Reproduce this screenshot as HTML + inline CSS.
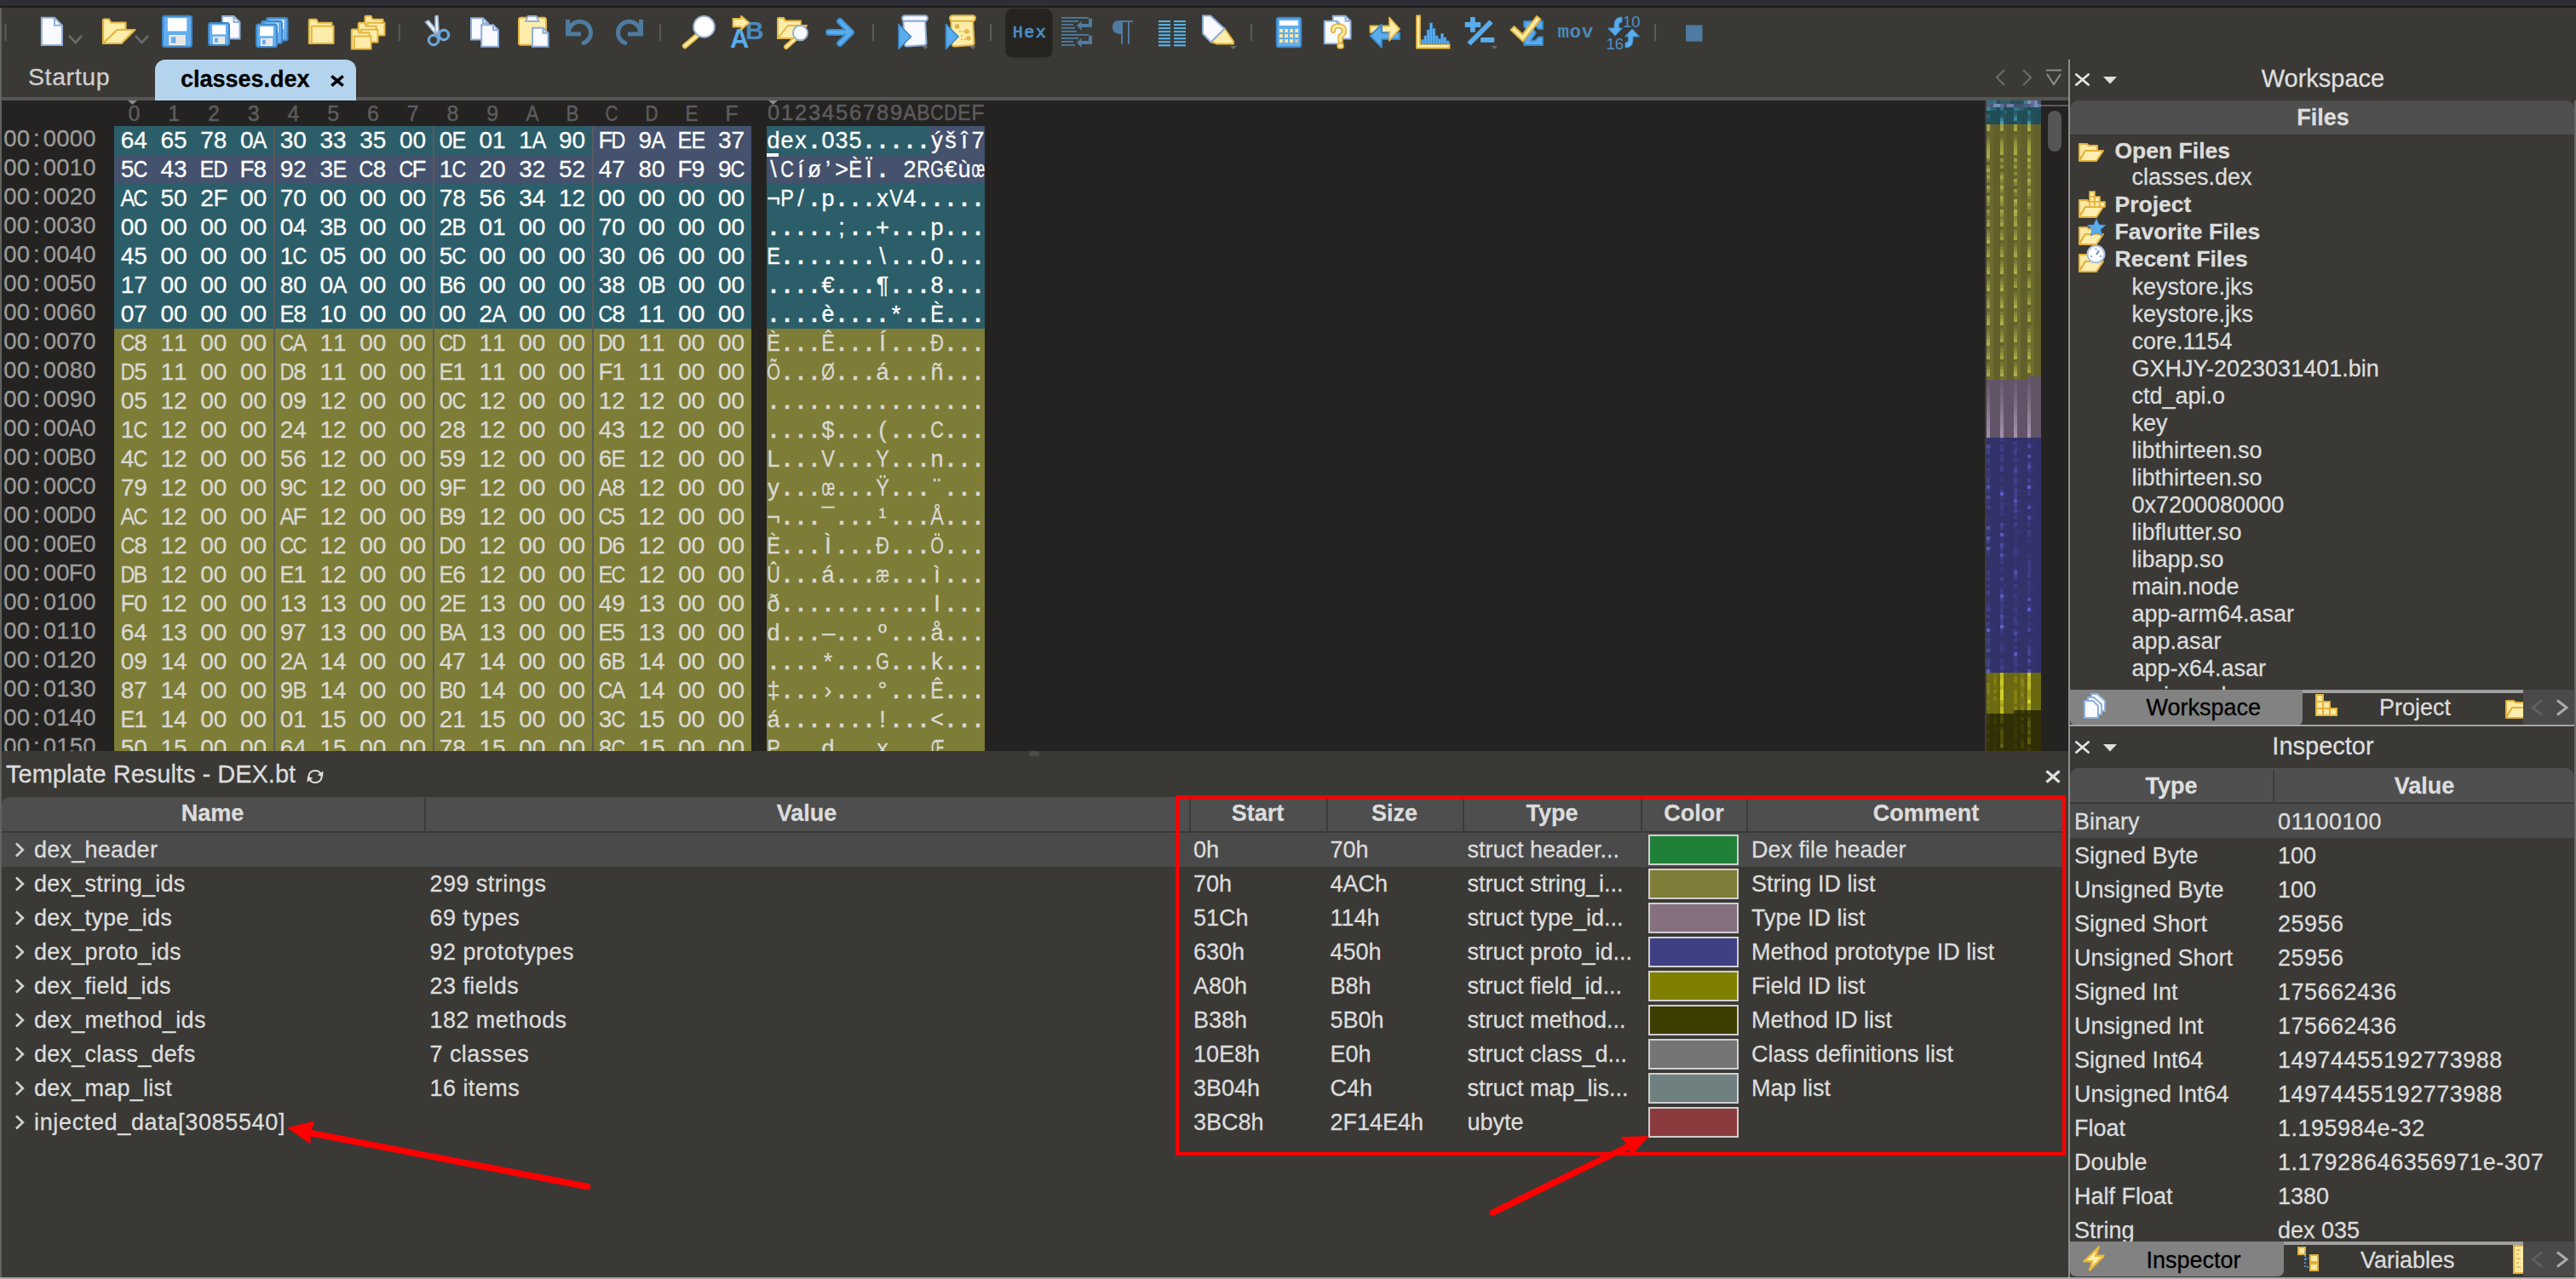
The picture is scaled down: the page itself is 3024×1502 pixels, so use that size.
<!DOCTYPE html><html><head><meta charset="utf-8"><style>
html,body{margin:0;padding:0;width:3024px;height:1502px;overflow:hidden;background:#3a3935;font-family:"Liberation Sans", sans-serif;}
.r{position:absolute;}
.t{position:absolute;white-space:pre;line-height:1;-webkit-text-stroke:0.3px currentColor;}
svg{position:absolute;overflow:visible;}
.hr{position:absolute;left:0;width:1200px;height:30px;line-height:1;white-space:pre;-webkit-text-stroke:0.3px currentColor;}
.hr i{position:absolute;top:0;width:24px;text-align:center;font-style:normal;}
</style></head><body>
<div class="r" style="left:0px;top:0px;width:3024px;height:7px;background:#2f2e37;"></div>
<div class="r" style="left:0px;top:7px;width:3024px;height:2px;background:#1c1c1e;"></div>
<div class="r" style="left:0px;top:9px;width:2.2px;height:1493px;background:#62625e;"></div>
<div class="r" style="left:2px;top:114px;width:2426px;height:4px;background:#555553;"></div>
<div class="r" style="left:182px;top:70px;width:236px;height:48px;background:#b4d4ee;border-radius:12px 12px 0 0;"></div>
<div class="t" style="left:33px;top:76.27px;font-size:28.5px;color:#cecece;letter-spacing:0.6px;">Startup</div>
<div class="t" style="left:212px;top:80.14px;font-size:27px;color:#000;font-weight:bold;">classes.dex</div>
<svg style="left:0;top:0" width="420" height="120"><path d="M389.3 89.3 L402.7 100.7 M402.7 89.3 L389.3 100.7" stroke="#000" stroke-width="3.6"/></svg>
<div class="r" style="left:2px;top:118px;width:2328px;height:764px;background:#242321;"></div>
<div class="r" style="left:2330px;top:118px;width:2px;height:764px;background:#3c3c3a;"></div>
<div class="r" style="left:2396px;top:118px;width:32px;height:764px;background:#242321;"></div>
<div class="r" style="left:2396px;top:123px;width:32px;height:2px;background:#5a5a58;"></div>
<div class="r" style="left:2404px;top:130px;width:16px;height:48px;background:#555555;border-radius:8px;"></div>
<div class="r" style="left:2428px;top:70px;width:1.5px;height:1432px;background:#8e8e8c;"></div>
<div class="r" style="left:0;top:118px;width:2330px;height:764px;overflow:hidden;">
<div class="r" style="left:134px;top:30px;width:748px;height:34px;background:#2c5e6a;"></div>
<div class="r" style="left:900px;top:30px;width:256px;height:34px;background:#2c5e6a;"></div>
<div class="r" style="left:134px;top:64px;width:748px;height:34px;background:#2c5e6a;"></div>
<div class="r" style="left:900px;top:64px;width:256px;height:34px;background:#2c5e6a;"></div>
<div class="r" style="left:134px;top:98px;width:748px;height:34px;background:#2c5e6a;"></div>
<div class="r" style="left:900px;top:98px;width:256px;height:34px;background:#2c5e6a;"></div>
<div class="r" style="left:134px;top:132px;width:748px;height:34px;background:#2c5e6a;"></div>
<div class="r" style="left:900px;top:132px;width:256px;height:34px;background:#2c5e6a;"></div>
<div class="r" style="left:134px;top:166px;width:748px;height:34px;background:#2c5e6a;"></div>
<div class="r" style="left:900px;top:166px;width:256px;height:34px;background:#2c5e6a;"></div>
<div class="r" style="left:134px;top:200px;width:748px;height:34px;background:#2c5e6a;"></div>
<div class="r" style="left:900px;top:200px;width:256px;height:34px;background:#2c5e6a;"></div>
<div class="r" style="left:134px;top:234px;width:748px;height:34px;background:#2c5e6a;"></div>
<div class="r" style="left:900px;top:234px;width:256px;height:34px;background:#2c5e6a;"></div>
<div class="r" style="left:134px;top:268px;width:748px;height:34px;background:#7e7d37;"></div>
<div class="r" style="left:900px;top:268px;width:256px;height:34px;background:#7e7d37;"></div>
<div class="r" style="left:134px;top:302px;width:748px;height:34px;background:#7e7d37;"></div>
<div class="r" style="left:900px;top:302px;width:256px;height:34px;background:#7e7d37;"></div>
<div class="r" style="left:134px;top:336px;width:748px;height:34px;background:#7e7d37;"></div>
<div class="r" style="left:900px;top:336px;width:256px;height:34px;background:#7e7d37;"></div>
<div class="r" style="left:134px;top:370px;width:748px;height:34px;background:#7e7d37;"></div>
<div class="r" style="left:900px;top:370px;width:256px;height:34px;background:#7e7d37;"></div>
<div class="r" style="left:134px;top:404px;width:748px;height:34px;background:#7e7d37;"></div>
<div class="r" style="left:900px;top:404px;width:256px;height:34px;background:#7e7d37;"></div>
<div class="r" style="left:134px;top:438px;width:748px;height:34px;background:#7e7d37;"></div>
<div class="r" style="left:900px;top:438px;width:256px;height:34px;background:#7e7d37;"></div>
<div class="r" style="left:134px;top:472px;width:748px;height:34px;background:#7e7d37;"></div>
<div class="r" style="left:900px;top:472px;width:256px;height:34px;background:#7e7d37;"></div>
<div class="r" style="left:134px;top:506px;width:748px;height:34px;background:#7e7d37;"></div>
<div class="r" style="left:900px;top:506px;width:256px;height:34px;background:#7e7d37;"></div>
<div class="r" style="left:134px;top:540px;width:748px;height:34px;background:#7e7d37;"></div>
<div class="r" style="left:900px;top:540px;width:256px;height:34px;background:#7e7d37;"></div>
<div class="r" style="left:134px;top:574px;width:748px;height:34px;background:#7e7d37;"></div>
<div class="r" style="left:900px;top:574px;width:256px;height:34px;background:#7e7d37;"></div>
<div class="r" style="left:134px;top:608px;width:748px;height:34px;background:#7e7d37;"></div>
<div class="r" style="left:900px;top:608px;width:256px;height:34px;background:#7e7d37;"></div>
<div class="r" style="left:134px;top:642px;width:748px;height:34px;background:#7e7d37;"></div>
<div class="r" style="left:900px;top:642px;width:256px;height:34px;background:#7e7d37;"></div>
<div class="r" style="left:134px;top:676px;width:748px;height:34px;background:#7e7d37;"></div>
<div class="r" style="left:900px;top:676px;width:256px;height:34px;background:#7e7d37;"></div>
<div class="r" style="left:134px;top:710px;width:748px;height:34px;background:#7e7d37;"></div>
<div class="r" style="left:900px;top:710px;width:256px;height:34px;background:#7e7d37;"></div>
<div class="r" style="left:134px;top:744px;width:748px;height:34px;background:#7e7d37;"></div>
<div class="r" style="left:900px;top:744px;width:256px;height:34px;background:#7e7d37;"></div>
<div class="r" style="left:695px;top:30px;width:187px;height:34px;background:#44526d;"></div>
<div class="r" style="left:134px;top:64px;width:748px;height:34px;background:#44526d;"></div>
<div class="r" style="left:1092px;top:30px;width:64px;height:34px;background:#44526d;"></div>
<div class="r" style="left:900px;top:64px;width:256px;height:34px;background:#44526d;"></div>
<div class="r" style="left:321px;top:30px;width:2px;height:734px;background:#5a5a5c;"></div>
<div class="r" style="left:508px;top:30px;width:2px;height:734px;background:#5a5a5c;"></div>
<div class="r" style="left:695px;top:30px;width:2px;height:734px;background:#5a5a5c;"></div>
<svg style="left:150px;top:0px" width="12" height="6"><polygon points="0,0 11,0 5.5,5" fill="#8a8a8a"/></svg>
<svg style="left:902px;top:0px" width="12" height="6"><polygon points="0,0 11,0 5.5,5" fill="#8a8a8a"/></svg>
<div class="hr" style="top:2.63px;font-size:25px;color:#5c5c5c;-webkit-text-stroke:0.5px currentColor;"><i style="left:145.38px">0</i><i style="left:192.12px">1</i><i style="left:238.88px">2</i><i style="left:285.62px">3</i><i style="left:332.38px">4</i><i style="left:379.12px">5</i><i style="left:425.88px">6</i><i style="left:472.62px">7</i><i style="left:519.38px">8</i><i style="left:566.12px">9</i><i style="left:612.88px;transform:scaleX(0.900)">A</i><i style="left:659.62px;transform:scaleX(0.900)">B</i><i style="left:706.38px;transform:scaleX(0.831)">C</i><i style="left:753.12px;transform:scaleX(0.831)">D</i><i style="left:799.88px;transform:scaleX(0.900)">E</i><i style="left:846.62px;transform:scaleX(0.982)">F</i></div>
<div class="hr" style="top:2.21px;font-size:25.5px;color:#5c5c5c;-webkit-text-stroke:0.5px currentColor;"><i style="left:896.00px">0</i><i style="left:912.00px">1</i><i style="left:928.00px">2</i><i style="left:944.00px">3</i><i style="left:960.00px">4</i><i style="left:976.00px">5</i><i style="left:992.00px">6</i><i style="left:1008.00px">7</i><i style="left:1024.00px">8</i><i style="left:1040.00px">9</i><i style="left:1056.00px;transform:scaleX(0.900)">A</i><i style="left:1072.00px;transform:scaleX(0.900)">B</i><i style="left:1088.00px;transform:scaleX(0.831)">C</i><i style="left:1104.00px;transform:scaleX(0.831)">D</i><i style="left:1120.00px;transform:scaleX(0.900)">E</i><i style="left:1136.00px;transform:scaleX(0.982)">F</i></div>
<div class="hr" style="top:31.42px;font-size:27.5px;color:#9c9c9c;"><i style="left:-0.20px">0</i><i style="left:15.30px">0</i><i style="left:30.80px">:</i><i style="left:46.30px">0</i><i style="left:61.80px">0</i><i style="left:77.30px">0</i><i style="left:92.80px">0</i></div>
<div class="hr" style="top:33.09px;font-size:28px;color:#ffffff;"><i style="left:137.59px">6</i><i style="left:153.16px">4</i><i style="left:184.34px">6</i><i style="left:199.91px">5</i><i style="left:231.09px">7</i><i style="left:246.67px">8</i><i style="left:277.83px">0</i><i style="left:293.42px;transform:scaleX(0.900)">A</i><i style="left:324.58px">3</i><i style="left:340.17px">0</i><i style="left:371.33px">3</i><i style="left:386.92px">3</i><i style="left:418.08px">3</i><i style="left:433.67px">5</i><i style="left:464.83px">0</i><i style="left:480.42px">0</i><i style="left:511.59px">0</i><i style="left:527.16px;transform:scaleX(0.900)">E</i><i style="left:558.34px">0</i><i style="left:573.91px">1</i><i style="left:605.09px">1</i><i style="left:620.66px;transform:scaleX(0.900)">A</i><i style="left:651.84px">9</i><i style="left:667.41px">0</i><i style="left:698.59px;transform:scaleX(0.982)">F</i><i style="left:714.16px;transform:scaleX(0.831)">D</i><i style="left:745.34px">9</i><i style="left:760.91px;transform:scaleX(0.900)">A</i><i style="left:792.09px;transform:scaleX(0.900)">E</i><i style="left:807.66px;transform:scaleX(0.900)">E</i><i style="left:838.84px">3</i><i style="left:854.41px">7</i></div>
<div class="hr" style="top:34.14px;font-size:27px;color:#ffffff;"><i style="left:896.00px">d</i><i style="left:912.00px">e</i><i style="left:928.00px">x</i><i style="left:944.00px;font-weight:bold">.</i><i style="left:960.00px">0</i><i style="left:976.00px">3</i><i style="left:992.00px">5</i><i style="left:1008.00px;font-weight:bold">.</i><i style="left:1024.00px;font-weight:bold">.</i><i style="left:1040.00px;font-weight:bold">.</i><i style="left:1056.00px;font-weight:bold">.</i><i style="left:1072.00px;font-weight:bold">.</i><i style="left:1088.00px">ý</i><i style="left:1104.00px">š</i><i style="left:1120.00px">î</i><i style="left:1136.00px">7</i></div>
<div class="hr" style="top:65.42px;font-size:27.5px;color:#9c9c9c;"><i style="left:-0.20px">0</i><i style="left:15.30px">0</i><i style="left:30.80px">:</i><i style="left:46.30px">0</i><i style="left:61.80px">0</i><i style="left:77.30px">1</i><i style="left:92.80px">0</i></div>
<div class="hr" style="top:67.09px;font-size:28px;color:#ffffff;"><i style="left:137.59px">5</i><i style="left:153.16px;transform:scaleX(0.831)">C</i><i style="left:184.34px">4</i><i style="left:199.91px">3</i><i style="left:231.09px;transform:scaleX(0.900)">E</i><i style="left:246.67px;transform:scaleX(0.831)">D</i><i style="left:277.83px;transform:scaleX(0.982)">F</i><i style="left:293.42px">8</i><i style="left:324.58px">9</i><i style="left:340.17px">2</i><i style="left:371.33px">3</i><i style="left:386.92px;transform:scaleX(0.900)">E</i><i style="left:418.08px;transform:scaleX(0.831)">C</i><i style="left:433.67px">8</i><i style="left:464.83px;transform:scaleX(0.831)">C</i><i style="left:480.42px;transform:scaleX(0.982)">F</i><i style="left:511.59px">1</i><i style="left:527.16px;transform:scaleX(0.831)">C</i><i style="left:558.34px">2</i><i style="left:573.91px">0</i><i style="left:605.09px">3</i><i style="left:620.66px">2</i><i style="left:651.84px">5</i><i style="left:667.41px">2</i><i style="left:698.59px">4</i><i style="left:714.16px">7</i><i style="left:745.34px">8</i><i style="left:760.91px">0</i><i style="left:792.09px;transform:scaleX(0.982)">F</i><i style="left:807.66px">9</i><i style="left:838.84px">9</i><i style="left:854.41px;transform:scaleX(0.831)">C</i></div>
<div class="hr" style="top:68.14px;font-size:27px;color:#ffffff;"><i style="left:896.00px">\</i><i style="left:912.00px;transform:scaleX(0.803)">C</i><i style="left:928.00px">í</i><i style="left:944.00px;transform:scaleX(0.950)">ø</i><i style="left:960.00px">’</i><i style="left:976.00px;transform:scaleX(0.993)">&gt;</i><i style="left:992.00px;transform:scaleX(0.870)">È</i><i style="left:1008.00px">Ï</i><i style="left:1024.00px;font-weight:bold">.</i><i style="left:1056.00px">2</i><i style="left:1072.00px;transform:scaleX(0.803)">R</i><i style="left:1088.00px;transform:scaleX(0.746)">G</i><i style="left:1104.00px">€</i><i style="left:1120.00px">ù</i><i style="left:1136.00px;transform:scaleX(0.615)">œ</i></div>
<div class="hr" style="top:99.42px;font-size:27.5px;color:#9c9c9c;"><i style="left:-0.20px">0</i><i style="left:15.30px">0</i><i style="left:30.80px">:</i><i style="left:46.30px">0</i><i style="left:61.80px">0</i><i style="left:77.30px">2</i><i style="left:92.80px">0</i></div>
<div class="hr" style="top:101.09px;font-size:28px;color:#ffffff;"><i style="left:137.59px;transform:scaleX(0.900)">A</i><i style="left:153.16px;transform:scaleX(0.831)">C</i><i style="left:184.34px">5</i><i style="left:199.91px">0</i><i style="left:231.09px">2</i><i style="left:246.67px;transform:scaleX(0.982)">F</i><i style="left:277.83px">0</i><i style="left:293.42px">0</i><i style="left:324.58px">7</i><i style="left:340.17px">0</i><i style="left:371.33px">0</i><i style="left:386.92px">0</i><i style="left:418.08px">0</i><i style="left:433.67px">0</i><i style="left:464.83px">0</i><i style="left:480.42px">0</i><i style="left:511.59px">7</i><i style="left:527.16px">8</i><i style="left:558.34px">5</i><i style="left:573.91px">6</i><i style="left:605.09px">3</i><i style="left:620.66px">4</i><i style="left:651.84px">1</i><i style="left:667.41px">2</i><i style="left:698.59px">0</i><i style="left:714.16px">0</i><i style="left:745.34px">0</i><i style="left:760.91px">0</i><i style="left:792.09px">0</i><i style="left:807.66px">0</i><i style="left:838.84px">0</i><i style="left:854.41px">0</i></div>
<div class="hr" style="top:102.14px;font-size:27px;color:#ffffff;"><i style="left:896.00px;transform:scaleX(0.993)">¬</i><i style="left:912.00px;transform:scaleX(0.870)">P</i><i style="left:928.00px">/</i><i style="left:944.00px;font-weight:bold">.</i><i style="left:960.00px">p</i><i style="left:976.00px;font-weight:bold">.</i><i style="left:992.00px;font-weight:bold">.</i><i style="left:1008.00px;font-weight:bold">.</i><i style="left:1024.00px">x</i><i style="left:1040.00px;transform:scaleX(0.870)">V</i><i style="left:1056.00px">4</i><i style="left:1072.00px;font-weight:bold">.</i><i style="left:1088.00px;font-weight:bold">.</i><i style="left:1104.00px;font-weight:bold">.</i><i style="left:1120.00px;font-weight:bold">.</i><i style="left:1136.00px;font-weight:bold">.</i></div>
<div class="hr" style="top:133.42px;font-size:27.5px;color:#9c9c9c;"><i style="left:-0.20px">0</i><i style="left:15.30px">0</i><i style="left:30.80px">:</i><i style="left:46.30px">0</i><i style="left:61.80px">0</i><i style="left:77.30px">3</i><i style="left:92.80px">0</i></div>
<div class="hr" style="top:135.09px;font-size:28px;color:#ffffff;"><i style="left:137.59px">0</i><i style="left:153.16px">0</i><i style="left:184.34px">0</i><i style="left:199.91px">0</i><i style="left:231.09px">0</i><i style="left:246.67px">0</i><i style="left:277.83px">0</i><i style="left:293.42px">0</i><i style="left:324.58px">0</i><i style="left:340.17px">4</i><i style="left:371.33px">3</i><i style="left:386.92px;transform:scaleX(0.900)">B</i><i style="left:418.08px">0</i><i style="left:433.67px">0</i><i style="left:464.83px">0</i><i style="left:480.42px">0</i><i style="left:511.59px">2</i><i style="left:527.16px;transform:scaleX(0.900)">B</i><i style="left:558.34px">0</i><i style="left:573.91px">1</i><i style="left:605.09px">0</i><i style="left:620.66px">0</i><i style="left:651.84px">0</i><i style="left:667.41px">0</i><i style="left:698.59px">7</i><i style="left:714.16px">0</i><i style="left:745.34px">0</i><i style="left:760.91px">0</i><i style="left:792.09px">0</i><i style="left:807.66px">0</i><i style="left:838.84px">0</i><i style="left:854.41px">0</i></div>
<div class="hr" style="top:136.14px;font-size:27px;color:#ffffff;"><i style="left:896.00px;font-weight:bold">.</i><i style="left:912.00px;font-weight:bold">.</i><i style="left:928.00px;font-weight:bold">.</i><i style="left:944.00px;font-weight:bold">.</i><i style="left:960.00px;font-weight:bold">.</i><i style="left:976.00px">;</i><i style="left:992.00px;font-weight:bold">.</i><i style="left:1008.00px;font-weight:bold">.</i><i style="left:1024.00px;transform:scaleX(0.993)">+</i><i style="left:1040.00px;font-weight:bold">.</i><i style="left:1056.00px;font-weight:bold">.</i><i style="left:1072.00px;font-weight:bold">.</i><i style="left:1088.00px">p</i><i style="left:1104.00px;font-weight:bold">.</i><i style="left:1120.00px;font-weight:bold">.</i><i style="left:1136.00px;font-weight:bold">.</i></div>
<div class="hr" style="top:167.42px;font-size:27.5px;color:#9c9c9c;"><i style="left:-0.20px">0</i><i style="left:15.30px">0</i><i style="left:30.80px">:</i><i style="left:46.30px">0</i><i style="left:61.80px">0</i><i style="left:77.30px">4</i><i style="left:92.80px">0</i></div>
<div class="hr" style="top:169.09px;font-size:28px;color:#ffffff;"><i style="left:137.59px">4</i><i style="left:153.16px">5</i><i style="left:184.34px">0</i><i style="left:199.91px">0</i><i style="left:231.09px">0</i><i style="left:246.67px">0</i><i style="left:277.83px">0</i><i style="left:293.42px">0</i><i style="left:324.58px">1</i><i style="left:340.17px;transform:scaleX(0.831)">C</i><i style="left:371.33px">0</i><i style="left:386.92px">5</i><i style="left:418.08px">0</i><i style="left:433.67px">0</i><i style="left:464.83px">0</i><i style="left:480.42px">0</i><i style="left:511.59px">5</i><i style="left:527.16px;transform:scaleX(0.831)">C</i><i style="left:558.34px">0</i><i style="left:573.91px">0</i><i style="left:605.09px">0</i><i style="left:620.66px">0</i><i style="left:651.84px">0</i><i style="left:667.41px">0</i><i style="left:698.59px">3</i><i style="left:714.16px">0</i><i style="left:745.34px">0</i><i style="left:760.91px">6</i><i style="left:792.09px">0</i><i style="left:807.66px">0</i><i style="left:838.84px">0</i><i style="left:854.41px">0</i></div>
<div class="hr" style="top:170.14px;font-size:27px;color:#ffffff;"><i style="left:896.00px;transform:scaleX(0.870)">E</i><i style="left:912.00px;font-weight:bold">.</i><i style="left:928.00px;font-weight:bold">.</i><i style="left:944.00px;font-weight:bold">.</i><i style="left:960.00px;font-weight:bold">.</i><i style="left:976.00px;font-weight:bold">.</i><i style="left:992.00px;font-weight:bold">.</i><i style="left:1008.00px;font-weight:bold">.</i><i style="left:1024.00px">\</i><i style="left:1040.00px;font-weight:bold">.</i><i style="left:1056.00px;font-weight:bold">.</i><i style="left:1072.00px;font-weight:bold">.</i><i style="left:1088.00px">0</i><i style="left:1104.00px;font-weight:bold">.</i><i style="left:1120.00px;font-weight:bold">.</i><i style="left:1136.00px;font-weight:bold">.</i></div>
<div class="hr" style="top:201.42px;font-size:27.5px;color:#9c9c9c;"><i style="left:-0.20px">0</i><i style="left:15.30px">0</i><i style="left:30.80px">:</i><i style="left:46.30px">0</i><i style="left:61.80px">0</i><i style="left:77.30px">5</i><i style="left:92.80px">0</i></div>
<div class="hr" style="top:203.09px;font-size:28px;color:#ffffff;"><i style="left:137.59px">1</i><i style="left:153.16px">7</i><i style="left:184.34px">0</i><i style="left:199.91px">0</i><i style="left:231.09px">0</i><i style="left:246.67px">0</i><i style="left:277.83px">0</i><i style="left:293.42px">0</i><i style="left:324.58px">8</i><i style="left:340.17px">0</i><i style="left:371.33px">0</i><i style="left:386.92px;transform:scaleX(0.900)">A</i><i style="left:418.08px">0</i><i style="left:433.67px">0</i><i style="left:464.83px">0</i><i style="left:480.42px">0</i><i style="left:511.59px;transform:scaleX(0.900)">B</i><i style="left:527.16px">6</i><i style="left:558.34px">0</i><i style="left:573.91px">0</i><i style="left:605.09px">0</i><i style="left:620.66px">0</i><i style="left:651.84px">0</i><i style="left:667.41px">0</i><i style="left:698.59px">3</i><i style="left:714.16px">8</i><i style="left:745.34px">0</i><i style="left:760.91px;transform:scaleX(0.900)">B</i><i style="left:792.09px">0</i><i style="left:807.66px">0</i><i style="left:838.84px">0</i><i style="left:854.41px">0</i></div>
<div class="hr" style="top:204.14px;font-size:27px;color:#ffffff;"><i style="left:896.00px;font-weight:bold">.</i><i style="left:912.00px;font-weight:bold">.</i><i style="left:928.00px;font-weight:bold">.</i><i style="left:944.00px;font-weight:bold">.</i><i style="left:960.00px">€</i><i style="left:976.00px;font-weight:bold">.</i><i style="left:992.00px;font-weight:bold">.</i><i style="left:1008.00px;font-weight:bold">.</i><i style="left:1024.00px">¶</i><i style="left:1040.00px;font-weight:bold">.</i><i style="left:1056.00px;font-weight:bold">.</i><i style="left:1072.00px;font-weight:bold">.</i><i style="left:1088.00px">8</i><i style="left:1104.00px;font-weight:bold">.</i><i style="left:1120.00px;font-weight:bold">.</i><i style="left:1136.00px;font-weight:bold">.</i></div>
<div class="hr" style="top:235.42px;font-size:27.5px;color:#9c9c9c;"><i style="left:-0.20px">0</i><i style="left:15.30px">0</i><i style="left:30.80px">:</i><i style="left:46.30px">0</i><i style="left:61.80px">0</i><i style="left:77.30px">6</i><i style="left:92.80px">0</i></div>
<div class="hr" style="top:237.09px;font-size:28px;color:#ffffff;"><i style="left:137.59px">0</i><i style="left:153.16px">7</i><i style="left:184.34px">0</i><i style="left:199.91px">0</i><i style="left:231.09px">0</i><i style="left:246.67px">0</i><i style="left:277.83px">0</i><i style="left:293.42px">0</i><i style="left:324.58px;transform:scaleX(0.900)">E</i><i style="left:340.17px">8</i><i style="left:371.33px">1</i><i style="left:386.92px">0</i><i style="left:418.08px">0</i><i style="left:433.67px">0</i><i style="left:464.83px">0</i><i style="left:480.42px">0</i><i style="left:511.59px">0</i><i style="left:527.16px">0</i><i style="left:558.34px">2</i><i style="left:573.91px;transform:scaleX(0.900)">A</i><i style="left:605.09px">0</i><i style="left:620.66px">0</i><i style="left:651.84px">0</i><i style="left:667.41px">0</i><i style="left:698.59px;transform:scaleX(0.831)">C</i><i style="left:714.16px">8</i><i style="left:745.34px">1</i><i style="left:760.91px">1</i><i style="left:792.09px">0</i><i style="left:807.66px">0</i><i style="left:838.84px">0</i><i style="left:854.41px">0</i></div>
<div class="hr" style="top:238.14px;font-size:27px;color:#ffffff;"><i style="left:896.00px;font-weight:bold">.</i><i style="left:912.00px;font-weight:bold">.</i><i style="left:928.00px;font-weight:bold">.</i><i style="left:944.00px;font-weight:bold">.</i><i style="left:960.00px">è</i><i style="left:976.00px;font-weight:bold">.</i><i style="left:992.00px;font-weight:bold">.</i><i style="left:1008.00px;font-weight:bold">.</i><i style="left:1024.00px;font-weight:bold">.</i><i style="left:1040.00px">*</i><i style="left:1056.00px;font-weight:bold">.</i><i style="left:1072.00px;font-weight:bold">.</i><i style="left:1088.00px;transform:scaleX(0.870)">È</i><i style="left:1104.00px;font-weight:bold">.</i><i style="left:1120.00px;font-weight:bold">.</i><i style="left:1136.00px;font-weight:bold">.</i></div>
<div class="hr" style="top:269.42px;font-size:27.5px;color:#9c9c9c;"><i style="left:-0.20px">0</i><i style="left:15.30px">0</i><i style="left:30.80px">:</i><i style="left:46.30px">0</i><i style="left:61.80px">0</i><i style="left:77.30px">7</i><i style="left:92.80px">0</i></div>
<div class="hr" style="top:271.09px;font-size:28px;color:#d9d9d3;"><i style="left:137.59px;transform:scaleX(0.831)">C</i><i style="left:153.16px">8</i><i style="left:184.34px">1</i><i style="left:199.91px">1</i><i style="left:231.09px">0</i><i style="left:246.67px">0</i><i style="left:277.83px">0</i><i style="left:293.42px">0</i><i style="left:324.58px;transform:scaleX(0.831)">C</i><i style="left:340.17px;transform:scaleX(0.900)">A</i><i style="left:371.33px">1</i><i style="left:386.92px">1</i><i style="left:418.08px">0</i><i style="left:433.67px">0</i><i style="left:464.83px">0</i><i style="left:480.42px">0</i><i style="left:511.59px;transform:scaleX(0.831)">C</i><i style="left:527.16px;transform:scaleX(0.831)">D</i><i style="left:558.34px">1</i><i style="left:573.91px">1</i><i style="left:605.09px">0</i><i style="left:620.66px">0</i><i style="left:651.84px">0</i><i style="left:667.41px">0</i><i style="left:698.59px;transform:scaleX(0.831)">D</i><i style="left:714.16px">0</i><i style="left:745.34px">1</i><i style="left:760.91px">1</i><i style="left:792.09px">0</i><i style="left:807.66px">0</i><i style="left:838.84px">0</i><i style="left:854.41px">0</i></div>
<div class="hr" style="top:272.14px;font-size:27px;color:#d9d9d3;"><i style="left:896.00px;transform:scaleX(0.870)">È</i><i style="left:912.00px;font-weight:bold">.</i><i style="left:928.00px;font-weight:bold">.</i><i style="left:944.00px;font-weight:bold">.</i><i style="left:960.00px;transform:scaleX(0.870)">Ê</i><i style="left:976.00px;font-weight:bold">.</i><i style="left:992.00px;font-weight:bold">.</i><i style="left:1008.00px;font-weight:bold">.</i><i style="left:1024.00px">Í</i><i style="left:1040.00px;font-weight:bold">.</i><i style="left:1056.00px;font-weight:bold">.</i><i style="left:1072.00px;font-weight:bold">.</i><i style="left:1088.00px;transform:scaleX(0.803)">Ð</i><i style="left:1104.00px;font-weight:bold">.</i><i style="left:1120.00px;font-weight:bold">.</i><i style="left:1136.00px;font-weight:bold">.</i></div>
<div class="hr" style="top:303.42px;font-size:27.5px;color:#9c9c9c;"><i style="left:-0.20px">0</i><i style="left:15.30px">0</i><i style="left:30.80px">:</i><i style="left:46.30px">0</i><i style="left:61.80px">0</i><i style="left:77.30px">8</i><i style="left:92.80px">0</i></div>
<div class="hr" style="top:305.09px;font-size:28px;color:#d9d9d3;"><i style="left:137.59px;transform:scaleX(0.831)">D</i><i style="left:153.16px">5</i><i style="left:184.34px">1</i><i style="left:199.91px">1</i><i style="left:231.09px">0</i><i style="left:246.67px">0</i><i style="left:277.83px">0</i><i style="left:293.42px">0</i><i style="left:324.58px;transform:scaleX(0.831)">D</i><i style="left:340.17px">8</i><i style="left:371.33px">1</i><i style="left:386.92px">1</i><i style="left:418.08px">0</i><i style="left:433.67px">0</i><i style="left:464.83px">0</i><i style="left:480.42px">0</i><i style="left:511.59px;transform:scaleX(0.900)">E</i><i style="left:527.16px">1</i><i style="left:558.34px">1</i><i style="left:573.91px">1</i><i style="left:605.09px">0</i><i style="left:620.66px">0</i><i style="left:651.84px">0</i><i style="left:667.41px">0</i><i style="left:698.59px;transform:scaleX(0.982)">F</i><i style="left:714.16px">1</i><i style="left:745.34px">1</i><i style="left:760.91px">1</i><i style="left:792.09px">0</i><i style="left:807.66px">0</i><i style="left:838.84px">0</i><i style="left:854.41px">0</i></div>
<div class="hr" style="top:306.14px;font-size:27px;color:#d9d9d3;"><i style="left:896.00px;transform:scaleX(0.746)">Õ</i><i style="left:912.00px;font-weight:bold">.</i><i style="left:928.00px;font-weight:bold">.</i><i style="left:944.00px;font-weight:bold">.</i><i style="left:960.00px;transform:scaleX(0.746)">Ø</i><i style="left:976.00px;font-weight:bold">.</i><i style="left:992.00px;font-weight:bold">.</i><i style="left:1008.00px;font-weight:bold">.</i><i style="left:1024.00px">á</i><i style="left:1040.00px;font-weight:bold">.</i><i style="left:1056.00px;font-weight:bold">.</i><i style="left:1072.00px;font-weight:bold">.</i><i style="left:1088.00px">ñ</i><i style="left:1104.00px;font-weight:bold">.</i><i style="left:1120.00px;font-weight:bold">.</i><i style="left:1136.00px;font-weight:bold">.</i></div>
<div class="hr" style="top:337.42px;font-size:27.5px;color:#9c9c9c;"><i style="left:-0.20px">0</i><i style="left:15.30px">0</i><i style="left:30.80px">:</i><i style="left:46.30px">0</i><i style="left:61.80px">0</i><i style="left:77.30px">9</i><i style="left:92.80px">0</i></div>
<div class="hr" style="top:339.09px;font-size:28px;color:#d9d9d3;"><i style="left:137.59px">0</i><i style="left:153.16px">5</i><i style="left:184.34px">1</i><i style="left:199.91px">2</i><i style="left:231.09px">0</i><i style="left:246.67px">0</i><i style="left:277.83px">0</i><i style="left:293.42px">0</i><i style="left:324.58px">0</i><i style="left:340.17px">9</i><i style="left:371.33px">1</i><i style="left:386.92px">2</i><i style="left:418.08px">0</i><i style="left:433.67px">0</i><i style="left:464.83px">0</i><i style="left:480.42px">0</i><i style="left:511.59px">0</i><i style="left:527.16px;transform:scaleX(0.831)">C</i><i style="left:558.34px">1</i><i style="left:573.91px">2</i><i style="left:605.09px">0</i><i style="left:620.66px">0</i><i style="left:651.84px">0</i><i style="left:667.41px">0</i><i style="left:698.59px">1</i><i style="left:714.16px">2</i><i style="left:745.34px">1</i><i style="left:760.91px">2</i><i style="left:792.09px">0</i><i style="left:807.66px">0</i><i style="left:838.84px">0</i><i style="left:854.41px">0</i></div>
<div class="hr" style="top:340.14px;font-size:27px;color:#d9d9d3;"><i style="left:896.00px;font-weight:bold">.</i><i style="left:912.00px;font-weight:bold">.</i><i style="left:928.00px;font-weight:bold">.</i><i style="left:944.00px;font-weight:bold">.</i><i style="left:960.00px;font-weight:bold">.</i><i style="left:976.00px;font-weight:bold">.</i><i style="left:992.00px;font-weight:bold">.</i><i style="left:1008.00px;font-weight:bold">.</i><i style="left:1024.00px;font-weight:bold">.</i><i style="left:1040.00px;font-weight:bold">.</i><i style="left:1056.00px;font-weight:bold">.</i><i style="left:1072.00px;font-weight:bold">.</i><i style="left:1088.00px;font-weight:bold">.</i><i style="left:1104.00px;font-weight:bold">.</i><i style="left:1120.00px;font-weight:bold">.</i><i style="left:1136.00px;font-weight:bold">.</i></div>
<div class="hr" style="top:371.42px;font-size:27.5px;color:#9c9c9c;"><i style="left:-0.20px">0</i><i style="left:15.30px">0</i><i style="left:30.80px">:</i><i style="left:46.30px">0</i><i style="left:61.80px">0</i><i style="left:77.30px;transform:scaleX(0.900)">A</i><i style="left:92.80px">0</i></div>
<div class="hr" style="top:373.09px;font-size:28px;color:#d9d9d3;"><i style="left:137.59px">1</i><i style="left:153.16px;transform:scaleX(0.831)">C</i><i style="left:184.34px">1</i><i style="left:199.91px">2</i><i style="left:231.09px">0</i><i style="left:246.67px">0</i><i style="left:277.83px">0</i><i style="left:293.42px">0</i><i style="left:324.58px">2</i><i style="left:340.17px">4</i><i style="left:371.33px">1</i><i style="left:386.92px">2</i><i style="left:418.08px">0</i><i style="left:433.67px">0</i><i style="left:464.83px">0</i><i style="left:480.42px">0</i><i style="left:511.59px">2</i><i style="left:527.16px">8</i><i style="left:558.34px">1</i><i style="left:573.91px">2</i><i style="left:605.09px">0</i><i style="left:620.66px">0</i><i style="left:651.84px">0</i><i style="left:667.41px">0</i><i style="left:698.59px">4</i><i style="left:714.16px">3</i><i style="left:745.34px">1</i><i style="left:760.91px">2</i><i style="left:792.09px">0</i><i style="left:807.66px">0</i><i style="left:838.84px">0</i><i style="left:854.41px">0</i></div>
<div class="hr" style="top:374.14px;font-size:27px;color:#d9d9d3;"><i style="left:896.00px;font-weight:bold">.</i><i style="left:912.00px;font-weight:bold">.</i><i style="left:928.00px;font-weight:bold">.</i><i style="left:944.00px;font-weight:bold">.</i><i style="left:960.00px">$</i><i style="left:976.00px;font-weight:bold">.</i><i style="left:992.00px;font-weight:bold">.</i><i style="left:1008.00px;font-weight:bold">.</i><i style="left:1024.00px">(</i><i style="left:1040.00px;font-weight:bold">.</i><i style="left:1056.00px;font-weight:bold">.</i><i style="left:1072.00px;font-weight:bold">.</i><i style="left:1088.00px;transform:scaleX(0.803)">C</i><i style="left:1104.00px;font-weight:bold">.</i><i style="left:1120.00px;font-weight:bold">.</i><i style="left:1136.00px;font-weight:bold">.</i></div>
<div class="hr" style="top:405.42px;font-size:27.5px;color:#9c9c9c;"><i style="left:-0.20px">0</i><i style="left:15.30px">0</i><i style="left:30.80px">:</i><i style="left:46.30px">0</i><i style="left:61.80px">0</i><i style="left:77.30px;transform:scaleX(0.900)">B</i><i style="left:92.80px">0</i></div>
<div class="hr" style="top:407.09px;font-size:28px;color:#d9d9d3;"><i style="left:137.59px">4</i><i style="left:153.16px;transform:scaleX(0.831)">C</i><i style="left:184.34px">1</i><i style="left:199.91px">2</i><i style="left:231.09px">0</i><i style="left:246.67px">0</i><i style="left:277.83px">0</i><i style="left:293.42px">0</i><i style="left:324.58px">5</i><i style="left:340.17px">6</i><i style="left:371.33px">1</i><i style="left:386.92px">2</i><i style="left:418.08px">0</i><i style="left:433.67px">0</i><i style="left:464.83px">0</i><i style="left:480.42px">0</i><i style="left:511.59px">5</i><i style="left:527.16px">9</i><i style="left:558.34px">1</i><i style="left:573.91px">2</i><i style="left:605.09px">0</i><i style="left:620.66px">0</i><i style="left:651.84px">0</i><i style="left:667.41px">0</i><i style="left:698.59px">6</i><i style="left:714.16px;transform:scaleX(0.900)">E</i><i style="left:745.34px">1</i><i style="left:760.91px">2</i><i style="left:792.09px">0</i><i style="left:807.66px">0</i><i style="left:838.84px">0</i><i style="left:854.41px">0</i></div>
<div class="hr" style="top:408.14px;font-size:27px;color:#d9d9d3;"><i style="left:896.00px">L</i><i style="left:912.00px;font-weight:bold">.</i><i style="left:928.00px;font-weight:bold">.</i><i style="left:944.00px;font-weight:bold">.</i><i style="left:960.00px;transform:scaleX(0.870)">V</i><i style="left:976.00px;font-weight:bold">.</i><i style="left:992.00px;font-weight:bold">.</i><i style="left:1008.00px;font-weight:bold">.</i><i style="left:1024.00px;transform:scaleX(0.870)">Y</i><i style="left:1040.00px;font-weight:bold">.</i><i style="left:1056.00px;font-weight:bold">.</i><i style="left:1072.00px;font-weight:bold">.</i><i style="left:1088.00px">n</i><i style="left:1104.00px;font-weight:bold">.</i><i style="left:1120.00px;font-weight:bold">.</i><i style="left:1136.00px;font-weight:bold">.</i></div>
<div class="hr" style="top:439.42px;font-size:27.5px;color:#9c9c9c;"><i style="left:-0.20px">0</i><i style="left:15.30px">0</i><i style="left:30.80px">:</i><i style="left:46.30px">0</i><i style="left:61.80px">0</i><i style="left:77.30px;transform:scaleX(0.831)">C</i><i style="left:92.80px">0</i></div>
<div class="hr" style="top:441.09px;font-size:28px;color:#d9d9d3;"><i style="left:137.59px">7</i><i style="left:153.16px">9</i><i style="left:184.34px">1</i><i style="left:199.91px">2</i><i style="left:231.09px">0</i><i style="left:246.67px">0</i><i style="left:277.83px">0</i><i style="left:293.42px">0</i><i style="left:324.58px">9</i><i style="left:340.17px;transform:scaleX(0.831)">C</i><i style="left:371.33px">1</i><i style="left:386.92px">2</i><i style="left:418.08px">0</i><i style="left:433.67px">0</i><i style="left:464.83px">0</i><i style="left:480.42px">0</i><i style="left:511.59px">9</i><i style="left:527.16px;transform:scaleX(0.982)">F</i><i style="left:558.34px">1</i><i style="left:573.91px">2</i><i style="left:605.09px">0</i><i style="left:620.66px">0</i><i style="left:651.84px">0</i><i style="left:667.41px">0</i><i style="left:698.59px;transform:scaleX(0.900)">A</i><i style="left:714.16px">8</i><i style="left:745.34px">1</i><i style="left:760.91px">2</i><i style="left:792.09px">0</i><i style="left:807.66px">0</i><i style="left:838.84px">0</i><i style="left:854.41px">0</i></div>
<div class="hr" style="top:442.14px;font-size:27px;color:#d9d9d3;"><i style="left:896.00px">y</i><i style="left:912.00px;font-weight:bold">.</i><i style="left:928.00px;font-weight:bold">.</i><i style="left:944.00px;font-weight:bold">.</i><i style="left:960.00px;transform:scaleX(0.615)">œ</i><i style="left:976.00px;font-weight:bold">.</i><i style="left:992.00px;font-weight:bold">.</i><i style="left:1008.00px;font-weight:bold">.</i><i style="left:1024.00px;transform:scaleX(0.870)">Ÿ</i><i style="left:1040.00px;font-weight:bold">.</i><i style="left:1056.00px;font-weight:bold">.</i><i style="left:1072.00px;font-weight:bold">.</i><i style="left:1088.00px">¨</i><i style="left:1104.00px;font-weight:bold">.</i><i style="left:1120.00px;font-weight:bold">.</i><i style="left:1136.00px;font-weight:bold">.</i></div>
<div class="hr" style="top:473.42px;font-size:27.5px;color:#9c9c9c;"><i style="left:-0.20px">0</i><i style="left:15.30px">0</i><i style="left:30.80px">:</i><i style="left:46.30px">0</i><i style="left:61.80px">0</i><i style="left:77.30px;transform:scaleX(0.831)">D</i><i style="left:92.80px">0</i></div>
<div class="hr" style="top:475.09px;font-size:28px;color:#d9d9d3;"><i style="left:137.59px;transform:scaleX(0.900)">A</i><i style="left:153.16px;transform:scaleX(0.831)">C</i><i style="left:184.34px">1</i><i style="left:199.91px">2</i><i style="left:231.09px">0</i><i style="left:246.67px">0</i><i style="left:277.83px">0</i><i style="left:293.42px">0</i><i style="left:324.58px;transform:scaleX(0.900)">A</i><i style="left:340.17px;transform:scaleX(0.982)">F</i><i style="left:371.33px">1</i><i style="left:386.92px">2</i><i style="left:418.08px">0</i><i style="left:433.67px">0</i><i style="left:464.83px">0</i><i style="left:480.42px">0</i><i style="left:511.59px;transform:scaleX(0.900)">B</i><i style="left:527.16px">9</i><i style="left:558.34px">1</i><i style="left:573.91px">2</i><i style="left:605.09px">0</i><i style="left:620.66px">0</i><i style="left:651.84px">0</i><i style="left:667.41px">0</i><i style="left:698.59px;transform:scaleX(0.831)">C</i><i style="left:714.16px">5</i><i style="left:745.34px">1</i><i style="left:760.91px">2</i><i style="left:792.09px">0</i><i style="left:807.66px">0</i><i style="left:838.84px">0</i><i style="left:854.41px">0</i></div>
<div class="hr" style="top:476.14px;font-size:27px;color:#d9d9d3;"><i style="left:896.00px;transform:scaleX(0.993)">¬</i><i style="left:912.00px;font-weight:bold">.</i><i style="left:928.00px;font-weight:bold">.</i><i style="left:944.00px;font-weight:bold">.</i><i style="left:960.00px">¯</i><i style="left:976.00px;font-weight:bold">.</i><i style="left:992.00px;font-weight:bold">.</i><i style="left:1008.00px;font-weight:bold">.</i><i style="left:1024.00px">¹</i><i style="left:1040.00px;font-weight:bold">.</i><i style="left:1056.00px;font-weight:bold">.</i><i style="left:1072.00px;font-weight:bold">.</i><i style="left:1088.00px;transform:scaleX(0.870)">Å</i><i style="left:1104.00px;font-weight:bold">.</i><i style="left:1120.00px;font-weight:bold">.</i><i style="left:1136.00px;font-weight:bold">.</i></div>
<div class="hr" style="top:507.42px;font-size:27.5px;color:#9c9c9c;"><i style="left:-0.20px">0</i><i style="left:15.30px">0</i><i style="left:30.80px">:</i><i style="left:46.30px">0</i><i style="left:61.80px">0</i><i style="left:77.30px;transform:scaleX(0.900)">E</i><i style="left:92.80px">0</i></div>
<div class="hr" style="top:509.09px;font-size:28px;color:#d9d9d3;"><i style="left:137.59px;transform:scaleX(0.831)">C</i><i style="left:153.16px">8</i><i style="left:184.34px">1</i><i style="left:199.91px">2</i><i style="left:231.09px">0</i><i style="left:246.67px">0</i><i style="left:277.83px">0</i><i style="left:293.42px">0</i><i style="left:324.58px;transform:scaleX(0.831)">C</i><i style="left:340.17px;transform:scaleX(0.831)">C</i><i style="left:371.33px">1</i><i style="left:386.92px">2</i><i style="left:418.08px">0</i><i style="left:433.67px">0</i><i style="left:464.83px">0</i><i style="left:480.42px">0</i><i style="left:511.59px;transform:scaleX(0.831)">D</i><i style="left:527.16px">0</i><i style="left:558.34px">1</i><i style="left:573.91px">2</i><i style="left:605.09px">0</i><i style="left:620.66px">0</i><i style="left:651.84px">0</i><i style="left:667.41px">0</i><i style="left:698.59px;transform:scaleX(0.831)">D</i><i style="left:714.16px">6</i><i style="left:745.34px">1</i><i style="left:760.91px">2</i><i style="left:792.09px">0</i><i style="left:807.66px">0</i><i style="left:838.84px">0</i><i style="left:854.41px">0</i></div>
<div class="hr" style="top:510.14px;font-size:27px;color:#d9d9d3;"><i style="left:896.00px;transform:scaleX(0.870)">È</i><i style="left:912.00px;font-weight:bold">.</i><i style="left:928.00px;font-weight:bold">.</i><i style="left:944.00px;font-weight:bold">.</i><i style="left:960.00px">Ì</i><i style="left:976.00px;font-weight:bold">.</i><i style="left:992.00px;font-weight:bold">.</i><i style="left:1008.00px;font-weight:bold">.</i><i style="left:1024.00px;transform:scaleX(0.803)">Ð</i><i style="left:1040.00px;font-weight:bold">.</i><i style="left:1056.00px;font-weight:bold">.</i><i style="left:1072.00px;font-weight:bold">.</i><i style="left:1088.00px;transform:scaleX(0.746)">Ö</i><i style="left:1104.00px;font-weight:bold">.</i><i style="left:1120.00px;font-weight:bold">.</i><i style="left:1136.00px;font-weight:bold">.</i></div>
<div class="hr" style="top:541.42px;font-size:27.5px;color:#9c9c9c;"><i style="left:-0.20px">0</i><i style="left:15.30px">0</i><i style="left:30.80px">:</i><i style="left:46.30px">0</i><i style="left:61.80px">0</i><i style="left:77.30px;transform:scaleX(0.982)">F</i><i style="left:92.80px">0</i></div>
<div class="hr" style="top:543.09px;font-size:28px;color:#d9d9d3;"><i style="left:137.59px;transform:scaleX(0.831)">D</i><i style="left:153.16px;transform:scaleX(0.900)">B</i><i style="left:184.34px">1</i><i style="left:199.91px">2</i><i style="left:231.09px">0</i><i style="left:246.67px">0</i><i style="left:277.83px">0</i><i style="left:293.42px">0</i><i style="left:324.58px;transform:scaleX(0.900)">E</i><i style="left:340.17px">1</i><i style="left:371.33px">1</i><i style="left:386.92px">2</i><i style="left:418.08px">0</i><i style="left:433.67px">0</i><i style="left:464.83px">0</i><i style="left:480.42px">0</i><i style="left:511.59px;transform:scaleX(0.900)">E</i><i style="left:527.16px">6</i><i style="left:558.34px">1</i><i style="left:573.91px">2</i><i style="left:605.09px">0</i><i style="left:620.66px">0</i><i style="left:651.84px">0</i><i style="left:667.41px">0</i><i style="left:698.59px;transform:scaleX(0.900)">E</i><i style="left:714.16px;transform:scaleX(0.831)">C</i><i style="left:745.34px">1</i><i style="left:760.91px">2</i><i style="left:792.09px">0</i><i style="left:807.66px">0</i><i style="left:838.84px">0</i><i style="left:854.41px">0</i></div>
<div class="hr" style="top:544.14px;font-size:27px;color:#d9d9d3;"><i style="left:896.00px;transform:scaleX(0.803)">Û</i><i style="left:912.00px;font-weight:bold">.</i><i style="left:928.00px;font-weight:bold">.</i><i style="left:944.00px;font-weight:bold">.</i><i style="left:960.00px">á</i><i style="left:976.00px;font-weight:bold">.</i><i style="left:992.00px;font-weight:bold">.</i><i style="left:1008.00px;font-weight:bold">.</i><i style="left:1024.00px;transform:scaleX(0.652)">æ</i><i style="left:1040.00px;font-weight:bold">.</i><i style="left:1056.00px;font-weight:bold">.</i><i style="left:1072.00px;font-weight:bold">.</i><i style="left:1088.00px">ì</i><i style="left:1104.00px;font-weight:bold">.</i><i style="left:1120.00px;font-weight:bold">.</i><i style="left:1136.00px;font-weight:bold">.</i></div>
<div class="hr" style="top:575.42px;font-size:27.5px;color:#9c9c9c;"><i style="left:-0.20px">0</i><i style="left:15.30px">0</i><i style="left:30.80px">:</i><i style="left:46.30px">0</i><i style="left:61.80px">1</i><i style="left:77.30px">0</i><i style="left:92.80px">0</i></div>
<div class="hr" style="top:577.09px;font-size:28px;color:#d9d9d3;"><i style="left:137.59px;transform:scaleX(0.982)">F</i><i style="left:153.16px">0</i><i style="left:184.34px">1</i><i style="left:199.91px">2</i><i style="left:231.09px">0</i><i style="left:246.67px">0</i><i style="left:277.83px">0</i><i style="left:293.42px">0</i><i style="left:324.58px">1</i><i style="left:340.17px">3</i><i style="left:371.33px">1</i><i style="left:386.92px">3</i><i style="left:418.08px">0</i><i style="left:433.67px">0</i><i style="left:464.83px">0</i><i style="left:480.42px">0</i><i style="left:511.59px">2</i><i style="left:527.16px;transform:scaleX(0.900)">E</i><i style="left:558.34px">1</i><i style="left:573.91px">3</i><i style="left:605.09px">0</i><i style="left:620.66px">0</i><i style="left:651.84px">0</i><i style="left:667.41px">0</i><i style="left:698.59px">4</i><i style="left:714.16px">9</i><i style="left:745.34px">1</i><i style="left:760.91px">3</i><i style="left:792.09px">0</i><i style="left:807.66px">0</i><i style="left:838.84px">0</i><i style="left:854.41px">0</i></div>
<div class="hr" style="top:578.14px;font-size:27px;color:#d9d9d3;"><i style="left:896.00px">ð</i><i style="left:912.00px;font-weight:bold">.</i><i style="left:928.00px;font-weight:bold">.</i><i style="left:944.00px;font-weight:bold">.</i><i style="left:960.00px;font-weight:bold">.</i><i style="left:976.00px;font-weight:bold">.</i><i style="left:992.00px;font-weight:bold">.</i><i style="left:1008.00px;font-weight:bold">.</i><i style="left:1024.00px;font-weight:bold">.</i><i style="left:1040.00px;font-weight:bold">.</i><i style="left:1056.00px;font-weight:bold">.</i><i style="left:1072.00px;font-weight:bold">.</i><i style="left:1088.00px">I</i><i style="left:1104.00px;font-weight:bold">.</i><i style="left:1120.00px;font-weight:bold">.</i><i style="left:1136.00px;font-weight:bold">.</i></div>
<div class="hr" style="top:609.42px;font-size:27.5px;color:#9c9c9c;"><i style="left:-0.20px">0</i><i style="left:15.30px">0</i><i style="left:30.80px">:</i><i style="left:46.30px">0</i><i style="left:61.80px">1</i><i style="left:77.30px">1</i><i style="left:92.80px">0</i></div>
<div class="hr" style="top:611.09px;font-size:28px;color:#d9d9d3;"><i style="left:137.59px">6</i><i style="left:153.16px">4</i><i style="left:184.34px">1</i><i style="left:199.91px">3</i><i style="left:231.09px">0</i><i style="left:246.67px">0</i><i style="left:277.83px">0</i><i style="left:293.42px">0</i><i style="left:324.58px">9</i><i style="left:340.17px">7</i><i style="left:371.33px">1</i><i style="left:386.92px">3</i><i style="left:418.08px">0</i><i style="left:433.67px">0</i><i style="left:464.83px">0</i><i style="left:480.42px">0</i><i style="left:511.59px;transform:scaleX(0.900)">B</i><i style="left:527.16px;transform:scaleX(0.900)">A</i><i style="left:558.34px">1</i><i style="left:573.91px">3</i><i style="left:605.09px">0</i><i style="left:620.66px">0</i><i style="left:651.84px">0</i><i style="left:667.41px">0</i><i style="left:698.59px;transform:scaleX(0.900)">E</i><i style="left:714.16px">5</i><i style="left:745.34px">1</i><i style="left:760.91px">3</i><i style="left:792.09px">0</i><i style="left:807.66px">0</i><i style="left:838.84px">0</i><i style="left:854.41px">0</i></div>
<div class="hr" style="top:612.14px;font-size:27px;color:#d9d9d3;"><i style="left:896.00px">d</i><i style="left:912.00px;font-weight:bold">.</i><i style="left:928.00px;font-weight:bold">.</i><i style="left:944.00px;font-weight:bold">.</i><i style="left:960.00px;transform:scaleX(0.580)">—</i><i style="left:976.00px;font-weight:bold">.</i><i style="left:992.00px;font-weight:bold">.</i><i style="left:1008.00px;font-weight:bold">.</i><i style="left:1024.00px">º</i><i style="left:1040.00px;font-weight:bold">.</i><i style="left:1056.00px;font-weight:bold">.</i><i style="left:1072.00px;font-weight:bold">.</i><i style="left:1088.00px">å</i><i style="left:1104.00px;font-weight:bold">.</i><i style="left:1120.00px;font-weight:bold">.</i><i style="left:1136.00px;font-weight:bold">.</i></div>
<div class="hr" style="top:643.42px;font-size:27.5px;color:#9c9c9c;"><i style="left:-0.20px">0</i><i style="left:15.30px">0</i><i style="left:30.80px">:</i><i style="left:46.30px">0</i><i style="left:61.80px">1</i><i style="left:77.30px">2</i><i style="left:92.80px">0</i></div>
<div class="hr" style="top:645.09px;font-size:28px;color:#d9d9d3;"><i style="left:137.59px">0</i><i style="left:153.16px">9</i><i style="left:184.34px">1</i><i style="left:199.91px">4</i><i style="left:231.09px">0</i><i style="left:246.67px">0</i><i style="left:277.83px">0</i><i style="left:293.42px">0</i><i style="left:324.58px">2</i><i style="left:340.17px;transform:scaleX(0.900)">A</i><i style="left:371.33px">1</i><i style="left:386.92px">4</i><i style="left:418.08px">0</i><i style="left:433.67px">0</i><i style="left:464.83px">0</i><i style="left:480.42px">0</i><i style="left:511.59px">4</i><i style="left:527.16px">7</i><i style="left:558.34px">1</i><i style="left:573.91px">4</i><i style="left:605.09px">0</i><i style="left:620.66px">0</i><i style="left:651.84px">0</i><i style="left:667.41px">0</i><i style="left:698.59px">6</i><i style="left:714.16px;transform:scaleX(0.900)">B</i><i style="left:745.34px">1</i><i style="left:760.91px">4</i><i style="left:792.09px">0</i><i style="left:807.66px">0</i><i style="left:838.84px">0</i><i style="left:854.41px">0</i></div>
<div class="hr" style="top:646.14px;font-size:27px;color:#d9d9d3;"><i style="left:896.00px;font-weight:bold">.</i><i style="left:912.00px;font-weight:bold">.</i><i style="left:928.00px;font-weight:bold">.</i><i style="left:944.00px;font-weight:bold">.</i><i style="left:960.00px">*</i><i style="left:976.00px;font-weight:bold">.</i><i style="left:992.00px;font-weight:bold">.</i><i style="left:1008.00px;font-weight:bold">.</i><i style="left:1024.00px;transform:scaleX(0.746)">G</i><i style="left:1040.00px;font-weight:bold">.</i><i style="left:1056.00px;font-weight:bold">.</i><i style="left:1072.00px;font-weight:bold">.</i><i style="left:1088.00px">k</i><i style="left:1104.00px;font-weight:bold">.</i><i style="left:1120.00px;font-weight:bold">.</i><i style="left:1136.00px;font-weight:bold">.</i></div>
<div class="hr" style="top:677.42px;font-size:27.5px;color:#9c9c9c;"><i style="left:-0.20px">0</i><i style="left:15.30px">0</i><i style="left:30.80px">:</i><i style="left:46.30px">0</i><i style="left:61.80px">1</i><i style="left:77.30px">3</i><i style="left:92.80px">0</i></div>
<div class="hr" style="top:679.09px;font-size:28px;color:#d9d9d3;"><i style="left:137.59px">8</i><i style="left:153.16px">7</i><i style="left:184.34px">1</i><i style="left:199.91px">4</i><i style="left:231.09px">0</i><i style="left:246.67px">0</i><i style="left:277.83px">0</i><i style="left:293.42px">0</i><i style="left:324.58px">9</i><i style="left:340.17px;transform:scaleX(0.900)">B</i><i style="left:371.33px">1</i><i style="left:386.92px">4</i><i style="left:418.08px">0</i><i style="left:433.67px">0</i><i style="left:464.83px">0</i><i style="left:480.42px">0</i><i style="left:511.59px;transform:scaleX(0.900)">B</i><i style="left:527.16px">0</i><i style="left:558.34px">1</i><i style="left:573.91px">4</i><i style="left:605.09px">0</i><i style="left:620.66px">0</i><i style="left:651.84px">0</i><i style="left:667.41px">0</i><i style="left:698.59px;transform:scaleX(0.831)">C</i><i style="left:714.16px;transform:scaleX(0.900)">A</i><i style="left:745.34px">1</i><i style="left:760.91px">4</i><i style="left:792.09px">0</i><i style="left:807.66px">0</i><i style="left:838.84px">0</i><i style="left:854.41px">0</i></div>
<div class="hr" style="top:680.14px;font-size:27px;color:#d9d9d3;"><i style="left:896.00px">‡</i><i style="left:912.00px;font-weight:bold">.</i><i style="left:928.00px;font-weight:bold">.</i><i style="left:944.00px;font-weight:bold">.</i><i style="left:960.00px">›</i><i style="left:976.00px;font-weight:bold">.</i><i style="left:992.00px;font-weight:bold">.</i><i style="left:1008.00px;font-weight:bold">.</i><i style="left:1024.00px">°</i><i style="left:1040.00px;font-weight:bold">.</i><i style="left:1056.00px;font-weight:bold">.</i><i style="left:1072.00px;font-weight:bold">.</i><i style="left:1088.00px;transform:scaleX(0.870)">Ê</i><i style="left:1104.00px;font-weight:bold">.</i><i style="left:1120.00px;font-weight:bold">.</i><i style="left:1136.00px;font-weight:bold">.</i></div>
<div class="hr" style="top:711.42px;font-size:27.5px;color:#9c9c9c;"><i style="left:-0.20px">0</i><i style="left:15.30px">0</i><i style="left:30.80px">:</i><i style="left:46.30px">0</i><i style="left:61.80px">1</i><i style="left:77.30px">4</i><i style="left:92.80px">0</i></div>
<div class="hr" style="top:713.09px;font-size:28px;color:#d9d9d3;"><i style="left:137.59px;transform:scaleX(0.900)">E</i><i style="left:153.16px">1</i><i style="left:184.34px">1</i><i style="left:199.91px">4</i><i style="left:231.09px">0</i><i style="left:246.67px">0</i><i style="left:277.83px">0</i><i style="left:293.42px">0</i><i style="left:324.58px">0</i><i style="left:340.17px">1</i><i style="left:371.33px">1</i><i style="left:386.92px">5</i><i style="left:418.08px">0</i><i style="left:433.67px">0</i><i style="left:464.83px">0</i><i style="left:480.42px">0</i><i style="left:511.59px">2</i><i style="left:527.16px">1</i><i style="left:558.34px">1</i><i style="left:573.91px">5</i><i style="left:605.09px">0</i><i style="left:620.66px">0</i><i style="left:651.84px">0</i><i style="left:667.41px">0</i><i style="left:698.59px">3</i><i style="left:714.16px;transform:scaleX(0.831)">C</i><i style="left:745.34px">1</i><i style="left:760.91px">5</i><i style="left:792.09px">0</i><i style="left:807.66px">0</i><i style="left:838.84px">0</i><i style="left:854.41px">0</i></div>
<div class="hr" style="top:714.14px;font-size:27px;color:#d9d9d3;"><i style="left:896.00px">á</i><i style="left:912.00px;font-weight:bold">.</i><i style="left:928.00px;font-weight:bold">.</i><i style="left:944.00px;font-weight:bold">.</i><i style="left:960.00px;font-weight:bold">.</i><i style="left:976.00px;font-weight:bold">.</i><i style="left:992.00px;font-weight:bold">.</i><i style="left:1008.00px;font-weight:bold">.</i><i style="left:1024.00px">!</i><i style="left:1040.00px;font-weight:bold">.</i><i style="left:1056.00px;font-weight:bold">.</i><i style="left:1072.00px;font-weight:bold">.</i><i style="left:1088.00px;transform:scaleX(0.993)">&lt;</i><i style="left:1104.00px;font-weight:bold">.</i><i style="left:1120.00px;font-weight:bold">.</i><i style="left:1136.00px;font-weight:bold">.</i></div>
<div class="hr" style="top:745.42px;font-size:27.5px;color:#9c9c9c;"><i style="left:-0.20px">0</i><i style="left:15.30px">0</i><i style="left:30.80px">:</i><i style="left:46.30px">0</i><i style="left:61.80px">1</i><i style="left:77.30px">5</i><i style="left:92.80px">0</i></div>
<div class="hr" style="top:747.09px;font-size:28px;color:#d9d9d3;"><i style="left:137.59px">5</i><i style="left:153.16px">0</i><i style="left:184.34px">1</i><i style="left:199.91px">5</i><i style="left:231.09px">0</i><i style="left:246.67px">0</i><i style="left:277.83px">0</i><i style="left:293.42px">0</i><i style="left:324.58px">6</i><i style="left:340.17px">4</i><i style="left:371.33px">1</i><i style="left:386.92px">5</i><i style="left:418.08px">0</i><i style="left:433.67px">0</i><i style="left:464.83px">0</i><i style="left:480.42px">0</i><i style="left:511.59px">7</i><i style="left:527.16px">8</i><i style="left:558.34px">1</i><i style="left:573.91px">5</i><i style="left:605.09px">0</i><i style="left:620.66px">0</i><i style="left:651.84px">0</i><i style="left:667.41px">0</i><i style="left:698.59px">8</i><i style="left:714.16px;transform:scaleX(0.831)">C</i><i style="left:745.34px">1</i><i style="left:760.91px">5</i><i style="left:792.09px">0</i><i style="left:807.66px">0</i><i style="left:838.84px">0</i><i style="left:854.41px">0</i></div>
<div class="hr" style="top:748.14px;font-size:27px;color:#d9d9d3;"><i style="left:896.00px;transform:scaleX(0.870)">P</i><i style="left:912.00px;font-weight:bold">.</i><i style="left:928.00px;font-weight:bold">.</i><i style="left:944.00px;font-weight:bold">.</i><i style="left:960.00px">d</i><i style="left:976.00px;font-weight:bold">.</i><i style="left:992.00px;font-weight:bold">.</i><i style="left:1008.00px;font-weight:bold">.</i><i style="left:1024.00px">x</i><i style="left:1040.00px;font-weight:bold">.</i><i style="left:1056.00px;font-weight:bold">.</i><i style="left:1072.00px;font-weight:bold">.</i><i style="left:1088.00px;transform:scaleX(0.580)">Œ</i><i style="left:1104.00px;font-weight:bold">.</i><i style="left:1120.00px;font-weight:bold">.</i><i style="left:1136.00px;font-weight:bold">.</i></div>
<div class="r" style="left:900px;top:62px;width:14px;height:4px;background:#ffffff;"></div>
</div>
<svg style="left:2332px;top:118px" width="64" height="764" viewBox="0 0 16 191" preserveAspectRatio="none" shape-rendering="crispEdges"><path fill="#316f7f" d="M0 0h1v1h-1zM1 0h1v1h-1z"/><path fill="#347687" d="M2 0h1v1h-1zM8 2h1v1h-1z"/><path fill="#23505b" d="M3 0h1v1h-1zM5 5h1v1h-1z"/><path fill="#295d6a" d="M4 0h1v1h-1zM2 2h1v1h-1zM12 4h1v1h-1z"/><path fill="#295e6b" d="M5 0h1v1h-1z"/><path fill="#2a5f6c" d="M6 0h1v1h-1z"/><path fill="#214d57" d="M7 0h1v1h-1zM9 0h1v1h-1zM3 2h1v1h-1zM5 2h1v1h-1zM6 2h1v1h-1zM7 2h1v1h-1zM12 2h1v1h-1zM13 2h1v1h-1zM14 2h1v1h-1zM15 2h1v1h-1zM0 3h1v1h-1zM1 3h1v1h-1zM2 3h1v1h-1zM3 3h1v1h-1zM6 3h1v1h-1zM7 3h1v1h-1zM9 3h1v1h-1zM10 3h1v1h-1zM11 3h1v1h-1zM13 3h1v1h-1zM14 3h1v1h-1zM15 3h1v1h-1zM1 4h1v1h-1zM2 4h1v1h-1zM3 4h1v1h-1zM6 4h1v1h-1zM7 4h1v1h-1zM9 4h1v1h-1zM10 4h1v1h-1zM11 4h1v1h-1zM14 4h1v1h-1zM15 4h1v1h-1zM1 5h1v1h-1zM2 5h1v1h-1zM3 5h1v1h-1zM6 5h1v1h-1zM7 5h1v1h-1zM9 5h1v1h-1zM10 5h1v1h-1zM11 5h1v1h-1zM14 5h1v1h-1zM15 5h1v1h-1zM1 6h1v1h-1zM2 6h1v1h-1zM3 6h1v1h-1zM6 6h1v1h-1zM7 6h1v1h-1zM8 6h1v1h-1zM10 6h1v1h-1zM11 6h1v1h-1zM14 6h1v1h-1zM15 6h1v1h-1z"/><path fill="#23525d" d="M8 0h1v1h-1z"/><path fill="#255661" d="M10 0h1v1h-1z"/><path fill="#387e90" d="M11 0h1v1h-1z"/><path fill="#788fbf" d="M12 0h1v1h-1z"/><path fill="#5f729a" d="M13 0h1v1h-1z"/><path fill="#748bba" d="M14 0h1v1h-1z"/><path fill="#475575" d="M15 0h1v1h-1z"/><path fill="#506083" d="M0 1h1v1h-1z"/><path fill="#4a5979" d="M1 1h1v1h-1z"/><path fill="#748bb9" d="M2 1h1v1h-1z"/><path fill="#768ebd" d="M3 1h1v1h-1z"/><path fill="#5d7097" d="M4 1h1v1h-1z"/><path fill="#495777" d="M5 1h1v1h-1z"/><path fill="#6b80ab" d="M6 1h1v1h-1z"/><path fill="#6c82ae" d="M7 1h1v1h-1z"/><path fill="#414d6b" d="M8 1h1v1h-1z"/><path fill="#424e6c" d="M9 1h1v1h-1z"/><path fill="#465473" d="M10 1h1v1h-1z"/><path fill="#4e5d7f" d="M11 1h1v1h-1z"/><path fill="#4b5a7b" d="M12 1h1v1h-1z"/><path fill="#596b90" d="M13 1h1v1h-1z"/><path fill="#778ebe" d="M14 1h1v1h-1z"/><path fill="#60739b" d="M15 1h1v1h-1z"/><path fill="#3d889b" d="M0 2h1v1h-1z"/><path fill="#2e6877" d="M1 2h1v1h-1z"/><path fill="#337383" d="M4 2h1v1h-1zM12 3h1v1h-1z"/><path fill="#2f6a79" d="M9 2h1v1h-1z"/><path fill="#295f6c" d="M10 2h1v1h-1z"/><path fill="#24535e" d="M11 2h1v1h-1zM13 6h1v1h-1z"/><path fill="#224e59" d="M4 3h1v1h-1z"/><path fill="#2a616e" d="M5 3h1v1h-1z"/><path fill="#285c68" d="M8 3h1v1h-1z"/><path fill="#2c6572" d="M0 4h1v1h-1z"/><path fill="#265762" d="M4 4h1v1h-1z"/><path fill="#224f59" d="M5 4h1v1h-1zM13 4h1v1h-1z"/><path fill="#306c7b" d="M8 4h1v1h-1z"/><path fill="#255560" d="M0 5h1v1h-1z"/><path fill="#36798a" d="M4 5h1v1h-1z"/><path fill="#3e8b9f" d="M8 5h1v1h-1z"/><path fill="#2a606d" d="M12 5h1v1h-1z"/><path fill="#23515b" d="M13 5h1v1h-1z"/><path fill="#224f5a" d="M0 6h1v1h-1z"/><path fill="#469cb3" d="M4 6h1v1h-1z"/><path fill="#24525d" d="M5 6h1v1h-1z"/><path fill="#285b68" d="M9 6h1v1h-1z"/><path fill="#4191a6" d="M12 6h1v1h-1z"/><path fill="#a19f43" d="M0 7h1v1h-1zM4 7h1v1h-1zM0 14h1v1h-1zM12 19h1v1h-1zM0 64h1v1h-1zM0 70h1v1h-1z"/><path fill="#67652c" d="M1 7h1v1h-1zM5 7h1v1h-1zM9 7h1v1h-1zM13 7h1v1h-1zM1 8h1v1h-1zM5 8h1v1h-1zM9 8h1v1h-1zM13 8h1v1h-1zM12 80h1v1h-1z"/><path fill="#62602a" d="M2 7h1v1h-1zM3 7h1v1h-1zM6 7h1v1h-1zM7 7h1v1h-1zM10 7h1v1h-1zM11 7h1v1h-1zM14 7h1v1h-1zM15 7h1v1h-1zM2 8h1v1h-1zM3 8h1v1h-1zM6 8h1v1h-1zM7 8h1v1h-1zM10 8h1v1h-1zM11 8h1v1h-1zM14 8h1v1h-1zM15 8h1v1h-1zM2 9h1v1h-1zM3 9h1v1h-1zM6 9h1v1h-1zM7 9h1v1h-1zM10 9h1v1h-1zM11 9h1v1h-1zM14 9h1v1h-1zM15 9h1v1h-1zM2 10h1v1h-1zM3 10h1v1h-1zM6 10h1v1h-1zM7 10h1v1h-1zM10 10h1v1h-1zM11 10h1v1h-1zM14 10h1v1h-1zM15 10h1v1h-1zM2 11h1v1h-1zM3 11h1v1h-1zM6 11h1v1h-1zM7 11h1v1h-1zM10 11h1v1h-1zM11 11h1v1h-1zM14 11h1v1h-1zM15 11h1v1h-1zM2 12h1v1h-1zM3 12h1v1h-1zM6 12h1v1h-1zM7 12h1v1h-1zM10 12h1v1h-1zM11 12h1v1h-1zM14 12h1v1h-1zM15 12h1v1h-1zM2 13h1v1h-1zM3 13h1v1h-1zM6 13h1v1h-1zM7 13h1v1h-1zM10 13h1v1h-1zM11 13h1v1h-1zM14 13h1v1h-1zM15 13h1v1h-1zM2 14h1v1h-1zM3 14h1v1h-1zM6 14h1v1h-1zM7 14h1v1h-1zM10 14h1v1h-1zM11 14h1v1h-1zM14 14h1v1h-1zM15 14h1v1h-1zM2 15h1v1h-1zM3 15h1v1h-1zM6 15h1v1h-1zM7 15h1v1h-1zM10 15h1v1h-1zM11 15h1v1h-1zM14 15h1v1h-1zM15 15h1v1h-1zM2 16h1v1h-1zM3 16h1v1h-1zM6 16h1v1h-1zM7 16h1v1h-1zM10 16h1v1h-1zM11 16h1v1h-1zM14 16h1v1h-1zM15 16h1v1h-1zM2 17h1v1h-1zM3 17h1v1h-1zM6 17h1v1h-1zM7 17h1v1h-1zM10 17h1v1h-1zM11 17h1v1h-1zM14 17h1v1h-1zM15 17h1v1h-1zM2 18h1v1h-1zM3 18h1v1h-1zM6 18h1v1h-1zM7 18h1v1h-1zM10 18h1v1h-1zM11 18h1v1h-1zM14 18h1v1h-1zM15 18h1v1h-1zM2 19h1v1h-1zM3 19h1v1h-1zM6 19h1v1h-1zM7 19h1v1h-1zM10 19h1v1h-1zM11 19h1v1h-1zM14 19h1v1h-1zM15 19h1v1h-1zM2 20h1v1h-1zM3 20h1v1h-1zM4 20h1v1h-1zM6 20h1v1h-1zM7 20h1v1h-1zM10 20h1v1h-1zM11 20h1v1h-1zM14 20h1v1h-1zM15 20h1v1h-1zM2 21h1v1h-1zM3 21h1v1h-1zM6 21h1v1h-1zM7 21h1v1h-1zM10 21h1v1h-1zM11 21h1v1h-1zM14 21h1v1h-1zM15 21h1v1h-1zM2 22h1v1h-1zM3 22h1v1h-1zM6 22h1v1h-1zM7 22h1v1h-1zM10 22h1v1h-1zM11 22h1v1h-1zM14 22h1v1h-1zM15 22h1v1h-1zM2 23h1v1h-1zM3 23h1v1h-1zM6 23h1v1h-1zM7 23h1v1h-1zM10 23h1v1h-1zM11 23h1v1h-1zM14 23h1v1h-1zM15 23h1v1h-1zM2 24h1v1h-1zM3 24h1v1h-1zM6 24h1v1h-1zM7 24h1v1h-1zM10 24h1v1h-1zM11 24h1v1h-1zM14 24h1v1h-1zM15 24h1v1h-1zM2 25h1v1h-1zM3 25h1v1h-1zM6 25h1v1h-1zM7 25h1v1h-1zM10 25h1v1h-1zM11 25h1v1h-1zM14 25h1v1h-1zM15 25h1v1h-1zM2 26h1v1h-1zM3 26h1v1h-1zM6 26h1v1h-1zM7 26h1v1h-1zM10 26h1v1h-1zM11 26h1v1h-1zM14 26h1v1h-1zM15 26h1v1h-1zM2 27h1v1h-1zM3 27h1v1h-1zM6 27h1v1h-1zM7 27h1v1h-1zM10 27h1v1h-1zM11 27h1v1h-1zM14 27h1v1h-1zM15 27h1v1h-1zM2 28h1v1h-1zM3 28h1v1h-1zM6 28h1v1h-1zM7 28h1v1h-1zM10 28h1v1h-1zM11 28h1v1h-1zM14 28h1v1h-1zM15 28h1v1h-1zM2 29h1v1h-1zM3 29h1v1h-1zM6 29h1v1h-1zM7 29h1v1h-1zM10 29h1v1h-1zM11 29h1v1h-1zM14 29h1v1h-1zM15 29h1v1h-1zM2 30h1v1h-1zM3 30h1v1h-1zM6 30h1v1h-1zM7 30h1v1h-1zM10 30h1v1h-1zM11 30h1v1h-1zM14 30h1v1h-1zM15 30h1v1h-1zM0 31h1v1h-1zM2 31h1v1h-1zM3 31h1v1h-1zM6 31h1v1h-1zM7 31h1v1h-1zM10 31h1v1h-1zM11 31h1v1h-1zM14 31h1v1h-1zM15 31h1v1h-1zM2 32h1v1h-1zM3 32h1v1h-1zM6 32h1v1h-1zM7 32h1v1h-1zM10 32h1v1h-1zM11 32h1v1h-1zM14 32h1v1h-1zM15 32h1v1h-1zM2 33h1v1h-1zM3 33h1v1h-1zM6 33h1v1h-1zM7 33h1v1h-1zM10 33h1v1h-1zM11 33h1v1h-1zM14 33h1v1h-1zM15 33h1v1h-1zM2 34h1v1h-1zM3 34h1v1h-1zM6 34h1v1h-1zM7 34h1v1h-1zM10 34h1v1h-1zM11 34h1v1h-1zM14 34h1v1h-1zM15 34h1v1h-1zM2 35h1v1h-1zM3 35h1v1h-1zM6 35h1v1h-1zM7 35h1v1h-1zM10 35h1v1h-1zM11 35h1v1h-1zM14 35h1v1h-1zM15 35h1v1h-1zM2 36h1v1h-1zM3 36h1v1h-1zM6 36h1v1h-1zM7 36h1v1h-1zM10 36h1v1h-1zM11 36h1v1h-1zM14 36h1v1h-1zM15 36h1v1h-1zM2 37h1v1h-1zM3 37h1v1h-1zM6 37h1v1h-1zM7 37h1v1h-1zM10 37h1v1h-1zM11 37h1v1h-1zM14 37h1v1h-1zM15 37h1v1h-1zM2 38h1v1h-1zM3 38h1v1h-1zM6 38h1v1h-1zM7 38h1v1h-1zM10 38h1v1h-1zM11 38h1v1h-1zM14 38h1v1h-1zM15 38h1v1h-1zM2 39h1v1h-1zM3 39h1v1h-1zM6 39h1v1h-1zM7 39h1v1h-1zM10 39h1v1h-1zM11 39h1v1h-1zM14 39h1v1h-1zM15 39h1v1h-1zM2 40h1v1h-1zM3 40h1v1h-1zM6 40h1v1h-1zM7 40h1v1h-1zM10 40h1v1h-1zM11 40h1v1h-1zM14 40h1v1h-1zM15 40h1v1h-1zM2 41h1v1h-1zM3 41h1v1h-1zM6 41h1v1h-1zM7 41h1v1h-1zM10 41h1v1h-1zM11 41h1v1h-1zM14 41h1v1h-1zM15 41h1v1h-1zM2 42h1v1h-1zM3 42h1v1h-1zM6 42h1v1h-1zM7 42h1v1h-1zM10 42h1v1h-1zM11 42h1v1h-1zM14 42h1v1h-1zM15 42h1v1h-1zM2 43h1v1h-1zM3 43h1v1h-1zM6 43h1v1h-1zM7 43h1v1h-1zM10 43h1v1h-1zM11 43h1v1h-1zM14 43h1v1h-1zM15 43h1v1h-1zM2 44h1v1h-1zM3 44h1v1h-1zM6 44h1v1h-1zM7 44h1v1h-1zM10 44h1v1h-1zM11 44h1v1h-1zM14 44h1v1h-1zM15 44h1v1h-1zM2 45h1v1h-1zM3 45h1v1h-1zM6 45h1v1h-1zM7 45h1v1h-1zM10 45h1v1h-1zM11 45h1v1h-1zM14 45h1v1h-1zM15 45h1v1h-1zM2 46h1v1h-1zM3 46h1v1h-1zM6 46h1v1h-1zM7 46h1v1h-1zM10 46h1v1h-1zM11 46h1v1h-1zM14 46h1v1h-1zM15 46h1v1h-1zM2 47h1v1h-1zM3 47h1v1h-1zM6 47h1v1h-1zM7 47h1v1h-1zM10 47h1v1h-1zM11 47h1v1h-1zM14 47h1v1h-1zM15 47h1v1h-1zM2 48h1v1h-1zM3 48h1v1h-1zM6 48h1v1h-1zM7 48h1v1h-1zM10 48h1v1h-1zM11 48h1v1h-1zM14 48h1v1h-1zM15 48h1v1h-1zM2 49h1v1h-1zM3 49h1v1h-1zM6 49h1v1h-1zM7 49h1v1h-1zM10 49h1v1h-1zM11 49h1v1h-1zM14 49h1v1h-1zM15 49h1v1h-1zM2 50h1v1h-1zM3 50h1v1h-1zM6 50h1v1h-1zM7 50h1v1h-1zM10 50h1v1h-1zM11 50h1v1h-1zM14 50h1v1h-1zM15 50h1v1h-1zM2 51h1v1h-1zM3 51h1v1h-1zM6 51h1v1h-1zM7 51h1v1h-1zM10 51h1v1h-1zM11 51h1v1h-1zM14 51h1v1h-1zM15 51h1v1h-1zM2 52h1v1h-1zM3 52h1v1h-1zM6 52h1v1h-1zM7 52h1v1h-1zM10 52h1v1h-1zM11 52h1v1h-1zM14 52h1v1h-1zM15 52h1v1h-1zM2 53h1v1h-1zM3 53h1v1h-1zM6 53h1v1h-1zM7 53h1v1h-1zM10 53h1v1h-1zM11 53h1v1h-1zM14 53h1v1h-1zM15 53h1v1h-1zM2 54h1v1h-1zM3 54h1v1h-1zM6 54h1v1h-1zM7 54h1v1h-1zM10 54h1v1h-1zM11 54h1v1h-1zM14 54h1v1h-1zM15 54h1v1h-1zM2 55h1v1h-1zM3 55h1v1h-1zM6 55h1v1h-1zM7 55h1v1h-1zM10 55h1v1h-1zM11 55h1v1h-1zM14 55h1v1h-1zM15 55h1v1h-1zM2 56h1v1h-1zM3 56h1v1h-1zM6 56h1v1h-1zM7 56h1v1h-1zM10 56h1v1h-1zM11 56h1v1h-1zM14 56h1v1h-1zM15 56h1v1h-1zM2 57h1v1h-1zM3 57h1v1h-1zM6 57h1v1h-1zM7 57h1v1h-1zM10 57h1v1h-1zM11 57h1v1h-1zM14 57h1v1h-1zM15 57h1v1h-1zM2 58h1v1h-1zM3 58h1v1h-1zM6 58h1v1h-1zM7 58h1v1h-1zM10 58h1v1h-1zM11 58h1v1h-1zM14 58h1v1h-1zM15 58h1v1h-1zM2 59h1v1h-1zM3 59h1v1h-1zM6 59h1v1h-1zM7 59h1v1h-1zM10 59h1v1h-1zM11 59h1v1h-1zM14 59h1v1h-1zM15 59h1v1h-1zM2 60h1v1h-1zM3 60h1v1h-1zM6 60h1v1h-1zM7 60h1v1h-1zM10 60h1v1h-1zM11 60h1v1h-1zM14 60h1v1h-1zM15 60h1v1h-1zM2 61h1v1h-1zM3 61h1v1h-1zM6 61h1v1h-1zM7 61h1v1h-1zM10 61h1v1h-1zM11 61h1v1h-1zM14 61h1v1h-1zM15 61h1v1h-1zM2 62h1v1h-1zM3 62h1v1h-1zM6 62h1v1h-1zM7 62h1v1h-1zM10 62h1v1h-1zM11 62h1v1h-1zM14 62h1v1h-1zM15 62h1v1h-1zM2 63h1v1h-1zM3 63h1v1h-1zM6 63h1v1h-1zM7 63h1v1h-1zM10 63h1v1h-1zM11 63h1v1h-1zM14 63h1v1h-1zM15 63h1v1h-1zM2 64h1v1h-1zM3 64h1v1h-1zM6 64h1v1h-1zM7 64h1v1h-1zM10 64h1v1h-1zM11 64h1v1h-1zM14 64h1v1h-1zM15 64h1v1h-1zM2 65h1v1h-1zM3 65h1v1h-1zM6 65h1v1h-1zM7 65h1v1h-1zM10 65h1v1h-1zM11 65h1v1h-1zM14 65h1v1h-1zM15 65h1v1h-1zM2 66h1v1h-1zM3 66h1v1h-1zM6 66h1v1h-1zM7 66h1v1h-1zM10 66h1v1h-1zM11 66h1v1h-1zM14 66h1v1h-1zM15 66h1v1h-1zM2 67h1v1h-1zM3 67h1v1h-1zM6 67h1v1h-1zM7 67h1v1h-1zM10 67h1v1h-1zM11 67h1v1h-1zM14 67h1v1h-1zM15 67h1v1h-1zM2 68h1v1h-1zM3 68h1v1h-1zM6 68h1v1h-1zM7 68h1v1h-1zM10 68h1v1h-1zM11 68h1v1h-1zM14 68h1v1h-1zM15 68h1v1h-1zM2 69h1v1h-1zM3 69h1v1h-1zM6 69h1v1h-1zM7 69h1v1h-1zM10 69h1v1h-1zM11 69h1v1h-1zM14 69h1v1h-1zM15 69h1v1h-1zM2 70h1v1h-1zM3 70h1v1h-1zM6 70h1v1h-1zM7 70h1v1h-1zM10 70h1v1h-1zM11 70h1v1h-1zM14 70h1v1h-1zM15 70h1v1h-1zM2 71h1v1h-1zM3 71h1v1h-1zM6 71h1v1h-1zM7 71h1v1h-1zM10 71h1v1h-1zM11 71h1v1h-1zM14 71h1v1h-1zM15 71h1v1h-1zM2 72h1v1h-1zM3 72h1v1h-1zM6 72h1v1h-1zM7 72h1v1h-1zM10 72h1v1h-1zM11 72h1v1h-1zM14 72h1v1h-1zM15 72h1v1h-1zM2 73h1v1h-1zM3 73h1v1h-1zM6 73h1v1h-1zM7 73h1v1h-1zM10 73h1v1h-1zM11 73h1v1h-1zM14 73h1v1h-1zM15 73h1v1h-1zM2 74h1v1h-1zM3 74h1v1h-1zM6 74h1v1h-1zM7 74h1v1h-1zM10 74h1v1h-1zM11 74h1v1h-1zM14 74h1v1h-1zM15 74h1v1h-1zM2 75h1v1h-1zM3 75h1v1h-1zM6 75h1v1h-1zM7 75h1v1h-1zM10 75h1v1h-1zM11 75h1v1h-1zM14 75h1v1h-1zM15 75h1v1h-1zM2 76h1v1h-1zM3 76h1v1h-1zM6 76h1v1h-1zM7 76h1v1h-1zM10 76h1v1h-1zM11 76h1v1h-1zM14 76h1v1h-1zM15 76h1v1h-1zM2 77h1v1h-1zM3 77h1v1h-1zM6 77h1v1h-1zM7 77h1v1h-1zM10 77h1v1h-1zM11 77h1v1h-1zM14 77h1v1h-1zM15 77h1v1h-1zM2 78h1v1h-1zM3 78h1v1h-1zM6 78h1v1h-1zM7 78h1v1h-1zM10 78h1v1h-1zM11 78h1v1h-1zM14 78h1v1h-1zM15 78h1v1h-1zM2 79h1v1h-1zM3 79h1v1h-1zM6 79h1v1h-1zM7 79h1v1h-1zM10 79h1v1h-1zM11 79h1v1h-1zM14 79h1v1h-1zM15 79h1v1h-1zM2 80h1v1h-1zM3 80h1v1h-1zM6 80h1v1h-1zM7 80h1v1h-1zM10 80h1v1h-1zM11 80h1v1h-1zM14 80h1v1h-1zM15 80h1v1h-1zM2 81h1v1h-1zM3 81h1v1h-1zM6 81h1v1h-1zM7 81h1v1h-1zM10 81h1v1h-1zM11 81h1v1h-1z"/><path fill="#a2a044" d="M8 7h1v1h-1zM4 14h1v1h-1zM8 79h1v1h-1z"/><path fill="#a3a144" d="M12 7h1v1h-1zM8 14h1v1h-1zM12 26h1v1h-1zM0 36h1v1h-1zM0 45h1v1h-1zM0 60h1v1h-1zM4 64h1v1h-1z"/><path fill="#a5a345" d="M0 8h1v1h-1zM12 14h1v1h-1zM8 40h1v1h-1zM12 49h1v1h-1zM12 79h1v1h-1z"/><path fill="#a6a445" d="M4 8h1v1h-1zM8 64h1v1h-1zM4 75h1v1h-1z"/><path fill="#a9a746" d="M8 8h1v1h-1zM4 15h1v1h-1zM0 20h1v1h-1zM12 23h1v1h-1zM0 50h1v1h-1zM8 70h1v1h-1z"/><path fill="#aeac48" d="M12 8h1v1h-1zM8 50h1v1h-1zM12 75h1v1h-1zM4 80h1v1h-1z"/><path fill="#64622b" d="M0 9h1v1h-1zM0 37h1v1h-1zM12 50h1v1h-1zM8 55h1v1h-1zM0 76h1v1h-1z"/><path fill="#68662c" d="M1 9h1v1h-1zM5 9h1v1h-1zM9 9h1v1h-1zM12 9h1v1h-1zM13 9h1v1h-1zM1 10h1v1h-1zM5 10h1v1h-1zM9 10h1v1h-1zM13 10h1v1h-1zM1 11h1v1h-1zM5 11h1v1h-1zM9 11h1v1h-1zM13 11h1v1h-1zM1 12h1v1h-1zM5 12h1v1h-1zM9 12h1v1h-1zM13 12h1v1h-1zM1 13h1v1h-1zM5 13h1v1h-1zM9 13h1v1h-1zM13 13h1v1h-1zM1 14h1v1h-1zM5 14h1v1h-1zM9 14h1v1h-1zM13 14h1v1h-1zM1 15h1v1h-1zM5 15h1v1h-1zM9 15h1v1h-1zM13 15h1v1h-1zM1 16h1v1h-1zM4 16h1v1h-1zM5 16h1v1h-1zM9 16h1v1h-1zM13 16h1v1h-1zM1 17h1v1h-1zM5 17h1v1h-1zM9 17h1v1h-1zM13 17h1v1h-1zM0 24h1v1h-1zM4 76h1v1h-1z"/><path fill="#65632b" d="M4 9h1v1h-1zM0 18h1v1h-1zM0 27h1v1h-1zM12 33h1v1h-1zM4 41h1v1h-1zM0 51h1v1h-1zM12 60h1v1h-1zM12 65h1v1h-1z"/><path fill="#66642c" d="M8 9h1v1h-1zM8 22h1v1h-1zM4 71h1v1h-1z"/><path fill="#6b692e" d="M0 10h1v1h-1zM1 31h1v1h-1zM5 31h1v1h-1zM9 31h1v1h-1zM13 31h1v1h-1zM1 32h1v1h-1zM5 32h1v1h-1zM9 32h1v1h-1zM13 32h1v1h-1zM1 33h1v1h-1zM5 33h1v1h-1zM9 33h1v1h-1zM13 33h1v1h-1zM1 34h1v1h-1zM5 34h1v1h-1zM9 34h1v1h-1zM13 34h1v1h-1zM1 35h1v1h-1zM5 35h1v1h-1zM9 35h1v1h-1zM13 35h1v1h-1zM1 36h1v1h-1zM5 36h1v1h-1zM9 36h1v1h-1zM13 36h1v1h-1zM12 41h1v1h-1zM4 66h1v1h-1z"/><path fill="#6d6b2f" d="M4 10h1v1h-1zM8 37h1v1h-1zM0 56h1v1h-1zM13 60h1v1h-1zM1 61h1v1h-1zM5 61h1v1h-1zM9 61h1v1h-1zM13 61h1v1h-1zM1 62h1v1h-1zM5 62h1v1h-1zM9 62h1v1h-1zM13 62h1v1h-1zM1 63h1v1h-1zM5 63h1v1h-1zM9 63h1v1h-1zM13 63h1v1h-1zM1 64h1v1h-1zM5 64h1v1h-1zM9 64h1v1h-1zM13 64h1v1h-1zM1 65h1v1h-1zM5 65h1v1h-1z"/><path fill="#6f6d2f" d="M8 10h1v1h-1zM4 18h1v1h-1zM0 34h1v1h-1zM12 51h1v1h-1zM12 66h1v1h-1zM13 80h1v1h-1zM1 81h1v1h-1zM5 81h1v1h-1zM9 81h1v1h-1z"/><path fill="#777532" d="M12 10h1v1h-1z"/><path fill="#7a7834" d="M0 11h1v1h-1zM8 31h1v1h-1zM0 38h1v1h-1zM4 57h1v1h-1z"/><path fill="#7d7b35" d="M4 11h1v1h-1zM8 52h1v1h-1zM12 72h1v1h-1z"/><path fill="#7e7c35" d="M8 11h1v1h-1zM8 27h1v1h-1zM8 47h1v1h-1zM8 57h1v1h-1z"/><path fill="#858338" d="M12 11h1v1h-1zM0 53h1v1h-1zM8 62h1v1h-1zM4 73h1v1h-1z"/><path fill="#888639" d="M0 12h1v1h-1zM8 21h1v1h-1zM12 38h1v1h-1zM8 43h1v1h-1z"/><path fill="#93913e" d="M4 12h1v1h-1zM4 35h1v1h-1z"/><path fill="#94923e" d="M8 12h1v1h-1zM0 29h1v1h-1zM12 39h1v1h-1zM12 48h1v1h-1zM4 63h1v1h-1zM4 69h1v1h-1zM0 74h1v1h-1z"/><path fill="#97953f" d="M12 12h1v1h-1zM8 30h1v1h-1zM8 69h1v1h-1zM12 78h1v1h-1z"/><path fill="#989640" d="M0 13h1v1h-1z"/><path fill="#999740" d="M4 13h1v1h-1zM8 19h1v1h-1zM8 26h1v1h-1zM0 49h1v1h-1zM0 54h1v1h-1zM8 74h1v1h-1z"/><path fill="#9c9a41" d="M8 13h1v1h-1zM8 17h1v1h-1zM0 22h1v1h-1zM4 29h1v1h-1zM12 35h1v1h-1zM4 54h1v1h-1zM12 63h1v1h-1zM12 69h1v1h-1z"/><path fill="#a09e43" d="M12 13h1v1h-1zM12 30h1v1h-1z"/><path fill="#a7a545" d="M0 15h1v1h-1zM4 22h1v1h-1zM4 70h1v1h-1z"/><path fill="#aaa847" d="M8 15h1v1h-1zM12 17h1v1h-1zM4 25h1v1h-1zM8 33h1v1h-1zM4 60h1v1h-1zM0 80h1v1h-1z"/><path fill="#acaa48" d="M12 15h1v1h-1zM8 45h1v1h-1zM4 50h1v1h-1z"/><path fill="#adab48" d="M0 16h1v1h-1zM12 36h1v1h-1zM8 75h1v1h-1z"/><path fill="#706e30" d="M8 16h1v1h-1zM8 46h1v1h-1z"/><path fill="#797733" d="M12 16h1v1h-1zM8 42h1v1h-1zM4 77h1v1h-1z"/><path fill="#817f37" d="M0 17h1v1h-1zM4 21h1v1h-1zM12 57h1v1h-1zM0 73h1v1h-1z"/><path fill="#918f3d" d="M4 17h1v1h-1zM12 27h1v1h-1zM0 35h1v1h-1zM4 44h1v1h-1zM0 69h1v1h-1zM8 78h1v1h-1z"/><path fill="#68662d" d="M1 18h1v1h-1zM5 18h1v1h-1zM9 18h1v1h-1zM13 18h1v1h-1zM1 19h1v1h-1zM5 19h1v1h-1zM9 19h1v1h-1zM13 19h1v1h-1zM1 20h1v1h-1zM12 55h1v1h-1z"/><path fill="#787633" d="M8 18h1v1h-1zM4 52h1v1h-1zM0 57h1v1h-1zM4 67h1v1h-1zM4 72h1v1h-1z"/><path fill="#848237" d="M12 18h1v1h-1zM0 23h1v1h-1zM0 26h1v1h-1zM0 78h1v1h-1z"/><path fill="#8c8a3b" d="M0 19h1v1h-1zM12 34h1v1h-1zM0 39h1v1h-1zM12 68h1v1h-1z"/><path fill="#93913d" d="M4 19h1v1h-1z"/><path fill="#69672d" d="M5 20h1v1h-1zM9 20h1v1h-1zM13 20h1v1h-1zM1 21h1v1h-1zM5 21h1v1h-1zM9 21h1v1h-1zM13 21h1v1h-1zM1 22h1v1h-1zM5 22h1v1h-1zM9 22h1v1h-1zM13 22h1v1h-1zM1 23h1v1h-1zM5 23h1v1h-1zM9 23h1v1h-1zM13 23h1v1h-1zM1 24h1v1h-1zM5 24h1v1h-1zM9 24h1v1h-1zM13 24h1v1h-1zM1 25h1v1h-1zM5 25h1v1h-1zM4 37h1v1h-1zM8 41h1v1h-1zM0 46h1v1h-1zM4 51h1v1h-1z"/><path fill="#6c6a2e" d="M8 20h1v1h-1zM8 28h1v1h-1zM1 37h1v1h-1zM5 37h1v1h-1zM9 37h1v1h-1zM13 37h1v1h-1zM1 38h1v1h-1zM5 38h1v1h-1zM9 38h1v1h-1zM13 38h1v1h-1zM1 39h1v1h-1zM5 39h1v1h-1zM9 39h1v1h-1zM13 39h1v1h-1zM1 40h1v1h-1zM5 40h1v1h-1zM9 40h1v1h-1zM13 40h1v1h-1zM1 41h1v1h-1zM5 41h1v1h-1zM9 41h1v1h-1zM13 41h1v1h-1zM1 42h1v1h-1zM5 42h1v1h-1zM9 42h1v1h-1zM13 42h1v1h-1zM1 43h1v1h-1zM5 43h1v1h-1zM9 43h1v1h-1zM13 43h1v1h-1zM1 44h1v1h-1zM5 44h1v1h-1zM9 44h1v1h-1zM13 44h1v1h-1zM1 45h1v1h-1zM5 45h1v1h-1zM9 45h1v1h-1zM13 45h1v1h-1zM1 46h1v1h-1zM5 46h1v1h-1zM9 46h1v1h-1zM13 46h1v1h-1zM1 47h1v1h-1zM5 47h1v1h-1zM9 47h1v1h-1zM13 47h1v1h-1zM1 48h1v1h-1zM5 48h1v1h-1zM9 48h1v1h-1zM13 48h1v1h-1zM1 49h1v1h-1zM5 49h1v1h-1zM9 49h1v1h-1zM13 49h1v1h-1zM1 50h1v1h-1zM5 50h1v1h-1zM9 50h1v1h-1zM4 61h1v1h-1zM8 71h1v1h-1z"/><path fill="#757332" d="M12 20h1v1h-1zM4 27h1v1h-1zM12 56h1v1h-1z"/><path fill="#7b7934" d="M0 21h1v1h-1zM12 22h1v1h-1zM4 24h1v1h-1zM12 42h1v1h-1zM8 72h1v1h-1zM8 77h1v1h-1z"/><path fill="#8e8c3c" d="M12 21h1v1h-1zM12 73h1v1h-1z"/><path fill="#8d8b3b" d="M4 23h1v1h-1zM4 26h1v1h-1zM8 53h1v1h-1z"/><path fill="#9f9d42" d="M8 23h1v1h-1zM4 40h1v1h-1zM12 44h1v1h-1zM8 49h1v1h-1zM8 54h1v1h-1zM12 74h1v1h-1zM4 79h1v1h-1z"/><path fill="#848238" d="M8 24h1v1h-1zM8 38h1v1h-1z"/><path fill="#96943f" d="M12 24h1v1h-1zM0 59h1v1h-1zM8 63h1v1h-1z"/><path fill="#a2a043" d="M0 25h1v1h-1z"/><path fill="#63612b" d="M8 25h1v1h-1zM8 65h1v1h-1z"/><path fill="#6a682d" d="M9 25h1v1h-1zM13 25h1v1h-1zM1 26h1v1h-1zM5 26h1v1h-1zM9 26h1v1h-1zM13 26h1v1h-1zM1 27h1v1h-1zM5 27h1v1h-1zM9 27h1v1h-1zM13 27h1v1h-1zM1 28h1v1h-1zM5 28h1v1h-1zM9 28h1v1h-1zM13 28h1v1h-1zM1 29h1v1h-1zM5 29h1v1h-1zM9 29h1v1h-1zM13 29h1v1h-1zM1 30h1v1h-1zM5 30h1v1h-1zM9 30h1v1h-1zM13 30h1v1h-1zM0 61h1v1h-1zM0 66h1v1h-1zM8 76h1v1h-1z"/><path fill="#747231" d="M12 25h1v1h-1zM12 32h1v1h-1zM12 61h1v1h-1zM0 77h1v1h-1z"/><path fill="#9b9941" d="M0 28h1v1h-1zM0 40h1v1h-1zM8 59h1v1h-1zM0 79h1v1h-1z"/><path fill="#a8a646" d="M4 28h1v1h-1zM12 64h1v1h-1z"/><path fill="#807e36" d="M12 28h1v1h-1zM0 43h1v1h-1zM4 62h1v1h-1zM12 77h1v1h-1z"/><path fill="#afad49" d="M8 29h1v1h-1zM0 41h1v1h-1zM4 55h1v1h-1zM8 60h1v1h-1z"/><path fill="#737131" d="M12 29h1v1h-1zM12 37h1v1h-1zM4 42h1v1h-1zM0 52h1v1h-1zM8 56h1v1h-1zM8 81h1v1h-1z"/><path fill="#828037" d="M0 30h1v1h-1zM0 33h1v1h-1zM4 34h1v1h-1zM4 43h1v1h-1z"/><path fill="#8b893a" d="M4 30h1v1h-1zM8 73h1v1h-1z"/><path fill="#6d6b2e" d="M4 31h1v1h-1zM0 42h1v1h-1zM13 50h1v1h-1zM1 51h1v1h-1zM5 51h1v1h-1zM8 51h1v1h-1zM9 51h1v1h-1zM13 51h1v1h-1zM1 52h1v1h-1zM5 52h1v1h-1zM9 52h1v1h-1zM13 52h1v1h-1zM1 53h1v1h-1zM5 53h1v1h-1zM9 53h1v1h-1zM13 53h1v1h-1zM1 54h1v1h-1zM5 54h1v1h-1zM9 54h1v1h-1zM13 54h1v1h-1zM1 55h1v1h-1zM5 55h1v1h-1zM9 55h1v1h-1zM13 55h1v1h-1zM1 56h1v1h-1zM5 56h1v1h-1zM9 56h1v1h-1zM13 56h1v1h-1zM1 57h1v1h-1zM5 57h1v1h-1zM9 57h1v1h-1zM13 57h1v1h-1zM1 58h1v1h-1zM5 58h1v1h-1zM9 58h1v1h-1zM13 58h1v1h-1zM1 59h1v1h-1zM5 59h1v1h-1zM9 59h1v1h-1zM13 59h1v1h-1zM1 60h1v1h-1zM5 60h1v1h-1zM9 60h1v1h-1zM0 81h1v1h-1z"/><path fill="#8a883a" d="M12 31h1v1h-1zM4 48h1v1h-1zM12 62h1v1h-1zM4 78h1v1h-1z"/><path fill="#95933e" d="M0 32h1v1h-1zM4 33h1v1h-1z"/><path fill="#a7a546" d="M4 32h1v1h-1zM8 36h1v1h-1zM4 45h1v1h-1z"/><path fill="#b1af4a" d="M8 32h1v1h-1zM0 71h1v1h-1zM8 80h1v1h-1z"/><path fill="#89873a" d="M8 34h1v1h-1zM8 68h1v1h-1z"/><path fill="#9a9840" d="M8 35h1v1h-1zM4 59h1v1h-1z"/><path fill="#a4a244" d="M4 36h1v1h-1zM12 54h1v1h-1zM0 75h1v1h-1z"/><path fill="#7f7d36" d="M4 38h1v1h-1zM12 47h1v1h-1zM8 67h1v1h-1z"/><path fill="#8f8d3c" d="M4 39h1v1h-1zM0 44h1v1h-1zM8 58h1v1h-1zM0 63h1v1h-1z"/><path fill="#92903d" d="M8 39h1v1h-1zM12 53h1v1h-1zM12 58h1v1h-1z"/><path fill="#aba947" d="M12 40h1v1h-1zM0 55h1v1h-1zM0 65h1v1h-1zM12 70h1v1h-1z"/><path fill="#8e8c3b" d="M12 43h1v1h-1z"/><path fill="#98963f" d="M8 44h1v1h-1z"/><path fill="#b2b04a" d="M12 45h1v1h-1z"/><path fill="#6e6c2f" d="M4 46h1v1h-1zM9 65h1v1h-1zM13 65h1v1h-1zM1 66h1v1h-1zM5 66h1v1h-1zM8 66h1v1h-1zM9 66h1v1h-1zM13 66h1v1h-1zM1 67h1v1h-1zM5 67h1v1h-1zM9 67h1v1h-1zM13 67h1v1h-1zM1 68h1v1h-1zM5 68h1v1h-1zM9 68h1v1h-1zM13 68h1v1h-1zM1 69h1v1h-1zM5 69h1v1h-1zM9 69h1v1h-1zM13 69h1v1h-1zM1 70h1v1h-1zM5 70h1v1h-1zM9 70h1v1h-1zM13 70h1v1h-1zM1 71h1v1h-1zM5 71h1v1h-1zM9 71h1v1h-1zM13 71h1v1h-1zM1 72h1v1h-1zM5 72h1v1h-1zM9 72h1v1h-1zM13 72h1v1h-1zM1 73h1v1h-1zM5 73h1v1h-1zM9 73h1v1h-1zM13 73h1v1h-1zM1 74h1v1h-1zM5 74h1v1h-1zM9 74h1v1h-1zM13 74h1v1h-1zM1 75h1v1h-1zM5 75h1v1h-1zM9 75h1v1h-1zM13 75h1v1h-1zM1 76h1v1h-1zM5 76h1v1h-1zM9 76h1v1h-1zM12 76h1v1h-1zM13 76h1v1h-1zM1 77h1v1h-1zM5 77h1v1h-1zM9 77h1v1h-1zM13 77h1v1h-1zM1 78h1v1h-1zM5 78h1v1h-1zM9 78h1v1h-1zM13 78h1v1h-1zM1 79h1v1h-1zM5 79h1v1h-1zM9 79h1v1h-1zM13 79h1v1h-1zM1 80h1v1h-1zM5 80h1v1h-1zM9 80h1v1h-1z"/><path fill="#727030" d="M12 46h1v1h-1zM4 81h1v1h-1z"/><path fill="#767432" d="M0 47h1v1h-1zM0 67h1v1h-1zM0 72h1v1h-1z"/><path fill="#7c7a34" d="M4 47h1v1h-1z"/><path fill="#838137" d="M0 48h1v1h-1zM12 52h1v1h-1zM0 58h1v1h-1z"/><path fill="#908e3c" d="M8 48h1v1h-1z"/><path fill="#9e9c42" d="M4 49h1v1h-1zM12 59h1v1h-1z"/><path fill="#878539" d="M4 53h1v1h-1zM4 68h1v1h-1z"/><path fill="#716f30" d="M4 56h1v1h-1z"/><path fill="#898739" d="M4 58h1v1h-1z"/><path fill="#727031" d="M8 61h1v1h-1zM12 71h1v1h-1z"/><path fill="#7a7833" d="M0 62h1v1h-1z"/><path fill="#b1af49" d="M4 65h1v1h-1z"/><path fill="#817f36" d="M12 67h1v1h-1z"/><path fill="#868438" d="M0 68h1v1h-1z"/><path fill="#95933f" d="M4 74h1v1h-1z"/><path fill="#66576b" d="M12 81h1v1h-1z"/><path fill="#625467" d="M13 81h1v1h-1zM14 81h1v1h-1zM15 81h1v1h-1zM1 82h1v1h-1zM2 82h1v1h-1zM3 82h1v1h-1zM5 82h1v1h-1zM6 82h1v1h-1zM7 82h1v1h-1zM9 82h1v1h-1zM10 82h1v1h-1zM11 82h1v1h-1zM13 82h1v1h-1zM14 82h1v1h-1zM15 82h1v1h-1zM1 83h1v1h-1zM2 83h1v1h-1zM3 83h1v1h-1zM5 83h1v1h-1zM6 83h1v1h-1zM7 83h1v1h-1zM9 83h1v1h-1zM10 83h1v1h-1zM11 83h1v1h-1zM13 83h1v1h-1zM14 83h1v1h-1zM15 83h1v1h-1zM1 84h1v1h-1zM2 84h1v1h-1zM3 84h1v1h-1zM5 84h1v1h-1zM6 84h1v1h-1zM7 84h1v1h-1zM9 84h1v1h-1zM10 84h1v1h-1zM11 84h1v1h-1zM13 84h1v1h-1zM14 84h1v1h-1zM15 84h1v1h-1zM1 85h1v1h-1zM2 85h1v1h-1zM3 85h1v1h-1zM5 85h1v1h-1zM6 85h1v1h-1zM7 85h1v1h-1zM9 85h1v1h-1zM10 85h1v1h-1zM11 85h1v1h-1zM13 85h1v1h-1zM14 85h1v1h-1zM15 85h1v1h-1zM1 86h1v1h-1zM2 86h1v1h-1zM3 86h1v1h-1zM5 86h1v1h-1zM6 86h1v1h-1zM7 86h1v1h-1zM9 86h1v1h-1zM10 86h1v1h-1zM11 86h1v1h-1zM13 86h1v1h-1zM14 86h1v1h-1zM15 86h1v1h-1zM1 87h1v1h-1zM2 87h1v1h-1zM3 87h1v1h-1zM5 87h1v1h-1zM6 87h1v1h-1zM7 87h1v1h-1zM9 87h1v1h-1zM10 87h1v1h-1zM11 87h1v1h-1zM13 87h1v1h-1zM14 87h1v1h-1zM15 87h1v1h-1zM1 88h1v1h-1zM2 88h1v1h-1zM3 88h1v1h-1zM5 88h1v1h-1zM6 88h1v1h-1zM7 88h1v1h-1zM9 88h1v1h-1zM10 88h1v1h-1zM11 88h1v1h-1zM13 88h1v1h-1zM14 88h1v1h-1zM15 88h1v1h-1zM1 89h1v1h-1zM2 89h1v1h-1zM3 89h1v1h-1zM5 89h1v1h-1zM6 89h1v1h-1zM7 89h1v1h-1zM9 89h1v1h-1zM10 89h1v1h-1zM11 89h1v1h-1zM13 89h1v1h-1zM14 89h1v1h-1zM15 89h1v1h-1zM1 90h1v1h-1zM2 90h1v1h-1zM3 90h1v1h-1zM5 90h1v1h-1zM6 90h1v1h-1zM7 90h1v1h-1zM9 90h1v1h-1zM10 90h1v1h-1zM11 90h1v1h-1zM13 90h1v1h-1zM14 90h1v1h-1zM15 90h1v1h-1zM1 91h1v1h-1zM2 91h1v1h-1zM3 91h1v1h-1zM5 91h1v1h-1zM6 91h1v1h-1zM7 91h1v1h-1zM9 91h1v1h-1zM10 91h1v1h-1zM11 91h1v1h-1zM13 91h1v1h-1zM14 91h1v1h-1zM15 91h1v1h-1zM1 92h1v1h-1zM2 92h1v1h-1zM3 92h1v1h-1zM5 92h1v1h-1zM6 92h1v1h-1zM7 92h1v1h-1zM9 92h1v1h-1zM10 92h1v1h-1zM11 92h1v1h-1zM13 92h1v1h-1zM14 92h1v1h-1zM15 92h1v1h-1zM1 93h1v1h-1zM2 93h1v1h-1zM3 93h1v1h-1zM5 93h1v1h-1zM6 93h1v1h-1zM7 93h1v1h-1zM9 93h1v1h-1zM10 93h1v1h-1zM11 93h1v1h-1zM13 93h1v1h-1zM14 93h1v1h-1zM15 93h1v1h-1zM1 94h1v1h-1zM2 94h1v1h-1zM3 94h1v1h-1zM5 94h1v1h-1zM6 94h1v1h-1zM7 94h1v1h-1zM9 94h1v1h-1zM10 94h1v1h-1zM11 94h1v1h-1zM13 94h1v1h-1zM14 94h1v1h-1zM15 94h1v1h-1zM1 95h1v1h-1zM2 95h1v1h-1zM3 95h1v1h-1zM5 95h1v1h-1zM6 95h1v1h-1zM7 95h1v1h-1zM9 95h1v1h-1zM10 95h1v1h-1zM11 95h1v1h-1zM13 95h1v1h-1zM14 95h1v1h-1zM15 95h1v1h-1zM1 96h1v1h-1zM2 96h1v1h-1zM3 96h1v1h-1zM5 96h1v1h-1zM6 96h1v1h-1zM7 96h1v1h-1zM9 96h1v1h-1zM10 96h1v1h-1zM11 96h1v1h-1zM13 96h1v1h-1zM14 96h1v1h-1zM15 96h1v1h-1zM1 97h1v1h-1zM2 97h1v1h-1zM3 97h1v1h-1zM5 97h1v1h-1zM6 97h1v1h-1zM7 97h1v1h-1zM9 97h1v1h-1zM10 97h1v1h-1zM11 97h1v1h-1zM13 97h1v1h-1zM14 97h1v1h-1zM15 97h1v1h-1zM1 98h1v1h-1zM2 98h1v1h-1zM3 98h1v1h-1zM5 98h1v1h-1zM6 98h1v1h-1zM7 98h1v1h-1zM9 98h1v1h-1zM10 98h1v1h-1zM11 98h1v1h-1zM13 98h1v1h-1zM14 98h1v1h-1zM15 98h1v1h-1z"/><path fill="#66586c" d="M0 82h1v1h-1z"/><path fill="#67596d" d="M4 82h1v1h-1z"/><path fill="#68596d" d="M8 82h1v1h-1z"/><path fill="#685a6e" d="M12 82h1v1h-1z"/><path fill="#6a5b70" d="M0 83h1v1h-1z"/><path fill="#6c5d71" d="M4 83h1v1h-1z"/><path fill="#6c5d72" d="M8 83h1v1h-1z"/><path fill="#6d5e73" d="M12 83h1v1h-1z"/><path fill="#6f6075" d="M0 84h1v1h-1z"/><path fill="#706176" d="M4 84h1v1h-1z"/><path fill="#716176" d="M8 84h1v1h-1z"/><path fill="#716177" d="M12 84h1v1h-1z"/><path fill="#726277" d="M0 85h1v1h-1zM4 85h1v1h-1z"/><path fill="#726278" d="M8 85h1v1h-1z"/><path fill="#736379" d="M12 85h1v1h-1z"/><path fill="#746379" d="M0 86h1v1h-1z"/><path fill="#74647a" d="M4 86h1v1h-1z"/><path fill="#75647a" d="M8 86h1v1h-1z"/><path fill="#76657b" d="M12 86h1v1h-1z"/><path fill="#77667d" d="M0 87h1v1h-1z"/><path fill="#78687e" d="M4 87h1v1h-1z"/><path fill="#79687e" d="M8 87h1v1h-1z"/><path fill="#7a697f" d="M12 87h1v1h-1z"/><path fill="#7c6b82" d="M0 88h1v1h-1zM4 88h1v1h-1z"/><path fill="#7e6d84" d="M8 88h1v1h-1z"/><path fill="#7f6d85" d="M12 88h1v1h-1z"/><path fill="#816f87" d="M0 89h1v1h-1zM4 89h1v1h-1z"/><path fill="#827088" d="M8 89h1v1h-1z"/><path fill="#84728a" d="M12 89h1v1h-1z"/><path fill="#84728b" d="M0 90h1v1h-1z"/><path fill="#85738c" d="M4 90h1v1h-1z"/><path fill="#86748c" d="M8 90h1v1h-1z"/><path fill="#87748d" d="M12 90h1v1h-1z"/><path fill="#89768f" d="M0 91h1v1h-1z"/><path fill="#897790" d="M4 91h1v1h-1z"/><path fill="#8a7790" d="M8 91h1v1h-1z"/><path fill="#8c7992" d="M12 91h1v1h-1z"/><path fill="#8d7a93" d="M0 92h1v1h-1z"/><path fill="#8e7b94" d="M4 92h1v1h-1z"/><path fill="#8f7c95" d="M8 92h1v1h-1z"/><path fill="#917d98" d="M12 92h1v1h-1z"/><path fill="#917e98" d="M0 93h1v1h-1z"/><path fill="#93809a" d="M4 93h1v1h-1z"/><path fill="#94809a" d="M8 93h1v1h-1z"/><path fill="#94809b" d="M12 93h1v1h-1zM0 94h1v1h-1z"/><path fill="#95819b" d="M4 94h1v1h-1z"/><path fill="#95819c" d="M8 94h1v1h-1z"/><path fill="#96829d" d="M12 94h1v1h-1z"/><path fill="#97839e" d="M0 95h1v1h-1z"/><path fill="#9985a0" d="M4 95h1v1h-1z"/><path fill="#9a85a1" d="M8 95h1v1h-1z"/><path fill="#9b86a2" d="M12 95h1v1h-1z"/><path fill="#9c88a3" d="M0 96h1v1h-1z"/><path fill="#9d88a4" d="M4 96h1v1h-1z"/><path fill="#9f8aa7" d="M8 96h1v1h-1z"/><path fill="#a08ba7" d="M12 96h1v1h-1z"/><path fill="#a08ba8" d="M0 97h1v1h-1z"/><path fill="#a28ca9" d="M4 97h1v1h-1z"/><path fill="#a38eaa" d="M8 97h1v1h-1z"/><path fill="#a38eab" d="M12 97h1v1h-1z"/><path fill="#a48eab" d="M0 98h1v1h-1zM4 98h1v1h-1z"/><path fill="#a690ae" d="M8 98h1v1h-1z"/><path fill="#a892b0" d="M12 98h1v1h-1z"/><path fill="#343470" d="M0 99h1v1h-1zM4 117h1v1h-1zM8 127h1v1h-1z"/><path fill="#32326a" d="M1 99h1v1h-1zM2 99h1v1h-1zM3 99h1v1h-1zM5 99h1v1h-1zM6 99h1v1h-1zM7 99h1v1h-1zM8 99h1v1h-1zM9 99h1v1h-1zM10 99h1v1h-1zM11 99h1v1h-1zM13 99h1v1h-1zM14 99h1v1h-1zM15 99h1v1h-1zM1 100h1v1h-1zM2 100h1v1h-1zM3 100h1v1h-1zM4 100h1v1h-1zM6 100h1v1h-1zM7 100h1v1h-1zM9 100h1v1h-1zM10 100h1v1h-1zM11 100h1v1h-1zM13 100h1v1h-1zM14 100h1v1h-1zM15 100h1v1h-1zM2 101h1v1h-1zM3 101h1v1h-1zM5 101h1v1h-1zM6 101h1v1h-1zM7 101h1v1h-1zM9 101h1v1h-1zM10 101h1v1h-1zM11 101h1v1h-1zM14 101h1v1h-1zM15 101h1v1h-1zM1 102h1v1h-1zM2 102h1v1h-1zM3 102h1v1h-1zM5 102h1v1h-1zM6 102h1v1h-1zM7 102h1v1h-1zM10 102h1v1h-1zM11 102h1v1h-1zM13 102h1v1h-1zM14 102h1v1h-1zM15 102h1v1h-1zM1 103h1v1h-1zM2 103h1v1h-1zM3 103h1v1h-1zM4 103h1v1h-1zM5 103h1v1h-1zM6 103h1v1h-1zM7 103h1v1h-1zM9 103h1v1h-1zM10 103h1v1h-1zM11 103h1v1h-1zM12 103h1v1h-1zM13 103h1v1h-1zM14 103h1v1h-1zM15 103h1v1h-1zM0 104h1v1h-1zM1 104h1v1h-1zM2 104h1v1h-1zM3 104h1v1h-1zM5 104h1v1h-1zM6 104h1v1h-1zM7 104h1v1h-1zM9 104h1v1h-1zM10 104h1v1h-1zM11 104h1v1h-1zM14 104h1v1h-1zM15 104h1v1h-1zM1 105h1v1h-1zM2 105h1v1h-1zM3 105h1v1h-1zM5 105h1v1h-1zM6 105h1v1h-1zM7 105h1v1h-1zM10 105h1v1h-1zM11 105h1v1h-1zM13 105h1v1h-1zM14 105h1v1h-1zM15 105h1v1h-1zM1 106h1v1h-1zM2 106h1v1h-1zM3 106h1v1h-1zM4 106h1v1h-1zM5 106h1v1h-1zM6 106h1v1h-1zM7 106h1v1h-1zM9 106h1v1h-1zM10 106h1v1h-1zM11 106h1v1h-1zM13 106h1v1h-1zM14 106h1v1h-1zM15 106h1v1h-1zM0 107h1v1h-1zM1 107h1v1h-1zM2 107h1v1h-1zM3 107h1v1h-1zM5 107h1v1h-1zM6 107h1v1h-1zM7 107h1v1h-1zM9 107h1v1h-1zM10 107h1v1h-1zM11 107h1v1h-1zM14 107h1v1h-1zM15 107h1v1h-1zM1 108h1v1h-1zM2 108h1v1h-1zM3 108h1v1h-1zM5 108h1v1h-1zM6 108h1v1h-1zM7 108h1v1h-1zM10 108h1v1h-1zM11 108h1v1h-1zM13 108h1v1h-1zM14 108h1v1h-1zM15 108h1v1h-1zM1 109h1v1h-1zM2 109h1v1h-1zM3 109h1v1h-1zM4 109h1v1h-1zM5 109h1v1h-1zM6 109h1v1h-1zM7 109h1v1h-1zM9 109h1v1h-1zM10 109h1v1h-1zM11 109h1v1h-1zM13 109h1v1h-1zM14 109h1v1h-1zM15 109h1v1h-1zM2 110h1v1h-1zM3 110h1v1h-1zM5 110h1v1h-1zM6 110h1v1h-1zM7 110h1v1h-1zM9 110h1v1h-1zM10 110h1v1h-1zM11 110h1v1h-1zM12 110h1v1h-1zM13 110h1v1h-1zM14 110h1v1h-1zM15 110h1v1h-1zM1 111h1v1h-1zM2 111h1v1h-1zM3 111h1v1h-1zM5 111h1v1h-1zM6 111h1v1h-1zM7 111h1v1h-1zM10 111h1v1h-1zM11 111h1v1h-1zM13 111h1v1h-1zM14 111h1v1h-1zM15 111h1v1h-1zM1 112h1v1h-1zM2 112h1v1h-1zM3 112h1v1h-1zM4 112h1v1h-1zM5 112h1v1h-1zM6 112h1v1h-1zM7 112h1v1h-1zM9 112h1v1h-1zM10 112h1v1h-1zM11 112h1v1h-1zM13 112h1v1h-1zM14 112h1v1h-1zM15 112h1v1h-1zM2 113h1v1h-1zM3 113h1v1h-1zM5 113h1v1h-1zM6 113h1v1h-1zM7 113h1v1h-1zM9 113h1v1h-1zM10 113h1v1h-1zM11 113h1v1h-1zM14 113h1v1h-1zM15 113h1v1h-1zM1 114h1v1h-1zM2 114h1v1h-1zM3 114h1v1h-1zM5 114h1v1h-1zM6 114h1v1h-1zM7 114h1v1h-1zM10 114h1v1h-1zM11 114h1v1h-1zM13 114h1v1h-1zM14 114h1v1h-1zM15 114h1v1h-1zM1 115h1v1h-1zM2 115h1v1h-1zM3 115h1v1h-1zM6 115h1v1h-1zM7 115h1v1h-1zM9 115h1v1h-1zM10 115h1v1h-1zM11 115h1v1h-1zM13 115h1v1h-1zM14 115h1v1h-1zM15 115h1v1h-1zM2 116h1v1h-1zM3 116h1v1h-1zM5 116h1v1h-1zM6 116h1v1h-1zM7 116h1v1h-1zM9 116h1v1h-1zM10 116h1v1h-1zM11 116h1v1h-1zM12 116h1v1h-1zM13 116h1v1h-1zM14 116h1v1h-1zM15 116h1v1h-1zM1 117h1v1h-1zM2 117h1v1h-1zM3 117h1v1h-1zM5 117h1v1h-1zM6 117h1v1h-1zM7 117h1v1h-1zM10 117h1v1h-1zM11 117h1v1h-1zM13 117h1v1h-1zM14 117h1v1h-1zM15 117h1v1h-1zM1 118h1v1h-1zM2 118h1v1h-1zM3 118h1v1h-1zM6 118h1v1h-1zM7 118h1v1h-1zM9 118h1v1h-1zM10 118h1v1h-1zM11 118h1v1h-1zM13 118h1v1h-1zM14 118h1v1h-1zM15 118h1v1h-1zM2 119h1v1h-1zM3 119h1v1h-1zM5 119h1v1h-1zM6 119h1v1h-1zM7 119h1v1h-1zM9 119h1v1h-1zM10 119h1v1h-1zM11 119h1v1h-1zM14 119h1v1h-1zM15 119h1v1h-1zM1 120h1v1h-1zM2 120h1v1h-1zM3 120h1v1h-1zM5 120h1v1h-1zM6 120h1v1h-1zM7 120h1v1h-1zM10 120h1v1h-1zM11 120h1v1h-1zM13 120h1v1h-1zM14 120h1v1h-1zM15 120h1v1h-1zM1 121h1v1h-1zM2 121h1v1h-1zM3 121h1v1h-1zM6 121h1v1h-1zM7 121h1v1h-1zM9 121h1v1h-1zM10 121h1v1h-1zM11 121h1v1h-1zM13 121h1v1h-1zM14 121h1v1h-1zM15 121h1v1h-1zM2 122h1v1h-1zM3 122h1v1h-1zM4 122h1v1h-1zM5 122h1v1h-1zM6 122h1v1h-1zM7 122h1v1h-1zM9 122h1v1h-1zM10 122h1v1h-1zM11 122h1v1h-1zM14 122h1v1h-1zM15 122h1v1h-1zM1 123h1v1h-1zM2 123h1v1h-1zM3 123h1v1h-1zM5 123h1v1h-1zM6 123h1v1h-1zM7 123h1v1h-1zM8 123h1v1h-1zM9 123h1v1h-1zM10 123h1v1h-1zM11 123h1v1h-1zM13 123h1v1h-1zM14 123h1v1h-1zM15 123h1v1h-1zM1 124h1v1h-1zM2 124h1v1h-1zM3 124h1v1h-1zM6 124h1v1h-1zM7 124h1v1h-1zM9 124h1v1h-1zM10 124h1v1h-1zM11 124h1v1h-1zM13 124h1v1h-1zM14 124h1v1h-1zM15 124h1v1h-1zM2 125h1v1h-1zM3 125h1v1h-1zM5 125h1v1h-1zM6 125h1v1h-1zM7 125h1v1h-1zM9 125h1v1h-1zM10 125h1v1h-1zM11 125h1v1h-1zM12 125h1v1h-1zM13 125h1v1h-1zM14 125h1v1h-1zM15 125h1v1h-1zM1 126h1v1h-1zM2 126h1v1h-1zM3 126h1v1h-1zM5 126h1v1h-1zM6 126h1v1h-1zM7 126h1v1h-1zM10 126h1v1h-1zM11 126h1v1h-1zM13 126h1v1h-1zM14 126h1v1h-1zM15 126h1v1h-1zM1 127h1v1h-1zM2 127h1v1h-1zM3 127h1v1h-1zM6 127h1v1h-1zM7 127h1v1h-1zM9 127h1v1h-1zM10 127h1v1h-1zM11 127h1v1h-1zM13 127h1v1h-1zM14 127h1v1h-1zM15 127h1v1h-1zM2 128h1v1h-1zM3 128h1v1h-1zM5 128h1v1h-1zM6 128h1v1h-1zM7 128h1v1h-1zM9 128h1v1h-1zM10 128h1v1h-1zM11 128h1v1h-1zM12 128h1v1h-1zM13 128h1v1h-1zM14 128h1v1h-1zM15 128h1v1h-1zM1 129h1v1h-1zM2 129h1v1h-1zM3 129h1v1h-1zM5 129h1v1h-1zM6 129h1v1h-1zM7 129h1v1h-1zM8 129h1v1h-1zM9 129h1v1h-1zM10 129h1v1h-1zM11 129h1v1h-1zM13 129h1v1h-1zM14 129h1v1h-1zM15 129h1v1h-1zM0 130h1v1h-1zM1 130h1v1h-1zM2 130h1v1h-1zM3 130h1v1h-1zM6 130h1v1h-1zM7 130h1v1h-1zM9 130h1v1h-1zM10 130h1v1h-1zM11 130h1v1h-1zM13 130h1v1h-1zM14 130h1v1h-1zM15 130h1v1h-1zM2 131h1v1h-1zM3 131h1v1h-1zM5 131h1v1h-1zM6 131h1v1h-1zM7 131h1v1h-1zM9 131h1v1h-1zM10 131h1v1h-1zM11 131h1v1h-1zM12 131h1v1h-1zM13 131h1v1h-1zM14 131h1v1h-1zM15 131h1v1h-1zM1 132h1v1h-1zM2 132h1v1h-1zM3 132h1v1h-1zM5 132h1v1h-1zM6 132h1v1h-1zM7 132h1v1h-1zM10 132h1v1h-1zM11 132h1v1h-1zM12 132h1v1h-1zM13 132h1v1h-1zM14 132h1v1h-1zM15 132h1v1h-1zM1 133h1v1h-1zM2 133h1v1h-1zM3 133h1v1h-1zM6 133h1v1h-1zM7 133h1v1h-1zM9 133h1v1h-1zM10 133h1v1h-1zM11 133h1v1h-1zM13 133h1v1h-1zM14 133h1v1h-1zM15 133h1v1h-1zM0 134h1v1h-1zM1 134h1v1h-1zM2 134h1v1h-1zM3 134h1v1h-1zM5 134h1v1h-1zM6 134h1v1h-1zM7 134h1v1h-1zM9 134h1v1h-1zM10 134h1v1h-1zM11 134h1v1h-1zM12 134h1v1h-1zM14 134h1v1h-1zM15 134h1v1h-1zM1 135h1v1h-1zM2 135h1v1h-1zM3 135h1v1h-1zM5 135h1v1h-1zM6 135h1v1h-1zM7 135h1v1h-1zM8 135h1v1h-1zM9 135h1v1h-1zM10 135h1v1h-1zM11 135h1v1h-1zM13 135h1v1h-1zM14 135h1v1h-1zM15 135h1v1h-1zM0 136h1v1h-1zM1 136h1v1h-1zM2 136h1v1h-1zM3 136h1v1h-1zM4 136h1v1h-1zM5 136h1v1h-1zM6 136h1v1h-1zM7 136h1v1h-1zM9 136h1v1h-1zM10 136h1v1h-1zM11 136h1v1h-1zM13 136h1v1h-1zM14 136h1v1h-1zM15 136h1v1h-1zM0 137h1v1h-1zM1 137h1v1h-1zM2 137h1v1h-1zM3 137h1v1h-1zM5 137h1v1h-1zM6 137h1v1h-1zM7 137h1v1h-1zM9 137h1v1h-1zM10 137h1v1h-1zM11 137h1v1h-1zM14 137h1v1h-1zM15 137h1v1h-1zM1 138h1v1h-1zM2 138h1v1h-1zM3 138h1v1h-1zM5 138h1v1h-1zM6 138h1v1h-1zM7 138h1v1h-1zM10 138h1v1h-1zM11 138h1v1h-1zM13 138h1v1h-1zM14 138h1v1h-1zM15 138h1v1h-1zM1 139h1v1h-1zM2 139h1v1h-1zM3 139h1v1h-1zM4 139h1v1h-1zM5 139h1v1h-1zM6 139h1v1h-1zM7 139h1v1h-1zM9 139h1v1h-1zM10 139h1v1h-1zM11 139h1v1h-1zM13 139h1v1h-1zM14 139h1v1h-1zM15 139h1v1h-1zM2 140h1v1h-1zM3 140h1v1h-1zM5 140h1v1h-1zM6 140h1v1h-1zM7 140h1v1h-1zM9 140h1v1h-1zM10 140h1v1h-1zM11 140h1v1h-1zM12 140h1v1h-1zM13 140h1v1h-1zM14 140h1v1h-1zM15 140h1v1h-1zM1 141h1v1h-1zM2 141h1v1h-1zM3 141h1v1h-1zM5 141h1v1h-1zM6 141h1v1h-1zM7 141h1v1h-1zM8 141h1v1h-1zM9 141h1v1h-1zM10 141h1v1h-1zM11 141h1v1h-1zM13 141h1v1h-1zM14 141h1v1h-1zM15 141h1v1h-1zM1 142h1v1h-1zM2 142h1v1h-1zM3 142h1v1h-1zM6 142h1v1h-1zM7 142h1v1h-1zM9 142h1v1h-1zM10 142h1v1h-1zM11 142h1v1h-1zM13 142h1v1h-1zM14 142h1v1h-1zM15 142h1v1h-1zM0 143h1v1h-1zM1 143h1v1h-1zM2 143h1v1h-1zM3 143h1v1h-1zM5 143h1v1h-1zM6 143h1v1h-1zM7 143h1v1h-1zM9 143h1v1h-1zM10 143h1v1h-1zM11 143h1v1h-1zM14 143h1v1h-1zM15 143h1v1h-1zM1 144h1v1h-1zM2 144h1v1h-1zM3 144h1v1h-1zM5 144h1v1h-1zM6 144h1v1h-1zM7 144h1v1h-1zM10 144h1v1h-1zM11 144h1v1h-1zM13 144h1v1h-1zM14 144h1v1h-1zM15 144h1v1h-1zM1 145h1v1h-1zM2 145h1v1h-1zM3 145h1v1h-1zM6 145h1v1h-1zM7 145h1v1h-1zM9 145h1v1h-1zM10 145h1v1h-1zM11 145h1v1h-1zM13 145h1v1h-1zM14 145h1v1h-1zM15 145h1v1h-1zM0 146h1v1h-1zM1 146h1v1h-1zM2 146h1v1h-1zM3 146h1v1h-1zM5 146h1v1h-1zM6 146h1v1h-1zM7 146h1v1h-1zM9 146h1v1h-1zM10 146h1v1h-1zM11 146h1v1h-1zM14 146h1v1h-1zM15 146h1v1h-1zM1 147h1v1h-1zM2 147h1v1h-1zM3 147h1v1h-1zM5 147h1v1h-1zM6 147h1v1h-1zM7 147h1v1h-1zM10 147h1v1h-1zM11 147h1v1h-1zM13 147h1v1h-1zM14 147h1v1h-1zM15 147h1v1h-1zM1 148h1v1h-1zM2 148h1v1h-1zM3 148h1v1h-1zM6 148h1v1h-1zM7 148h1v1h-1zM9 148h1v1h-1zM10 148h1v1h-1zM11 148h1v1h-1zM13 148h1v1h-1zM14 148h1v1h-1zM15 148h1v1h-1zM2 149h1v1h-1zM3 149h1v1h-1zM5 149h1v1h-1zM6 149h1v1h-1zM7 149h1v1h-1zM9 149h1v1h-1zM10 149h1v1h-1zM11 149h1v1h-1zM14 149h1v1h-1zM15 149h1v1h-1zM1 150h1v1h-1zM2 150h1v1h-1zM3 150h1v1h-1zM5 150h1v1h-1zM6 150h1v1h-1zM7 150h1v1h-1zM10 150h1v1h-1zM11 150h1v1h-1zM13 150h1v1h-1zM14 150h1v1h-1zM15 150h1v1h-1zM1 151h1v1h-1zM2 151h1v1h-1zM3 151h1v1h-1zM6 151h1v1h-1zM7 151h1v1h-1zM9 151h1v1h-1zM10 151h1v1h-1zM11 151h1v1h-1zM13 151h1v1h-1zM14 151h1v1h-1zM15 151h1v1h-1zM0 152h1v1h-1zM1 152h1v1h-1zM2 152h1v1h-1zM3 152h1v1h-1zM5 152h1v1h-1zM6 152h1v1h-1zM7 152h1v1h-1zM9 152h1v1h-1zM10 152h1v1h-1zM11 152h1v1h-1zM12 152h1v1h-1zM13 152h1v1h-1zM14 152h1v1h-1zM15 152h1v1h-1zM1 153h1v1h-1zM2 153h1v1h-1zM3 153h1v1h-1zM5 153h1v1h-1zM6 153h1v1h-1zM7 153h1v1h-1zM10 153h1v1h-1zM11 153h1v1h-1zM13 153h1v1h-1zM14 153h1v1h-1zM15 153h1v1h-1zM1 154h1v1h-1zM2 154h1v1h-1zM3 154h1v1h-1zM6 154h1v1h-1zM7 154h1v1h-1zM9 154h1v1h-1zM10 154h1v1h-1zM11 154h1v1h-1zM13 154h1v1h-1zM14 154h1v1h-1zM15 154h1v1h-1zM2 155h1v1h-1zM3 155h1v1h-1zM5 155h1v1h-1zM6 155h1v1h-1zM7 155h1v1h-1zM9 155h1v1h-1zM10 155h1v1h-1zM11 155h1v1h-1zM14 155h1v1h-1zM15 155h1v1h-1zM1 156h1v1h-1zM2 156h1v1h-1zM3 156h1v1h-1zM5 156h1v1h-1zM6 156h1v1h-1zM7 156h1v1h-1zM10 156h1v1h-1zM11 156h1v1h-1zM12 156h1v1h-1zM13 156h1v1h-1zM14 156h1v1h-1zM15 156h1v1h-1zM1 157h1v1h-1zM2 157h1v1h-1zM3 157h1v1h-1zM4 157h1v1h-1zM5 157h1v1h-1zM6 157h1v1h-1zM7 157h1v1h-1zM9 157h1v1h-1zM10 157h1v1h-1zM11 157h1v1h-1zM12 157h1v1h-1zM13 157h1v1h-1zM14 157h1v1h-1zM15 157h1v1h-1zM2 158h1v1h-1zM3 158h1v1h-1zM5 158h1v1h-1zM6 158h1v1h-1zM7 158h1v1h-1zM9 158h1v1h-1zM10 158h1v1h-1zM11 158h1v1h-1zM14 158h1v1h-1zM15 158h1v1h-1zM1 159h1v1h-1zM2 159h1v1h-1zM3 159h1v1h-1zM5 159h1v1h-1zM6 159h1v1h-1zM7 159h1v1h-1zM8 159h1v1h-1zM9 159h1v1h-1zM10 159h1v1h-1zM11 159h1v1h-1zM13 159h1v1h-1zM14 159h1v1h-1zM15 159h1v1h-1zM1 160h1v1h-1zM2 160h1v1h-1zM3 160h1v1h-1zM6 160h1v1h-1zM7 160h1v1h-1zM9 160h1v1h-1zM10 160h1v1h-1zM11 160h1v1h-1zM13 160h1v1h-1zM14 160h1v1h-1zM15 160h1v1h-1zM2 161h1v1h-1zM3 161h1v1h-1zM5 161h1v1h-1zM6 161h1v1h-1zM7 161h1v1h-1zM9 161h1v1h-1zM10 161h1v1h-1zM11 161h1v1h-1zM14 161h1v1h-1zM15 161h1v1h-1zM1 162h1v1h-1zM2 162h1v1h-1zM3 162h1v1h-1zM5 162h1v1h-1zM6 162h1v1h-1zM7 162h1v1h-1zM10 162h1v1h-1zM11 162h1v1h-1zM13 162h1v1h-1zM14 162h1v1h-1zM15 162h1v1h-1zM1 163h1v1h-1zM2 163h1v1h-1zM3 163h1v1h-1zM4 163h1v1h-1zM5 163h1v1h-1zM6 163h1v1h-1zM7 163h1v1h-1zM9 163h1v1h-1zM10 163h1v1h-1zM11 163h1v1h-1zM13 163h1v1h-1zM14 163h1v1h-1zM15 163h1v1h-1zM2 164h1v1h-1zM3 164h1v1h-1zM5 164h1v1h-1zM6 164h1v1h-1zM7 164h1v1h-1zM9 164h1v1h-1zM10 164h1v1h-1zM11 164h1v1h-1zM14 164h1v1h-1zM15 164h1v1h-1zM1 165h1v1h-1zM2 165h1v1h-1zM3 165h1v1h-1zM5 165h1v1h-1zM6 165h1v1h-1zM7 165h1v1h-1zM10 165h1v1h-1zM11 165h1v1h-1zM13 165h1v1h-1zM14 165h1v1h-1zM15 165h1v1h-1zM1 166h1v1h-1zM2 166h1v1h-1zM3 166h1v1h-1zM6 166h1v1h-1zM7 166h1v1h-1zM9 166h1v1h-1zM10 166h1v1h-1zM11 166h1v1h-1zM13 166h1v1h-1zM14 166h1v1h-1zM15 166h1v1h-1zM2 167h1v1h-1zM3 167h1v1h-1zM5 167h1v1h-1zM6 167h1v1h-1zM7 167h1v1h-1zM9 167h1v1h-1zM10 167h1v1h-1zM11 167h1v1h-1zM14 167h1v1h-1zM15 167h1v1h-1z"/><path fill="#3e3e87" d="M4 99h1v1h-1zM0 103h1v1h-1zM4 105h1v1h-1zM4 108h1v1h-1zM0 138h1v1h-1zM8 142h1v1h-1zM8 152h1v1h-1z"/><path fill="#373776" d="M12 99h1v1h-1zM12 112h1v1h-1zM8 113h1v1h-1zM8 121h1v1h-1zM0 122h1v1h-1zM8 128h1v1h-1zM8 148h1v1h-1zM12 158h1v1h-1zM4 167h1v1h-1z"/><path fill="#33336b" d="M0 100h1v1h-1zM0 141h1v1h-1zM8 154h1v1h-1zM8 161h1v1h-1z"/><path fill="#363673" d="M5 100h1v1h-1zM1 101h1v1h-1zM9 102h1v1h-1zM13 104h1v1h-1zM9 105h1v1h-1zM13 107h1v1h-1zM9 108h1v1h-1zM1 110h1v1h-1zM9 111h1v1h-1zM4 113h1v1h-1zM13 113h1v1h-1zM9 114h1v1h-1zM5 115h1v1h-1zM1 116h1v1h-1zM5 118h1v1h-1zM1 119h1v1h-1zM13 119h1v1h-1zM9 120h1v1h-1zM5 121h1v1h-1zM1 122h1v1h-1zM13 122h1v1h-1zM5 124h1v1h-1zM1 125h1v1h-1zM8 125h1v1h-1zM9 126h1v1h-1zM5 127h1v1h-1zM1 128h1v1h-1zM8 130h1v1h-1zM1 131h1v1h-1zM9 132h1v1h-1zM5 133h1v1h-1zM13 137h1v1h-1zM9 138h1v1h-1zM1 140h1v1h-1zM5 142h1v1h-1zM13 143h1v1h-1zM9 144h1v1h-1zM5 145h1v1h-1zM9 147h1v1h-1zM5 148h1v1h-1zM1 149h1v1h-1zM5 151h1v1h-1zM9 153h1v1h-1zM5 154h1v1h-1zM12 154h1v1h-1zM1 155h1v1h-1zM13 155h1v1h-1zM9 156h1v1h-1zM1 158h1v1h-1zM13 158h1v1h-1zM5 160h1v1h-1zM1 161h1v1h-1zM13 161h1v1h-1zM9 162h1v1h-1zM1 164h1v1h-1zM13 164h1v1h-1zM9 165h1v1h-1zM5 166h1v1h-1zM8 166h1v1h-1zM1 167h1v1h-1zM13 167h1v1h-1z"/><path fill="#3e3e86" d="M8 100h1v1h-1zM4 102h1v1h-1zM8 102h1v1h-1zM0 105h1v1h-1zM12 106h1v1h-1zM0 108h1v1h-1zM12 108h1v1h-1zM8 116h1v1h-1zM4 119h1v1h-1zM4 125h1v1h-1zM12 126h1v1h-1zM8 132h1v1h-1zM12 135h1v1h-1zM12 139h1v1h-1zM8 140h1v1h-1zM0 151h1v1h-1zM4 153h1v1h-1zM12 160h1v1h-1z"/><path fill="#373777" d="M12 100h1v1h-1zM8 110h1v1h-1zM0 117h1v1h-1zM12 144h1v1h-1zM0 154h1v1h-1z"/><path fill="#4a4aa3" d="M0 101h1v1h-1zM0 116h1v1h-1zM8 156h1v1h-1zM0 161h1v1h-1z"/><path fill="#3c3c81" d="M4 101h1v1h-1zM8 105h1v1h-1zM8 109h1v1h-1zM0 159h1v1h-1zM4 161h1v1h-1z"/><path fill="#353571" d="M8 101h1v1h-1zM0 123h1v1h-1zM4 129h1v1h-1zM12 129h1v1h-1zM8 147h1v1h-1zM0 163h1v1h-1zM12 163h1v1h-1z"/><path fill="#48489f" d="M12 101h1v1h-1z"/><path fill="#353572" d="M13 101h1v1h-1zM12 102h1v1h-1zM1 113h1v1h-1zM9 117h1v1h-1zM5 130h1v1h-1zM13 134h1v1h-1zM8 136h1v1h-1zM4 138h1v1h-1zM0 139h1v1h-1zM13 146h1v1h-1zM13 149h1v1h-1zM9 150h1v1h-1z"/><path fill="#41418e" d="M0 102h1v1h-1z"/><path fill="#40408b" d="M8 103h1v1h-1zM0 119h1v1h-1zM0 153h1v1h-1z"/><path fill="#3d3d84" d="M4 104h1v1h-1zM4 135h1v1h-1zM4 144h1v1h-1zM4 150h1v1h-1zM8 165h1v1h-1zM12 165h1v1h-1z"/><path fill="#353570" d="M8 104h1v1h-1zM12 109h1v1h-1z"/><path fill="#5050b2" d="M12 104h1v1h-1zM4 133h1v1h-1zM8 138h1v1h-1zM12 167h1v1h-1z"/><path fill="#33336d" d="M12 105h1v1h-1zM0 120h1v1h-1zM12 121h1v1h-1zM0 124h1v1h-1zM12 130h1v1h-1zM8 143h1v1h-1zM12 147h1v1h-1zM4 158h1v1h-1zM12 159h1v1h-1zM4 162h1v1h-1z"/><path fill="#383877" d="M0 106h1v1h-1zM12 133h1v1h-1zM12 142h1v1h-1z"/><path fill="#34346f" d="M8 106h1v1h-1zM0 115h1v1h-1zM0 121h1v1h-1z"/><path fill="#3c3c82" d="M4 107h1v1h-1zM12 127h1v1h-1zM8 160h1v1h-1z"/><path fill="#39397c" d="M8 107h1v1h-1zM8 133h1v1h-1zM0 157h1v1h-1z"/><path fill="#4d4dac" d="M12 107h1v1h-1zM4 151h1v1h-1z"/><path fill="#4949a0" d="M8 108h1v1h-1z"/><path fill="#383878" d="M0 109h1v1h-1zM0 110h1v1h-1zM12 118h1v1h-1zM12 123h1v1h-1zM0 126h1v1h-1zM0 133h1v1h-1zM12 143h1v1h-1zM0 147h1v1h-1zM8 150h1v1h-1zM4 165h1v1h-1z"/><path fill="#34346e" d="M4 110h1v1h-1zM8 126h1v1h-1zM0 135h1v1h-1zM4 142h1v1h-1zM12 145h1v1h-1zM0 150h1v1h-1zM12 150h1v1h-1zM0 162h1v1h-1zM12 166h1v1h-1z"/><path fill="#41418f" d="M0 111h1v1h-1zM4 131h1v1h-1zM4 166h1v1h-1z"/><path fill="#39397a" d="M4 111h1v1h-1zM4 137h1v1h-1zM8 137h1v1h-1zM4 147h1v1h-1z"/><path fill="#40408c" d="M8 111h1v1h-1zM4 146h1v1h-1z"/><path fill="#41418d" d="M12 111h1v1h-1z"/><path fill="#3a3a7e" d="M0 112h1v1h-1zM12 153h1v1h-1z"/><path fill="#3d3d83" d="M8 112h1v1h-1zM4 149h1v1h-1zM8 149h1v1h-1z"/><path fill="#5555bd" d="M0 113h1v1h-1z"/><path fill="#5a5ac9" d="M12 113h1v1h-1z"/><path fill="#3b3b80" d="M0 114h1v1h-1zM12 136h1v1h-1zM4 148h1v1h-1zM8 155h1v1h-1zM8 158h1v1h-1zM0 166h1v1h-1z"/><path fill="#3a3a7d" d="M4 114h1v1h-1zM8 122h1v1h-1zM4 134h1v1h-1zM12 137h1v1h-1zM0 156h1v1h-1zM4 164h1v1h-1z"/><path fill="#434392" d="M8 114h1v1h-1zM0 164h1v1h-1z"/><path fill="#39397b" d="M12 114h1v1h-1zM4 118h1v1h-1zM12 124h1v1h-1zM4 128h1v1h-1z"/><path fill="#5d5dd0" d="M4 115h1v1h-1z"/><path fill="#3f3f88" d="M8 115h1v1h-1zM8 163h1v1h-1z"/><path fill="#3c3c83" d="M12 115h1v1h-1zM0 132h1v1h-1zM0 142h1v1h-1zM4 143h1v1h-1zM8 153h1v1h-1zM4 155h1v1h-1zM8 167h1v1h-1z"/><path fill="#3a3a7c" d="M4 116h1v1h-1zM4 121h1v1h-1z"/><path fill="#5151b4" d="M8 117h1v1h-1z"/><path fill="#33336c" d="M12 117h1v1h-1zM4 123h1v1h-1zM4 126h1v1h-1zM4 141h1v1h-1zM8 144h1v1h-1z"/><path fill="#363674" d="M0 118h1v1h-1zM4 120h1v1h-1zM0 127h1v1h-1zM4 132h1v1h-1zM8 134h1v1h-1z"/><path fill="#42428f" d="M8 118h1v1h-1z"/><path fill="#3d3d85" d="M8 119h1v1h-1zM12 138h1v1h-1zM0 148h1v1h-1zM12 148h1v1h-1z"/><path fill="#4e4ead" d="M12 119h1v1h-1zM12 146h1v1h-1z"/><path fill="#444495" d="M8 120h1v1h-1z"/><path fill="#32326b" d="M12 120h1v1h-1z"/><path fill="#4b4ba5" d="M12 122h1v1h-1z"/><path fill="#46469a" d="M4 124h1v1h-1z"/><path fill="#40408d" d="M8 124h1v1h-1zM0 149h1v1h-1zM0 158h1v1h-1z"/><path fill="#5050b1" d="M0 125h1v1h-1z"/><path fill="#5757c2" d="M4 127h1v1h-1z"/><path fill="#5656c1" d="M0 128h1v1h-1z"/><path fill="#424291" d="M0 129h1v1h-1zM8 139h1v1h-1z"/><path fill="#4c4ca8" d="M4 130h1v1h-1z"/><path fill="#5555be" d="M0 131h1v1h-1z"/><path fill="#38387a" d="M8 131h1v1h-1zM0 160h1v1h-1zM8 164h1v1h-1z"/><path fill="#3f3f89" d="M0 140h1v1h-1z"/><path fill="#434393" d="M4 140h1v1h-1zM0 144h1v1h-1zM4 152h1v1h-1zM12 162h1v1h-1zM0 165h1v1h-1z"/><path fill="#3b3b7f" d="M12 141h1v1h-1zM8 145h1v1h-1zM4 156h1v1h-1zM4 160h1v1h-1z"/><path fill="#373775" d="M0 145h1v1h-1zM8 146h1v1h-1zM8 151h1v1h-1zM12 151h1v1h-1zM8 157h1v1h-1z"/><path fill="#5959c7" d="M4 145h1v1h-1z"/><path fill="#5d5dd2" d="M12 149h1v1h-1z"/><path fill="#5f5fd5" d="M4 154h1v1h-1z"/><path fill="#5f5fd6" d="M0 155h1v1h-1z"/><path fill="#454597" d="M12 155h1v1h-1zM12 161h1v1h-1z"/><path fill="#383879" d="M4 159h1v1h-1z"/><path fill="#5b5bcd" d="M8 162h1v1h-1z"/><path fill="#4949a2" d="M12 164h1v1h-1z"/><path fill="#6060d8" d="M0 167h1v1h-1z"/><path fill="#716f12" d="M0 168h1v1h-1zM2 172h1v1h-1zM0 174h1v1h-1zM8 177h1v1h-1zM2 178h1v1h-1z"/><path fill="#6a6810" d="M1 168h1v1h-1zM3 168h1v1h-1zM5 168h1v1h-1zM6 168h1v1h-1zM7 168h1v1h-1zM9 168h1v1h-1zM11 168h1v1h-1zM13 168h1v1h-1zM14 168h1v1h-1zM15 168h1v1h-1zM1 169h1v1h-1zM3 169h1v1h-1zM5 169h1v1h-1zM6 169h1v1h-1zM7 169h1v1h-1zM9 169h1v1h-1zM11 169h1v1h-1zM13 169h1v1h-1zM14 169h1v1h-1zM15 169h1v1h-1zM1 170h1v1h-1zM3 170h1v1h-1zM5 170h1v1h-1zM6 170h1v1h-1zM7 170h1v1h-1zM9 170h1v1h-1zM11 170h1v1h-1zM13 170h1v1h-1zM14 170h1v1h-1zM15 170h1v1h-1zM1 171h1v1h-1zM3 171h1v1h-1zM5 171h1v1h-1zM6 171h1v1h-1zM7 171h1v1h-1zM9 171h1v1h-1zM11 171h1v1h-1zM13 171h1v1h-1zM14 171h1v1h-1zM15 171h1v1h-1zM1 172h1v1h-1zM3 172h1v1h-1zM5 172h1v1h-1zM6 172h1v1h-1zM7 172h1v1h-1zM9 172h1v1h-1zM11 172h1v1h-1zM13 172h1v1h-1zM14 172h1v1h-1zM15 172h1v1h-1zM1 173h1v1h-1zM3 173h1v1h-1zM5 173h1v1h-1zM6 173h1v1h-1zM7 173h1v1h-1zM9 173h1v1h-1zM11 173h1v1h-1zM13 173h1v1h-1zM14 173h1v1h-1zM15 173h1v1h-1zM1 174h1v1h-1zM3 174h1v1h-1zM5 174h1v1h-1zM6 174h1v1h-1zM7 174h1v1h-1zM9 174h1v1h-1zM11 174h1v1h-1zM13 174h1v1h-1zM14 174h1v1h-1zM15 174h1v1h-1zM1 175h1v1h-1zM3 175h1v1h-1zM5 175h1v1h-1zM6 175h1v1h-1zM7 175h1v1h-1zM9 175h1v1h-1zM11 175h1v1h-1zM13 175h1v1h-1zM14 175h1v1h-1zM15 175h1v1h-1zM1 176h1v1h-1zM3 176h1v1h-1zM5 176h1v1h-1zM6 176h1v1h-1zM7 176h1v1h-1zM9 176h1v1h-1zM11 176h1v1h-1zM13 176h1v1h-1zM14 176h1v1h-1zM15 176h1v1h-1zM1 177h1v1h-1zM3 177h1v1h-1zM5 177h1v1h-1zM6 177h1v1h-1zM7 177h1v1h-1zM9 177h1v1h-1zM11 177h1v1h-1zM13 177h1v1h-1zM14 177h1v1h-1zM15 177h1v1h-1zM1 178h1v1h-1zM3 178h1v1h-1zM5 178h1v1h-1zM6 178h1v1h-1zM7 178h1v1h-1zM9 178h1v1h-1zM11 178h1v1h-1zM13 178h1v1h-1zM14 178h1v1h-1zM15 178h1v1h-1zM1 179h1v1h-1zM3 179h1v1h-1zM5 179h1v1h-1zM6 179h1v1h-1zM7 179h1v1h-1z"/><path fill="#747212" d="M2 168h1v1h-1z"/><path fill="#bcba22" d="M4 168h1v1h-1zM4 169h1v1h-1zM12 172h1v1h-1z"/><path fill="#6f6d11" d="M8 168h1v1h-1zM0 169h1v1h-1zM8 172h1v1h-1zM0 179h1v1h-1z"/><path fill="#737112" d="M10 168h1v1h-1z"/><path fill="#c7c524" d="M12 168h1v1h-1z"/><path fill="#7b7914" d="M2 169h1v1h-1zM10 173h1v1h-1z"/><path fill="#7e7c14" d="M8 169h1v1h-1zM0 172h1v1h-1z"/><path fill="#787613" d="M10 169h1v1h-1z"/><path fill="#b7b521" d="M12 169h1v1h-1z"/><path fill="#6b6910" d="M0 170h1v1h-1z"/><path fill="#807e15" d="M2 170h1v1h-1zM8 170h1v1h-1zM2 173h1v1h-1zM2 175h1v1h-1z"/><path fill="#cbc925" d="M4 170h1v1h-1z"/><path fill="#878516" d="M10 170h1v1h-1zM8 178h1v1h-1z"/><path fill="#b8b621" d="M12 170h1v1h-1z"/><path fill="#7f7d15" d="M0 171h1v1h-1zM0 173h1v1h-1z"/><path fill="#797713" d="M2 171h1v1h-1zM10 172h1v1h-1z"/><path fill="#c6c424" d="M4 171h1v1h-1z"/><path fill="#6d6b11" d="M8 171h1v1h-1z"/><path fill="#858316" d="M10 171h1v1h-1zM10 174h1v1h-1z"/><path fill="#c0be23" d="M12 171h1v1h-1z"/><path fill="#b9b721" d="M4 172h1v1h-1z"/><path fill="#d2d027" d="M4 173h1v1h-1z"/><path fill="#828015" d="M8 173h1v1h-1zM10 178h1v1h-1z"/><path fill="#a3a11d" d="M12 173h1v1h-1z"/><path fill="#6c6a10" d="M2 174h1v1h-1zM2 177h1v1h-1z"/><path fill="#d0ce26" d="M4 174h1v1h-1z"/><path fill="#848216" d="M8 174h1v1h-1z"/><path fill="#a19f1c" d="M12 174h1v1h-1zM4 177h1v1h-1z"/><path fill="#6e6c11" d="M0 175h1v1h-1zM0 177h1v1h-1zM2 179h1v1h-1z"/><path fill="#d5d327" d="M4 175h1v1h-1z"/><path fill="#838115" d="M8 175h1v1h-1z"/><path fill="#777513" d="M10 175h1v1h-1zM10 177h1v1h-1z"/><path fill="#adab1f" d="M12 175h1v1h-1zM12 178h1v1h-1z"/><path fill="#767413" d="M0 176h1v1h-1z"/><path fill="#727012" d="M2 176h1v1h-1z"/><path fill="#b2b020" d="M4 176h1v1h-1z"/><path fill="#868416" d="M8 176h1v1h-1z"/><path fill="#706e11" d="M10 176h1v1h-1z"/><path fill="#d4d227" d="M12 176h1v1h-1z"/><path fill="#a5a31d" d="M12 177h1v1h-1z"/><path fill="#7a7814" d="M0 178h1v1h-1z"/><path fill="#bdbb22" d="M4 178h1v1h-1z"/><path fill="#c2c023" d="M4 179h1v1h-1z"/><path fill="#3d3b07" d="M8 179h1v1h-1zM2 182h1v1h-1zM8 186h1v1h-1z"/><path fill="#302e04" d="M9 179h1v1h-1zM11 179h1v1h-1zM13 179h1v1h-1zM14 179h1v1h-1zM15 179h1v1h-1zM1 180h1v1h-1zM3 180h1v1h-1zM5 180h1v1h-1zM6 180h1v1h-1zM7 180h1v1h-1zM8 180h1v1h-1zM9 180h1v1h-1zM10 180h1v1h-1zM11 180h1v1h-1zM13 180h1v1h-1zM14 180h1v1h-1zM15 180h1v1h-1zM1 181h1v1h-1zM3 181h1v1h-1zM5 181h1v1h-1zM6 181h1v1h-1zM7 181h1v1h-1zM9 181h1v1h-1zM11 181h1v1h-1zM13 181h1v1h-1zM14 181h1v1h-1zM15 181h1v1h-1zM1 182h1v1h-1zM3 182h1v1h-1zM5 182h1v1h-1zM6 182h1v1h-1zM7 182h1v1h-1zM9 182h1v1h-1zM11 182h1v1h-1zM13 182h1v1h-1zM14 182h1v1h-1zM15 182h1v1h-1zM1 183h1v1h-1zM3 183h1v1h-1zM5 183h1v1h-1zM6 183h1v1h-1zM7 183h1v1h-1zM9 183h1v1h-1zM11 183h1v1h-1zM13 183h1v1h-1zM14 183h1v1h-1zM15 183h1v1h-1zM1 184h1v1h-1zM3 184h1v1h-1zM5 184h1v1h-1zM6 184h1v1h-1zM7 184h1v1h-1zM9 184h1v1h-1zM11 184h1v1h-1zM13 184h1v1h-1zM14 184h1v1h-1zM15 184h1v1h-1zM1 185h1v1h-1zM3 185h1v1h-1zM5 185h1v1h-1zM6 185h1v1h-1zM7 185h1v1h-1zM9 185h1v1h-1zM11 185h1v1h-1zM13 185h1v1h-1zM14 185h1v1h-1zM15 185h1v1h-1zM1 186h1v1h-1zM2 186h1v1h-1zM3 186h1v1h-1zM5 186h1v1h-1zM6 186h1v1h-1zM7 186h1v1h-1zM9 186h1v1h-1zM11 186h1v1h-1zM13 186h1v1h-1zM14 186h1v1h-1zM15 186h1v1h-1zM1 187h1v1h-1zM3 187h1v1h-1zM5 187h1v1h-1zM6 187h1v1h-1zM7 187h1v1h-1zM9 187h1v1h-1zM11 187h1v1h-1zM13 187h1v1h-1zM14 187h1v1h-1zM15 187h1v1h-1zM1 188h1v1h-1zM3 188h1v1h-1zM5 188h1v1h-1zM6 188h1v1h-1zM7 188h1v1h-1zM9 188h1v1h-1zM11 188h1v1h-1zM13 188h1v1h-1zM14 188h1v1h-1zM15 188h1v1h-1zM1 189h1v1h-1zM3 189h1v1h-1zM5 189h1v1h-1zM6 189h1v1h-1zM7 189h1v1h-1zM9 189h1v1h-1zM11 189h1v1h-1zM13 189h1v1h-1zM14 189h1v1h-1zM15 189h1v1h-1zM1 190h1v1h-1zM3 190h1v1h-1zM5 190h1v1h-1zM6 190h1v1h-1zM7 190h1v1h-1zM9 190h1v1h-1zM11 190h1v1h-1zM13 190h1v1h-1zM14 190h1v1h-1zM15 190h1v1h-1z"/><path fill="#3f3d07" d="M10 179h1v1h-1zM10 188h1v1h-1z"/><path fill="#434108" d="M12 179h1v1h-1z"/><path fill="#3a3806" d="M0 180h1v1h-1zM8 185h1v1h-1zM8 189h1v1h-1zM2 190h1v1h-1z"/><path fill="#363405" d="M2 180h1v1h-1zM8 182h1v1h-1zM2 184h1v1h-1zM10 187h1v1h-1zM2 188h1v1h-1z"/><path fill="#464408" d="M4 180h1v1h-1z"/><path fill="#343205" d="M12 180h1v1h-1zM0 190h1v1h-1z"/><path fill="#373505" d="M0 181h1v1h-1z"/><path fill="#3b3906" d="M2 181h1v1h-1zM8 184h1v1h-1z"/><path fill="#4c4a0a" d="M4 181h1v1h-1z"/><path fill="#383606" d="M8 181h1v1h-1zM0 183h1v1h-1z"/><path fill="#403e07" d="M10 181h1v1h-1z"/><path fill="#484609" d="M12 181h1v1h-1zM4 182h1v1h-1z"/><path fill="#3c3a06" d="M0 182h1v1h-1zM10 183h1v1h-1zM0 185h1v1h-1zM0 187h1v1h-1z"/><path fill="#312f04" d="M10 182h1v1h-1zM2 183h1v1h-1zM2 185h1v1h-1zM10 190h1v1h-1z"/><path fill="#59570c" d="M12 182h1v1h-1z"/><path fill="#323004" d="M4 183h1v1h-1zM0 184h1v1h-1zM10 186h1v1h-1z"/><path fill="#353305" d="M8 183h1v1h-1zM0 186h1v1h-1zM2 187h1v1h-1zM8 187h1v1h-1zM0 188h1v1h-1zM0 189h1v1h-1zM2 189h1v1h-1zM12 189h1v1h-1zM4 190h1v1h-1zM8 190h1v1h-1z"/><path fill="#5a580c" d="M12 183h1v1h-1z"/><path fill="#474509" d="M4 184h1v1h-1zM12 184h1v1h-1z"/><path fill="#393706" d="M10 184h1v1h-1zM10 185h1v1h-1z"/><path fill="#52500b" d="M4 185h1v1h-1z"/><path fill="#58560c" d="M12 185h1v1h-1z"/><path fill="#4d4b0a" d="M4 186h1v1h-1z"/><path fill="#454308" d="M12 186h1v1h-1z"/><path fill="#4f4d0a" d="M4 187h1v1h-1z"/><path fill="#5f5d0d" d="M12 187h1v1h-1z"/><path fill="#4e4c0a" d="M4 188h1v1h-1z"/><path fill="#333105" d="M8 188h1v1h-1z"/><path fill="#62600e" d="M12 188h1v1h-1z"/><path fill="#615f0e" d="M4 189h1v1h-1z"/><path fill="#413f07" d="M10 189h1v1h-1z"/><path fill="#3e3c07" d="M12 190h1v1h-1z"/></svg>
<svg style="left:2340px;top:80px" width="84" height="22" viewBox="0 0 84 22"><path d="M13 2 L4 11 L13 20" fill="none" stroke="#6a6a68" stroke-width="2.2"/><path d="M35 2 L44 11 L35 20" fill="none" stroke="#6a6a68" stroke-width="2.2"/><path d="M62 2.5 H80" stroke="#8a8a88" stroke-width="2"/><path d="M63 7 L71 19 L79 7" fill="none" stroke="#8a8a88" stroke-width="2.2"/></svg>
<div class="r" style="left:2px;top:882px;width:2426px;height:620px;background:#3a3935;"></div>
<div class="r" style="left:1208px;top:882px;width:12px;height:6px;background:#4e4d4a;border-radius:3px;"></div>
<div class="t" style="left:7px;top:895.05px;font-size:29px;color:#dcdcdc;">Template Results - DEX.bt</div>
<svg style="left:358px;top:903px" width="24" height="18" viewBox="0 0 24 18"><path d="M4.5 9 A7.5 7 0 0 1 18.5 5.5" fill="none" stroke="#dcdcdc" stroke-width="2"/><polygon points="21.5,2.5 21,9.5 14.5,7" fill="#dcdcdc"/><path d="M19.5 9 A7.5 7 0 0 1 5.5 12.5" fill="none" stroke="#dcdcdc" stroke-width="2"/><polygon points="2.5,15.5 3,8.5 9.5,11" fill="#dcdcdc"/></svg>
<svg style="left:2400px;top:904px" width="20" height="16" viewBox="0 0 20 16"><path d="M2.5 1.5 L17.5 14.5 M17.5 1.5 L2.5 14.5" stroke="#e0e0e0" stroke-width="3.2"/></svg>
<div class="r" style="left:2px;top:936px;width:2419px;height:40px;background:#4e4e4e;border-radius:9px 0 0 0;"></div>
<div class="r" style="left:2px;top:976px;width:2419px;height:2px;background:#393937;"></div>
<div class="r" style="left:498px;top:936px;width:2px;height:40px;background:#3b3b39;"></div>
<div class="r" style="left:1396px;top:936px;width:2px;height:40px;background:#3b3b39;"></div>
<div class="r" style="left:1556.5px;top:936px;width:2px;height:40px;background:#3b3b39;"></div>
<div class="r" style="left:1716.5px;top:936px;width:2px;height:40px;background:#3b3b39;"></div>
<div class="r" style="left:1926px;top:936px;width:2px;height:40px;background:#3b3b39;"></div>
<div class="r" style="left:2050px;top:936px;width:2px;height:40px;background:#3b3b39;"></div>
<div class="t" style="left:2.0px;width:495px;text-align:center;top:942.14px;font-size:27px;color:#dcdcdc;font-weight:bold;">Name</div>
<div class="t" style="left:499.0px;width:896px;text-align:center;top:942.14px;font-size:27px;color:#dcdcdc;font-weight:bold;">Value</div>
<div class="t" style="left:1397.0px;width:159px;text-align:center;top:942.14px;font-size:27px;color:#dcdcdc;font-weight:bold;">Start</div>
<div class="t" style="left:1558.0px;width:158px;text-align:center;top:942.14px;font-size:27px;color:#dcdcdc;font-weight:bold;">Size</div>
<div class="t" style="left:1718.0px;width:208px;text-align:center;top:942.14px;font-size:27px;color:#dcdcdc;font-weight:bold;">Type</div>
<div class="t" style="left:1928.0px;width:121px;text-align:center;top:942.14px;font-size:27px;color:#dcdcdc;font-weight:bold;">Color</div>
<div class="t" style="left:2051.0px;width:420px;text-align:center;top:942.14px;font-size:27px;color:#dcdcdc;font-weight:bold;">Comment</div>
<div class="r" style="left:2px;top:978px;width:2419px;height:40px;background:#4a4a4a;"></div>
<svg style="left:17px;top:988.7px" width="12" height="18" viewBox="0 0 12 18"><path d="M2 1.5 L9.8 9 L2 16.5" fill="none" stroke="#d0d0d0" stroke-width="2.8"/></svg>
<div class="t" style="left:40px;top:985.34px;font-size:27px;color:#dcdcdc;letter-spacing:0.25px;">dex_header</div>
<div class="t" style="left:1401px;top:985.34px;font-size:27px;color:#dcdcdc;">0h</div>
<div class="t" style="left:1561.5px;top:985.34px;font-size:27px;color:#dcdcdc;">70h</div>
<div class="t" style="left:1722.5px;top:985.34px;font-size:27px;color:#dcdcdc;">struct header...</div>
<div class="r" style="left:1935px;top:979.5px;width:106px;height:36px;background:#218038;box-sizing:border-box;border:2px solid #cfcfcf;"></div>
<div class="t" style="left:2056px;top:985.34px;font-size:27px;color:#dcdcdc;">Dex file header</div>
<svg style="left:17px;top:1028.7px" width="12" height="18" viewBox="0 0 12 18"><path d="M2 1.5 L9.8 9 L2 16.5" fill="none" stroke="#d0d0d0" stroke-width="2.8"/></svg>
<div class="t" style="left:40px;top:1025.34px;font-size:27px;color:#dcdcdc;letter-spacing:0.25px;">dex_string_ids</div>
<div class="t" style="left:504.5px;top:1025.34px;font-size:27px;color:#dcdcdc;letter-spacing:0.45px;">299 strings</div>
<div class="t" style="left:1401px;top:1025.34px;font-size:27px;color:#dcdcdc;">70h</div>
<div class="t" style="left:1561.5px;top:1025.34px;font-size:27px;color:#dcdcdc;">4ACh</div>
<div class="t" style="left:1722.5px;top:1025.34px;font-size:27px;color:#dcdcdc;">struct string_i...</div>
<div class="r" style="left:1935px;top:1019.5px;width:106px;height:36px;background:#7f7d37;box-sizing:border-box;border:2px solid #cfcfcf;"></div>
<div class="t" style="left:2056px;top:1025.34px;font-size:27px;color:#dcdcdc;">String ID list</div>
<svg style="left:17px;top:1068.7px" width="12" height="18" viewBox="0 0 12 18"><path d="M2 1.5 L9.8 9 L2 16.5" fill="none" stroke="#d0d0d0" stroke-width="2.8"/></svg>
<div class="t" style="left:40px;top:1065.34px;font-size:27px;color:#dcdcdc;letter-spacing:0.25px;">dex_type_ids</div>
<div class="t" style="left:504.5px;top:1065.34px;font-size:27px;color:#dcdcdc;letter-spacing:0.45px;">69 types</div>
<div class="t" style="left:1401px;top:1065.34px;font-size:27px;color:#dcdcdc;">51Ch</div>
<div class="t" style="left:1561.5px;top:1065.34px;font-size:27px;color:#dcdcdc;">114h</div>
<div class="t" style="left:1722.5px;top:1065.34px;font-size:27px;color:#dcdcdc;">struct type_id...</div>
<div class="r" style="left:1935px;top:1059.5px;width:106px;height:36px;background:#85707f;box-sizing:border-box;border:2px solid #cfcfcf;"></div>
<div class="t" style="left:2056px;top:1065.34px;font-size:27px;color:#dcdcdc;">Type ID list</div>
<svg style="left:17px;top:1108.7px" width="12" height="18" viewBox="0 0 12 18"><path d="M2 1.5 L9.8 9 L2 16.5" fill="none" stroke="#d0d0d0" stroke-width="2.8"/></svg>
<div class="t" style="left:40px;top:1105.34px;font-size:27px;color:#dcdcdc;letter-spacing:0.25px;">dex_proto_ids</div>
<div class="t" style="left:504.5px;top:1105.34px;font-size:27px;color:#dcdcdc;letter-spacing:0.45px;">92 prototypes</div>
<div class="t" style="left:1401px;top:1105.34px;font-size:27px;color:#dcdcdc;">630h</div>
<div class="t" style="left:1561.5px;top:1105.34px;font-size:27px;color:#dcdcdc;">450h</div>
<div class="t" style="left:1722.5px;top:1105.34px;font-size:27px;color:#dcdcdc;">struct proto_id...</div>
<div class="r" style="left:1935px;top:1099.5px;width:106px;height:36px;background:#3f3f84;box-sizing:border-box;border:2px solid #cfcfcf;"></div>
<div class="t" style="left:2056px;top:1105.34px;font-size:27px;color:#dcdcdc;">Method prototype ID list</div>
<svg style="left:17px;top:1148.7px" width="12" height="18" viewBox="0 0 12 18"><path d="M2 1.5 L9.8 9 L2 16.5" fill="none" stroke="#d0d0d0" stroke-width="2.8"/></svg>
<div class="t" style="left:40px;top:1145.34px;font-size:27px;color:#dcdcdc;letter-spacing:0.25px;">dex_field_ids</div>
<div class="t" style="left:504.5px;top:1145.34px;font-size:27px;color:#dcdcdc;letter-spacing:0.45px;">23 fields</div>
<div class="t" style="left:1401px;top:1145.34px;font-size:27px;color:#dcdcdc;">A80h</div>
<div class="t" style="left:1561.5px;top:1145.34px;font-size:27px;color:#dcdcdc;">B8h</div>
<div class="t" style="left:1722.5px;top:1145.34px;font-size:27px;color:#dcdcdc;">struct field_id...</div>
<div class="r" style="left:1935px;top:1139.5px;width:106px;height:36px;background:#808000;box-sizing:border-box;border:2px solid #cfcfcf;"></div>
<div class="t" style="left:2056px;top:1145.34px;font-size:27px;color:#dcdcdc;">Field ID list</div>
<svg style="left:17px;top:1188.7px" width="12" height="18" viewBox="0 0 12 18"><path d="M2 1.5 L9.8 9 L2 16.5" fill="none" stroke="#d0d0d0" stroke-width="2.8"/></svg>
<div class="t" style="left:40px;top:1185.34px;font-size:27px;color:#dcdcdc;letter-spacing:0.25px;">dex_method_ids</div>
<div class="t" style="left:504.5px;top:1185.34px;font-size:27px;color:#dcdcdc;letter-spacing:0.45px;">182 methods</div>
<div class="t" style="left:1401px;top:1185.34px;font-size:27px;color:#dcdcdc;">B38h</div>
<div class="t" style="left:1561.5px;top:1185.34px;font-size:27px;color:#dcdcdc;">5B0h</div>
<div class="t" style="left:1722.5px;top:1185.34px;font-size:27px;color:#dcdcdc;">struct method...</div>
<div class="r" style="left:1935px;top:1179.5px;width:106px;height:36px;background:#3d3d00;box-sizing:border-box;border:2px solid #cfcfcf;"></div>
<div class="t" style="left:2056px;top:1185.34px;font-size:27px;color:#dcdcdc;">Method ID list</div>
<svg style="left:17px;top:1228.7px" width="12" height="18" viewBox="0 0 12 18"><path d="M2 1.5 L9.8 9 L2 16.5" fill="none" stroke="#d0d0d0" stroke-width="2.8"/></svg>
<div class="t" style="left:40px;top:1225.34px;font-size:27px;color:#dcdcdc;letter-spacing:0.25px;">dex_class_defs</div>
<div class="t" style="left:504.5px;top:1225.34px;font-size:27px;color:#dcdcdc;letter-spacing:0.45px;">7 classes</div>
<div class="t" style="left:1401px;top:1225.34px;font-size:27px;color:#dcdcdc;">10E8h</div>
<div class="t" style="left:1561.5px;top:1225.34px;font-size:27px;color:#dcdcdc;">E0h</div>
<div class="t" style="left:1722.5px;top:1225.34px;font-size:27px;color:#dcdcdc;">struct class_d...</div>
<div class="r" style="left:1935px;top:1219.5px;width:106px;height:36px;background:#757575;box-sizing:border-box;border:2px solid #cfcfcf;"></div>
<div class="t" style="left:2056px;top:1225.34px;font-size:27px;color:#dcdcdc;">Class definitions list</div>
<svg style="left:17px;top:1268.7px" width="12" height="18" viewBox="0 0 12 18"><path d="M2 1.5 L9.8 9 L2 16.5" fill="none" stroke="#d0d0d0" stroke-width="2.8"/></svg>
<div class="t" style="left:40px;top:1265.34px;font-size:27px;color:#dcdcdc;letter-spacing:0.25px;">dex_map_list</div>
<div class="t" style="left:504.5px;top:1265.34px;font-size:27px;color:#dcdcdc;letter-spacing:0.45px;">16 items</div>
<div class="t" style="left:1401px;top:1265.34px;font-size:27px;color:#dcdcdc;">3B04h</div>
<div class="t" style="left:1561.5px;top:1265.34px;font-size:27px;color:#dcdcdc;">C4h</div>
<div class="t" style="left:1722.5px;top:1265.34px;font-size:27px;color:#dcdcdc;">struct map_lis...</div>
<div class="r" style="left:1935px;top:1259.5px;width:106px;height:36px;background:#6e8080;box-sizing:border-box;border:2px solid #cfcfcf;"></div>
<div class="t" style="left:2056px;top:1265.34px;font-size:27px;color:#dcdcdc;">Map list</div>
<svg style="left:17px;top:1308.7px" width="12" height="18" viewBox="0 0 12 18"><path d="M2 1.5 L9.8 9 L2 16.5" fill="none" stroke="#d0d0d0" stroke-width="2.8"/></svg>
<div class="t" style="left:40px;top:1305.34px;font-size:27px;color:#dcdcdc;letter-spacing:0.65px;">injected_data[3085540]</div>
<div class="t" style="left:1401px;top:1305.34px;font-size:27px;color:#dcdcdc;">3BC8h</div>
<div class="t" style="left:1561.5px;top:1305.34px;font-size:27px;color:#dcdcdc;">2F14E4h</div>
<div class="t" style="left:1722.5px;top:1305.34px;font-size:27px;color:#dcdcdc;">ubyte</div>
<div class="r" style="left:1935px;top:1299.5px;width:106px;height:36px;background:#8b3a3e;box-sizing:border-box;border:2px solid #cfcfcf;"></div>
<svg style="left:0;top:0" width="3024" height="1502"><rect x="1382.1" y="936.1" width="1041" height="419" fill="none" stroke="#ff0000" stroke-width="4.3"/></svg>
<svg style="left:0;top:0" width="3024" height="1502">
<line x1="689.5" y1="1393.5" x2="362" y2="1330" stroke="#ff0000" stroke-width="7.5" stroke-linecap="round"/>
<polygon points="336.7,1324.2 369.3,1316.4 364.8,1329.5 364.4,1343.5" fill="#ff0000"/>
<line x1="1752.4" y1="1424" x2="1912" y2="1346" stroke="#ff0000" stroke-width="7.5" stroke-linecap="round"/>
<polygon points="1935.8,1333.9 1902.3,1335.3 1912,1346 1914,1358.6" fill="#ff0000"/>
</svg>
<div class="r" style="left:0px;top:1499.5px;width:2428px;height:2px;background:#a8a8a8;"></div>
<div class="r" style="left:0px;top:1501.5px;width:3024px;height:1px;background:#2a2a28;"></div>
<div class="r" style="left:2430px;top:70px;width:594px;height:1432px;background:#3a3935;"></div>
<svg style="left:2435px;top:85.5px" width="19" height="15" viewBox="0 0 19 15"><path d="M1.5 0.8 L17.5 14.2 M17.5 0.8 L1.5 14.2" stroke="#e6e6e6" stroke-width="2.7"/></svg>
<svg style="left:2468.5px;top:89.5px" width="16" height="9" viewBox="0 0 16 9"><polygon points="0,0 16,0 8,8.5" fill="#e0e0e0"/></svg>
<div class="t" style="left:2577.0px;width:300px;text-align:center;top:77.95px;font-size:29px;color:#dedede;">Workspace</div>
<div class="r" style="left:2430px;top:118px;width:592px;height:40px;background:#4f4f4f;border-radius:10px 10px 0 0;"></div>
<div class="t" style="left:2627.0px;width:200px;text-align:center;top:125.14px;font-size:27px;color:#dedede;font-weight:bold;">Files</div>
<div class="r" style="left:3022px;top:118px;width:2px;height:1384px;background:#6a6a66;"></div>
<svg style="left:2440px;top:166px" width="31" height="25" viewBox="0 0 31 25"><path d="M1 3 h9 l2 2 h10 v6 H8 L1 22 Z" fill="#fbe9a6" stroke="#e3b13c" stroke-width="2" stroke-linejoin="round"/><path d="M8 11 H29 L21 23 H1 Z" fill="#fcedb0" stroke="#e3b13c" stroke-width="2" stroke-linejoin="round"/></svg>
<div class="t" style="left:2482.5px;top:163.56px;font-size:26.5px;color:#dcdcdc;font-weight:bold;">Open Files</div>
<div class="t" style="left:2502.5px;top:194.94px;font-size:27px;color:#dcdcdc;">classes.dex</div>
<svg style="left:2440px;top:224px" width="34" height="33" viewBox="0 0 34 33"><g transform="translate(0,8)"><path d="M1 3 h9 l2 2 h10 v6 H8 L1 22 Z" fill="#fbe9a6" stroke="#e3b13c" stroke-width="2" stroke-linejoin="round"/><path d="M8 11 H29 L21 23 H1 Z" fill="#fcedb0" stroke="#e3b13c" stroke-width="2" stroke-linejoin="round"/></g>
<g fill="#fbe9a6" stroke="#e3b13c" stroke-width="1.6"><rect x="13" y="1" width="6" height="6"/><rect x="13" y="7" width="6" height="6"/><rect x="19" y="7" width="6" height="6"/><rect x="13" y="13" width="6" height="6"/><rect x="19" y="13" width="6" height="6"/><rect x="25" y="13" width="6" height="6"/></g></svg>
<div class="t" style="left:2482.5px;top:227.06px;font-size:26.5px;color:#dcdcdc;font-weight:bold;">Project</div>
<svg style="left:2440px;top:256px" width="34" height="33" viewBox="0 0 34 33"><g transform="translate(0,8)"><path d="M1 3 h9 l2 2 h10 v6 H8 L1 22 Z" fill="#fbe9a6" stroke="#e3b13c" stroke-width="2" stroke-linejoin="round"/><path d="M8 11 H29 L21 23 H1 Z" fill="#fcedb0" stroke="#e3b13c" stroke-width="2" stroke-linejoin="round"/></g>
<polygon points="21,1 24,8 31.5,8.5 25.8,13.5 27.6,21 21,17 14.4,21 16.2,13.5 10.5,8.5 18,8" fill="#5aacec" stroke="#4a8fd0" stroke-width="1"/></svg>
<div class="t" style="left:2482.5px;top:259.16px;font-size:26.5px;color:#dcdcdc;font-weight:bold;">Favorite Files</div>
<svg style="left:2440px;top:288px" width="34" height="33" viewBox="0 0 34 33"><g transform="translate(0,8)"><path d="M1 3 h9 l2 2 h10 v6 H8 L1 22 Z" fill="#fbe9a6" stroke="#e3b13c" stroke-width="2" stroke-linejoin="round"/><path d="M8 11 H29 L21 23 H1 Z" fill="#fcedb0" stroke="#e3b13c" stroke-width="2" stroke-linejoin="round"/></g>
<circle cx="20.5" cy="10.5" r="10" fill="#ffffff" stroke="#a9bfdf" stroke-width="2"/><path d="M21 11 L24 6" stroke="#6f8fc0" stroke-width="2"/><circle cx="15" cy="13" r="1" fill="#6f8fc0"/><circle cx="26" cy="13" r="1" fill="#6f8fc0"/><circle cx="20.5" cy="4.5" r="1" fill="#6f8fc0"/></svg>
<div class="t" style="left:2482.5px;top:291.26px;font-size:26.5px;color:#dcdcdc;font-weight:bold;">Recent Files</div>
<div class="r" style="left:2430px;top:158px;width:592px;height:652px;overflow:hidden;">
<div class="t" style="left:72.5px;top:165.94px;font-size:27px;color:#dcdcdc;">keystore.jks</div>
<div class="t" style="left:72.5px;top:197.94px;font-size:27px;color:#dcdcdc;">keystore.jks</div>
<div class="t" style="left:72.5px;top:229.94px;font-size:27px;color:#dcdcdc;">core.1154</div>
<div class="t" style="left:72.5px;top:261.94px;font-size:27px;color:#dcdcdc;">GXHJY-2023031401.bin</div>
<div class="t" style="left:72.5px;top:293.94px;font-size:27px;color:#dcdcdc;">ctd_api.o</div>
<div class="t" style="left:72.5px;top:325.94px;font-size:27px;color:#dcdcdc;">key</div>
<div class="t" style="left:72.5px;top:357.94px;font-size:27px;color:#dcdcdc;">libthirteen.so</div>
<div class="t" style="left:72.5px;top:389.94px;font-size:27px;color:#dcdcdc;">libthirteen.so</div>
<div class="t" style="left:72.5px;top:421.94px;font-size:27px;color:#dcdcdc;">0x7200080000</div>
<div class="t" style="left:72.5px;top:453.94px;font-size:27px;color:#dcdcdc;">libflutter.so</div>
<div class="t" style="left:72.5px;top:485.94px;font-size:27px;color:#dcdcdc;">libapp.so</div>
<div class="t" style="left:72.5px;top:517.94px;font-size:27px;color:#dcdcdc;">main.node</div>
<div class="t" style="left:72.5px;top:549.94px;font-size:27px;color:#dcdcdc;">app-arm64.asar</div>
<div class="t" style="left:72.5px;top:581.94px;font-size:27px;color:#dcdcdc;">app.asar</div>
<div class="t" style="left:72.5px;top:613.94px;font-size:27px;color:#dcdcdc;">app-x64.asar</div>
<div class="t" style="left:72.5px;top:645.94px;font-size:27px;color:#dcdcdc;">main.node</div>
</div>
<div class="r" style="left:2430px;top:810px;width:532px;height:4px;background:#a0a0a0;"></div>
<div class="r" style="left:2430px;top:810px;width:273px;height:42px;background:#828282;border-radius:0 0 7px 7px;"></div>
<div class="r" style="left:2962px;top:810px;width:60px;height:42px;background:#4a4a4a;"></div>
<div class="r" style="left:2429px;top:851px;width:593px;height:2px;background:#a4a4a4;"></div>
<svg style="left:2446px;top:814px" width="27" height="30" viewBox="0 0 27 30"><g fill="#f8faff" stroke="#8fb0dc" stroke-width="2"><path d="M9 1 h7 l9 8 v12 h-16 z"/><path d="M5 5 h7 l9 8 v12 h-16 z"/><path d="M1 9 h10 l6 6 v14 h-16 z"/></g></svg>
<div class="t" style="left:2519.5px;top:818.14px;font-size:27px;color:#000000;">Workspace</div>
<svg style="left:2718px;top:814px" width="27" height="30" viewBox="0 0 27 30"><g fill="#fbe9a6" stroke="#e3b13c" stroke-width="2"><rect x="1" y="2" width="8" height="8"/><rect x="1" y="10" width="8" height="8"/><rect x="9" y="10" width="8" height="8"/><rect x="1" y="18" width="8" height="8"/><rect x="9" y="18" width="8" height="8"/><rect x="17" y="18" width="8" height="8"/></g></svg>
<div class="t" style="left:2793px;top:818.14px;font-size:27px;color:#dcdcdc;">Project</div>
<svg style="left:2941px;top:820px;overflow:hidden" width="21" height="25" viewBox="0 0 21 25"><g transform="translate(0,0)"><path d="M1 3 h9 l2 2 h10 v6 H8 L1 22 Z" fill="#fbe9a6" stroke="#e3b13c" stroke-width="2" stroke-linejoin="round"/><path d="M8 11 H29 L21 23 H1 Z" fill="#fcedb0" stroke="#e3b13c" stroke-width="2" stroke-linejoin="round"/></g></svg>
<svg style="left:2970px;top:821.5px" width="46" height="18" viewBox="0 0 46 18"><path d="M14 0.5 L3 9 L14 17.5" fill="none" stroke="#5e5e5e" stroke-width="3"/><path d="M32 0.5 L43 9 L32 17.5" fill="none" stroke="#ababab" stroke-width="3"/></svg>
<svg style="left:2435px;top:869.5px" width="19" height="15" viewBox="0 0 19 15"><path d="M1.5 0.8 L17.5 14.2 M17.5 0.8 L1.5 14.2" stroke="#e6e6e6" stroke-width="2.7"/></svg>
<svg style="left:2468.5px;top:873.5px" width="16" height="9" viewBox="0 0 16 9"><polygon points="0,0 16,0 8,8.5" fill="#e0e0e0"/></svg>
<div class="t" style="left:2577.0px;width:300px;text-align:center;top:862.45px;font-size:29px;color:#dedede;">Inspector</div>
<div class="r" style="left:2430px;top:902px;width:592px;height:40px;background:#4f4f4f;border-radius:10px 10px 0 0;"></div>
<div class="r" style="left:2668px;top:904px;width:2px;height:38px;background:#3d3d3b;"></div>
<div class="r" style="left:2430px;top:942px;width:592px;height:2px;background:#3a3a38;"></div>
<div class="t" style="left:2430.0px;width:238px;text-align:center;top:909.64px;font-size:27px;color:#dedede;font-weight:bold;">Type</div>
<div class="t" style="left:2670.0px;width:352px;text-align:center;top:909.64px;font-size:27px;color:#dedede;font-weight:bold;">Value</div>
<div class="r" style="left:2430px;top:944px;width:592px;height:40px;background:#4a4a4a;"></div>
<div class="t" style="left:2435px;top:951.74px;font-size:27px;color:#dcdcdc;">Binary</div>
<div class="t" style="left:2674px;top:951.74px;font-size:27px;color:#dcdcdc;letter-spacing:0.5px;">01100100</div>
<div class="t" style="left:2435px;top:991.74px;font-size:27px;color:#dcdcdc;">Signed Byte</div>
<div class="t" style="left:2674px;top:991.74px;font-size:27px;color:#dcdcdc;">100</div>
<div class="t" style="left:2435px;top:1031.74px;font-size:27px;color:#dcdcdc;">Unsigned Byte</div>
<div class="t" style="left:2674px;top:1031.74px;font-size:27px;color:#dcdcdc;">100</div>
<div class="t" style="left:2435px;top:1071.74px;font-size:27px;color:#dcdcdc;">Signed Short</div>
<div class="t" style="left:2674px;top:1071.74px;font-size:27px;color:#dcdcdc;letter-spacing:0.5px;">25956</div>
<div class="t" style="left:2435px;top:1111.74px;font-size:27px;color:#dcdcdc;">Unsigned Short</div>
<div class="t" style="left:2674px;top:1111.74px;font-size:27px;color:#dcdcdc;letter-spacing:0.5px;">25956</div>
<div class="t" style="left:2435px;top:1151.74px;font-size:27px;color:#dcdcdc;">Signed Int</div>
<div class="t" style="left:2674px;top:1151.74px;font-size:27px;color:#dcdcdc;letter-spacing:0.5px;">175662436</div>
<div class="t" style="left:2435px;top:1191.74px;font-size:27px;color:#dcdcdc;">Unsigned Int</div>
<div class="t" style="left:2674px;top:1191.74px;font-size:27px;color:#dcdcdc;letter-spacing:0.5px;">175662436</div>
<div class="t" style="left:2435px;top:1231.74px;font-size:27px;color:#dcdcdc;">Signed Int64</div>
<div class="t" style="left:2674px;top:1231.74px;font-size:27px;color:#dcdcdc;letter-spacing:0.5px;">14974455192773988</div>
<div class="t" style="left:2435px;top:1271.74px;font-size:27px;color:#dcdcdc;">Unsigned Int64</div>
<div class="t" style="left:2674px;top:1271.74px;font-size:27px;color:#dcdcdc;letter-spacing:0.5px;">14974455192773988</div>
<div class="t" style="left:2435px;top:1311.74px;font-size:27px;color:#dcdcdc;">Float</div>
<div class="t" style="left:2674px;top:1311.74px;font-size:27px;color:#dcdcdc;letter-spacing:0.5px;">1.195984e-32</div>
<div class="t" style="left:2435px;top:1351.74px;font-size:27px;color:#dcdcdc;">Double</div>
<div class="t" style="left:2674px;top:1351.74px;font-size:27px;color:#dcdcdc;letter-spacing:0.5px;">1.17928646356971e-307</div>
<div class="t" style="left:2435px;top:1391.74px;font-size:27px;color:#dcdcdc;">Half Float</div>
<div class="t" style="left:2674px;top:1391.74px;font-size:27px;color:#dcdcdc;">1380</div>
<div class="t" style="left:2435px;top:1431.74px;font-size:27px;color:#dcdcdc;">String</div>
<div class="t" style="left:2674px;top:1431.74px;font-size:27px;color:#dcdcdc;">dex 035</div>
<div class="r" style="left:2430px;top:1458px;width:532px;height:4px;background:#a0a0a0;"></div>
<div class="r" style="left:2430px;top:1458px;width:251px;height:41px;background:#828282;border-radius:0 0 7px 7px;"></div>
<div class="r" style="left:2962px;top:1458px;width:60px;height:41px;background:#4a4a4a;"></div>
<div class="r" style="left:2428px;top:1499.5px;width:596px;height:2px;background:#ababab;"></div>
<svg style="left:0;top:0" width="3024" height="1502"><polygon points="2463.8,1464.5 2446.6,1481.2 2456.2,1481.2 2453,1491.6 2469.6,1474.8 2460,1474.8" fill="#fcedaa" stroke="#e8b83c" stroke-width="2.4" stroke-linejoin="round"/></svg>
<div class="t" style="left:2519.5px;top:1466.64px;font-size:27px;color:#000000;">Inspector</div>
<svg style="left:2697px;top:1464px" width="26" height="30" viewBox="0 0 26 30"><g fill="#fbe9a6" stroke="#e3b13c" stroke-width="2"><rect x="1" y="1" width="8" height="8"/><rect x="15" y="10" width="9" height="8"/><rect x="15" y="20" width="9" height="8"/></g><path d="M9 6 v18 h6 M9 14 h6" fill="none" stroke="#5aacec" stroke-width="1.6" stroke-dasharray="2 2"/></svg>
<div class="t" style="left:2771px;top:1466.64px;font-size:27px;color:#dcdcdc;">Variables</div>
<svg style="left:2950px;top:1462px;overflow:hidden" width="12" height="34" viewBox="0 0 12 34"><rect x="1" y="1" width="14" height="32" fill="#fbe9a6" stroke="#e3b13c" stroke-width="2"/><path d="M4 6 h5 M4 11 h3 M4 16 h5 M4 21 h3 M4 26 h5" stroke="#e3b13c" stroke-width="1.6"/></svg>
<svg style="left:2970px;top:1470px" width="46" height="18" viewBox="0 0 46 18"><path d="M14 0.5 L3 9 L14 17.5" fill="none" stroke="#5e5e5e" stroke-width="3"/><path d="M32 0.5 L43 9 L32 17.5" fill="none" stroke="#ababab" stroke-width="3"/></svg>
<svg style="left:0;top:0" width="2100" height="70"><rect x="5.5" y="28" width="2" height="20" fill="#5a5a58"/><rect x="467.7" y="28" width="2" height="20" fill="#5a5a58"/><rect x="774" y="28" width="2" height="20" fill="#5a5a58"/><rect x="1024" y="28" width="2" height="20" fill="#5a5a58"/><rect x="1162" y="28" width="2" height="20" fill="#5a5a58"/><rect x="1468" y="28" width="2" height="20" fill="#5a5a58"/><rect x="1942" y="28" width="2" height="20" fill="#5a5a58"/><path d="M48.8 20.8 H64 L73 29.8 V52.9 H48.8 Z" fill="#f8faff" stroke="#8fadd6" stroke-width="2"/><path d="M64 20.8 V29.8 H73" fill="none" stroke="#8fadd6" stroke-width="2"/><path d="M81 42 L88.5 50 L96 42" fill="none" stroke="#6a6a68" stroke-width="2.6"/><path d="M121 51 V24 Q121 22.5 122.5 22.5 H128 L130 26.5 H147.5 V35" fill="#fcedaa" stroke="#e5b53f" stroke-width="2.2" stroke-linejoin="round"/><path d="M121 51 L137.5 35 H158.5 L142.5 51 Z" fill="#fcedaa" stroke="#e5b53f" stroke-width="2.2" stroke-linejoin="round"/><path d="M121 51 V27 H128" fill="none" stroke="#e5b53f" stroke-width="0"/><path d="M159 42 L166.5 50 L174 42" fill="none" stroke="#6a6a68" stroke-width="2.6"/><rect x="191" y="18.8" width="34" height="36.2" rx="2.5" fill="#62aef0" stroke="#3f86c8" stroke-width="2"/><rect x="196.8" y="21.3" width="22.4" height="15.2" fill="#ffffff"/><rect x="198.8" y="41.6" width="18.4" height="10.9" fill="#e9e7e3" stroke="#f3efe8" stroke-width="1"/><rect x="200.9" y="43.4" width="5.4" height="7.2" fill="#62aef0"/><path d="M261 19 H274.5 L281.5 26 V45.5 H261 Z" fill="#f8faff" stroke="#8fadd6" stroke-width="2"/><path d="M274.5 19 V26 H281.5" fill="none" stroke="#8fadd6" stroke-width="2"/><rect x="245" y="27" width="24" height="26" rx="2.5" fill="#62aef0" stroke="#3f86c8" stroke-width="2"/><rect x="249.1" y="29.5" width="15.8" height="10.9" fill="#ffffff"/><rect x="250.5" y="43.4" width="13.0" height="7.8" fill="#e9e7e3" stroke="#f3efe8" stroke-width="1"/><rect x="252.0" y="44.7" width="3.8" height="5.2" fill="#62aef0"/><rect x="313" y="21" width="24.5" height="26.5" rx="2.5" fill="#62aef0" stroke="#3f86c8" stroke-width="2"/><rect x="317.2" y="23.5" width="16.2" height="11.1" fill="#ffffff"/><rect x="318.6" y="37.7" width="13.2" height="7.9" fill="#e9e7e3" stroke="#f3efe8" stroke-width="1"/><rect x="320.1" y="39.0" width="3.9" height="5.3" fill="#62aef0"/><rect x="307" y="24.8" width="24" height="26.2" rx="2.5" fill="#62aef0" stroke="#3f86c8" stroke-width="2"/><rect x="311.1" y="27.3" width="15.8" height="11.0" fill="#ffffff"/><rect x="312.5" y="41.3" width="13.0" height="7.9" fill="#e9e7e3" stroke="#f3efe8" stroke-width="1"/><rect x="314.0" y="42.6" width="3.8" height="5.2" fill="#62aef0"/><rect x="301" y="28.6" width="24" height="26.6" rx="2.5" fill="#62aef0" stroke="#3f86c8" stroke-width="2"/><rect x="305.1" y="31.1" width="15.8" height="11.2" fill="#ffffff"/><rect x="306.5" y="45.4" width="13.0" height="8.0" fill="#e9e7e3" stroke="#f3efe8" stroke-width="1"/><rect x="308.0" y="46.7" width="3.8" height="5.3" fill="#62aef0"/><path d="M362.8 51 V23.8 Q362.8 22.8 363.8 22.8 H371.41 L373.41 26.8 H389.5 V30.8 H391.5 V51 Z" fill="#fcedaa" stroke="#e5b53f" stroke-width="2" stroke-linejoin="round"/><path d="M365.8 51 V30.8 H391.5" fill="none" stroke="#e5b53f" stroke-width="2"/><path d="M428.5 41.5 V19.8 Q428.5 18.8 429.5 18.8 H435.4 L437.4 22.8 H449.5 V26.8 H451.5 V41.5 Z" fill="#fcedaa" stroke="#e5b53f" stroke-width="2" stroke-linejoin="round"/><path d="M431.5 41.5 V26.8 H451.5" fill="none" stroke="#e5b53f" stroke-width="2"/><path d="M420.8 49.5 V27.8 Q420.8 26.8 421.8 26.8 H427.61 L429.61 30.8 H441.5 V34.8 H443.5 V49.5 Z" fill="#fcedaa" stroke="#e5b53f" stroke-width="2" stroke-linejoin="round"/><path d="M423.8 49.5 V34.8 H443.5" fill="none" stroke="#e5b53f" stroke-width="2"/><path d="M412.8 57.5 V35.5 Q412.8 34.5 413.8 34.5 H419.61 L421.61 38.5 H433.5 V42.5 H435.5 V57.5 Z" fill="#fcedaa" stroke="#e5b53f" stroke-width="2" stroke-linejoin="round"/><path d="M415.8 57.5 V42.5 H435.5" fill="none" stroke="#e5b53f" stroke-width="2"/><path d="M499.5 26 L503 24 L514 37 L511 40 Z" fill="#eef4fb" stroke="#9ab0d0" stroke-width="1.6"/><path d="M511 19 L514 18.5 L515 37 L511 38 Z" fill="#eef4fb" stroke="#9ab0d0" stroke-width="1.6"/><path d="M512 38 L516 41" stroke="#9ab0d0" stroke-width="3"/><circle cx="509" cy="47" r="5.2" fill="none" stroke="#5aacec" stroke-width="2.4"/><circle cx="509" cy="47" r="6.8" fill="none" stroke="#9ab0d0" stroke-width="1"/><circle cx="521" cy="41" r="5.2" fill="none" stroke="#5aacec" stroke-width="2.4"/><circle cx="521" cy="41" r="6.8" fill="none" stroke="#9ab0d0" stroke-width="1"/><path d="M553 21.2 H567 L573 27.2 V46.5 H553 Z" fill="#f8faff" stroke="#8fadd6" stroke-width="2"/><path d="M567 21.2 V27.2 H573" fill="none" stroke="#8fadd6" stroke-width="2"/><path d="M565.2 29.3 H579 L585 35.3 V54.8 H565.2 Z" fill="#f8faff" stroke="#8fadd6" stroke-width="2"/><path d="M579 29.3 V35.3 H585" fill="none" stroke="#8fadd6" stroke-width="2"/><rect x="609" y="20.8" width="32" height="32" rx="2.5" fill="#fcedaa" stroke="#e5b53f" stroke-width="2"/><path d="M617 25 L620 19 H629.5 L632.5 25 Z" fill="#f8faff" stroke="#9ab0d0" stroke-width="1.8"/><path d="M625 32.8 H637.5 L643.5 38.8 V54.8 H625 Z" fill="#f8faff" stroke="#8fadd6" stroke-width="2"/><path d="M637.5 32.8 V38.8 H643.5" fill="none" stroke="#8fadd6" stroke-width="2"/><path d="M666.5 23 V40 H682" fill="none" stroke="#4f7ba0" stroke-width="5"/><path d="M667.5 39 A13 13 0 1 1 685 50.5" fill="none" stroke="#4f7ba0" stroke-width="5" stroke-linecap="round"/><path d="M752.5 23 V40 H737" fill="none" stroke="#4f7ba0" stroke-width="5"/><path d="M751.5 39 A13 13 0 1 0 734 50.5" fill="none" stroke="#4f7ba0" stroke-width="5" stroke-linecap="round"/><path d="M804 54 L817.5 42.5" stroke="#e5b53f" stroke-width="6.5" stroke-linecap="round"/><path d="M804 54 L817.5 42.5" stroke="#fcedaa" stroke-width="3" stroke-linecap="round"/><circle cx="826.5" cy="31.4" r="12.3" fill="#ffffff" stroke="#9ab0d0" stroke-width="2"/><text x="857" y="55.7" font-family="Liberation Sans" font-size="31" font-weight="bold" fill="#5aacec">A</text><text x="875" y="45.5" font-family="Liberation Sans" font-size="30" font-weight="bold" fill="#4a8ac0">B</text><path d="M860.5 22 H870 V18.8 L879.5 26.8 L870 34.8 V31.5 H860.5 Z" fill="#fcedaa" stroke="#e5b53f" stroke-width="1.8" stroke-linejoin="round"/><path d="M913 45 V22 Q913 21 914 21 H920 L922 24.5 H940 V45 Z" fill="#fcedaa" stroke="#e5b53f" stroke-width="2" stroke-linejoin="round"/><path d="M913 45 L925 30 H947 L935 45 Z" fill="#fcedaa" stroke="#e5b53f" stroke-width="2" stroke-linejoin="round"/><path d="M923 55 L933 46" stroke="#e5b53f" stroke-width="6" stroke-linecap="round"/><path d="M923 55 L933 46" stroke="#fcedaa" stroke-width="2.6" stroke-linecap="round"/><circle cx="939.5" cy="38.7" r="8.6" fill="#f8faff" stroke="#9ab0d0" stroke-width="2"/><path d="M973 38 H998 M986 25 L999 38 L986 51" fill="none" stroke="#3a88c8" stroke-width="8" stroke-linecap="round" stroke-linejoin="round"/><path d="M973 38 H998 M986 25 L999 38 L986 51" fill="none" stroke="#5aacec" stroke-width="4.5" stroke-linecap="round" stroke-linejoin="round"/><path d="M1061.0 23 L1086 23 L1087.5 50.5 Q1087.5 52.8 1085 53 L1064.5 54.5 Q1062.0 54.6 1061.8 52 L1060.3 23 Z" fill="#f8faff" stroke="#8fadd6" stroke-width="2" stroke-linejoin="round"/><rect x="1059.0" y="18.3" width="30.0" height="6.4" rx="3.2" fill="#f8faff" stroke="#8fadd6" stroke-width="2"/><path d="M1062.5 24.5 L1087 24.5" stroke="#8fadd6" stroke-width="1.4"/><path d="M1055 28.5 L1069.5 43 L1055 57.5 Z" fill="#5aacec" stroke="#3a88c8" stroke-width="1.6" stroke-linejoin="round"/><path d="M1082 54 H1090 L1086 58 Z" fill="#6a6a68"/><path d="M1117.0 23 L1142 23 L1143.5 50.5 Q1143.5 52.8 1141 53 L1120.5 54.5 Q1118.0 54.6 1117.8 52 L1116.3 23 Z" fill="#fcedaa" stroke="#e5b53f" stroke-width="2" stroke-linejoin="round"/><rect x="1115.0" y="18.3" width="30.0" height="6.4" rx="3.2" fill="#fcedaa" stroke="#e5b53f" stroke-width="2"/><path d="M1118.5 24.5 L1143 24.5" stroke="#e5b53f" stroke-width="1.4"/><circle cx="1123.5" cy="31" r="2.8" fill="#e5b53f"/><circle cx="1135" cy="37" r="2.8" fill="#e5b53f"/><circle cx="1137" cy="45" r="2.8" fill="#e5b53f"/><path d="M1126 37 h2 M1130 37 h2 M1128 42 h2 M1128 46 h2 M1132 46 h2" stroke="#e5b53f" stroke-width="1.6"/><path d="M1110.5 28.5 L1125 43 L1110.5 57.5 Z" fill="#5aacec" stroke="#3a88c8" stroke-width="1.6" stroke-linejoin="round"/><path d="M1138 54 H1146 L1142 58 Z" fill="#6a6a68"/><rect x="1180.3" y="10.3" width="55.3" height="57.3" rx="8" fill="#252421"/><text x="1188.8" y="44" font-family="Liberation Mono" font-size="20" fill="#4f90c8" stroke="#4f90c8" stroke-width="0.7" letter-spacing="1.5">Hex</text><rect x="1246" y="20" width="32" height="1.8" fill="#4f7ba0"/><rect x="1246" y="24" width="20" height="1.8" fill="#4f7ba0"/><rect x="1246" y="28" width="14" height="1.8" fill="#4f7ba0"/><rect x="1246" y="32" width="16" height="1.8" fill="#4f7ba0"/><rect x="1246" y="36" width="18" height="1.8" fill="#4f7ba0"/><rect x="1246" y="40" width="32" height="1.8" fill="#4f7ba0"/><rect x="1246" y="44" width="20" height="1.8" fill="#4f7ba0"/><rect x="1246" y="48" width="14" height="1.8" fill="#4f7ba0"/><rect x="1246" y="52" width="16" height="1.8" fill="#4f7ba0"/><path d="M1278 21.7 H1282 V32 H1269.5 V35.8 L1264 30 L1269.5 24.5 V28 H1278 Z" fill="#4f7ba0"/><path d="M1278 41.7 H1282 V52 H1269.5 V55.8 L1264 50 L1269.5 44.5 V48 H1278 Z" fill="#4f7ba0"/><path d="M1313.5 24 H1330 V26 H1326 V52 H1324 V26 H1318 V52 H1316 V40 Q1306 40 1306 32 Q1306 24 1313.5 24 Z" fill="#4f7ba0"/><rect x="1360" y="24.10" width="14" height="2" fill="#5ab8f0"/><rect x="1378" y="24.10" width="14" height="2" fill="#5ab8f0"/><rect x="1360" y="28.13" width="14" height="2" fill="#5ab8f0"/><rect x="1378" y="28.13" width="14" height="2" fill="#5ab8f0"/><rect x="1360" y="32.16" width="14" height="2" fill="#5ab8f0"/><rect x="1378" y="32.16" width="14" height="2" fill="#5ab8f0"/><rect x="1360" y="36.19" width="14" height="2" fill="#5ab8f0"/><rect x="1378" y="36.19" width="14" height="2" fill="#5ab8f0"/><rect x="1360" y="40.22" width="14" height="2" fill="#5ab8f0"/><rect x="1378" y="40.22" width="14" height="2" fill="#5ab8f0"/><rect x="1360" y="44.25" width="14" height="2" fill="#5ab8f0"/><rect x="1378" y="44.25" width="14" height="2" fill="#5ab8f0"/><rect x="1360" y="48.28" width="14" height="2" fill="#5ab8f0"/><rect x="1378" y="48.28" width="14" height="2" fill="#5ab8f0"/><rect x="1360" y="52.31" width="14" height="2" fill="#5ab8f0"/><rect x="1378" y="52.31" width="14" height="2" fill="#5ab8f0"/><path d="M1437.5 33.5 L1448 48.5 V51.5 H1428.5 L1421.5 49 Z" fill="#fcedaa" stroke="#e5b53f" stroke-width="2" stroke-linejoin="round"/><path d="M1412 18.5 H1421 L1437.5 33.8 L1421.5 49.5 L1412 39.5 Z" fill="#f8faff" stroke="#8fadd6" stroke-width="2" stroke-linejoin="round"/><path d="M1444 54 H1452 L1448 58 Z" fill="#6a6a68"/><rect x="1498.8" y="20.8" width="28.5" height="34.5" rx="2.5" fill="#62aef0" stroke="#3f86c8" stroke-width="2"/><rect x="1502" y="24.1" width="21.8" height="5.9" fill="#ffffff"/><rect x="1502.0" y="34.1" width="3.9" height="3.9" fill="#fbe9a0"/><rect x="1508.1" y="34.1" width="3.9" height="3.9" fill="#fbe9a0"/><rect x="1514.1" y="34.1" width="3.9" height="3.9" fill="#fbe9a0"/><rect x="1520.2" y="34.1" width="3.9" height="3.9" fill="#fbe9a0"/><rect x="1502.0" y="40.1" width="3.9" height="3.9" fill="#fbe9a0"/><rect x="1508.1" y="40.1" width="3.9" height="3.9" fill="#fbe9a0"/><rect x="1514.1" y="40.1" width="3.9" height="3.9" fill="#fbe9a0"/><rect x="1520.2" y="40.1" width="3.9" height="3.9" fill="#fbe9a0"/><rect x="1502.0" y="46.2" width="3.9" height="3.9" fill="#fbe9a0"/><rect x="1508.1" y="46.2" width="3.9" height="3.9" fill="#fbe9a0"/><rect x="1514.1" y="46.2" width="3.9" height="3.9" fill="#fbe9a0"/><rect x="1520.2" y="46.2" width="3.9" height="3.9" fill="#d8c890"/><path d="M1564.8 18.8 H1579.5 L1585.5 24.8 V45.5 H1564.8 Z" fill="#f8faff" stroke="#8fadd6" stroke-width="2"/><path d="M1579.5 18.8 V24.8 H1585.5" fill="none" stroke="#8fadd6" stroke-width="2"/><path d="M1554.8 24.8 H1569.5 L1575.5 30.8 V51.3 H1554.8 Z" fill="#f8faff" stroke="#8fadd6" stroke-width="2"/><path d="M1569.5 24.8 V30.8 H1575.5" fill="none" stroke="#8fadd6" stroke-width="2"/><path d="M1565 36 Q1564 30.5 1571 30.5 Q1578.5 30.5 1578 37 Q1577.5 40.5 1573.5 42.5 V48" fill="none" stroke="#e5b53f" stroke-width="6.2" stroke-linecap="round"/><path d="M1565 36 Q1564 30.5 1571 30.5 Q1578.5 30.5 1578 37 Q1577.5 40.5 1573.5 42.5 V48" fill="none" stroke="#fcedaa" stroke-width="2.8" stroke-linecap="round"/><rect x="1570.3" y="51" width="6.5" height="5.5" rx="2" fill="#fcedaa" stroke="#e5b53f" stroke-width="1.8"/><path d="M1608.5 30.5 H1631 V20.5 L1643 34 L1631 47.5 V38 H1608.5 Z" fill="#fcedaa" stroke="#e5b53f" stroke-width="1.8" stroke-linejoin="round"/><path d="M1643 38.5 H1622 V28.5 L1608.5 42.2 L1622 55.8 V46 H1643 Z" fill="#5aacec" stroke="#3a88c8" stroke-width="1.8" stroke-linejoin="round"/><path d="M1631 38 V47.5 L1643 34" fill="#fcedaa" stroke="#e5b53f" stroke-width="1.8" stroke-linejoin="round"/><path d="M1663 18.5 H1667 V52 H1701.5 V56.5 H1663 Z" fill="#fcedaa" stroke="#e5b53f" stroke-width="1.8"/><rect x="1668.60" y="46.5" width="3.25" height="5.1" fill="#5aacec" stroke="#3a88c8" stroke-width="0.7"/><rect x="1671.85" y="42" width="3.25" height="9.6" fill="#5aacec" stroke="#3a88c8" stroke-width="0.7"/><rect x="1675.10" y="35" width="3.25" height="16.6" fill="#5aacec" stroke="#3a88c8" stroke-width="0.7"/><rect x="1678.35" y="27" width="3.25" height="24.6" fill="#5aacec" stroke="#3a88c8" stroke-width="0.7"/><rect x="1681.60" y="33.5" width="3.25" height="18.1" fill="#5aacec" stroke="#3a88c8" stroke-width="0.7"/><rect x="1684.85" y="42" width="3.25" height="9.6" fill="#5aacec" stroke="#3a88c8" stroke-width="0.7"/><rect x="1688.10" y="45.5" width="3.25" height="6.1" fill="#5aacec" stroke="#3a88c8" stroke-width="0.7"/><rect x="1691.35" y="39.5" width="3.25" height="12.1" fill="#5aacec" stroke="#3a88c8" stroke-width="0.7"/><rect x="1694.60" y="44" width="3.25" height="7.6" fill="#5aacec" stroke="#3a88c8" stroke-width="0.7"/><rect x="1697.85" y="48" width="3.25" height="3.6" fill="#5aacec" stroke="#3a88c8" stroke-width="0.7"/><path d="M1726 20 H1731.8 V26 H1738.1 V31.9 H1731.8 V37.7 H1726 V31.9 H1719.7 V26 H1726 Z" fill="#5aacec"/><path d="M1726.5 49.5 L1748.5 27.5" stroke="#5aacec" stroke-width="5.8" stroke-linecap="square"/><rect x="1738.1" y="44" width="16.1" height="5.8" fill="#5aacec"/><path d="M1750.5 54 H1758 L1754.2 58 Z" fill="#6a6a68"/><path d="M1789 25 H1811 V34 H1806 Q1803 30 1800 30 H1797 L1803 38.5 L1797 47.8 H1800 Q1803 47.8 1806 43.5 H1811 V53 H1789 V46 L1796 38.5 L1789 31 Z" fill="#5aacec" stroke="#3a88c8" stroke-width="1.8" stroke-linejoin="round"/><path d="M1777.5 35 L1787.5 44.5 L1804.5 23" fill="none" stroke="#e5b53f" stroke-width="7.5" stroke-linejoin="miter" stroke-linecap="square"/><path d="M1777.5 35 L1787.5 44.5 L1804.5 23" fill="none" stroke="#fcedaa" stroke-width="3.5" stroke-linejoin="miter" stroke-linecap="square"/><text x="1828.5" y="44" font-family="Liberation Mono" font-size="22.5" font-weight="bold" fill="#4f88b8" letter-spacing="0.6">mov</text><text x="1905" y="31.9" font-family="Liberation Sans" font-size="18.5" fill="#4f90c8">10</text><text x="1885.5" y="57.6" font-family="Liberation Sans" font-size="18.5" fill="#4f90c8">16</text><path d="M1904 20 Q1895 20 1895 29 V33 H1887.5 L1896 42 L1904.5 33 H1900.5 V29 Q1900.5 26 1904 26 Z" fill="#5aacec" stroke="#3a88c8" stroke-width="1"/><path d="M1908 56 Q1917 56 1917 47 V43 H1924.5 L1916 34 L1907.5 43 H1911.5 V47 Q1911.5 50 1908 50 Z" fill="#5aacec" stroke="#3a88c8" stroke-width="1"/><rect x="1979" y="29.5" width="19.5" height="19.2" fill="#4f7ba0"/></svg>
</body></html>
